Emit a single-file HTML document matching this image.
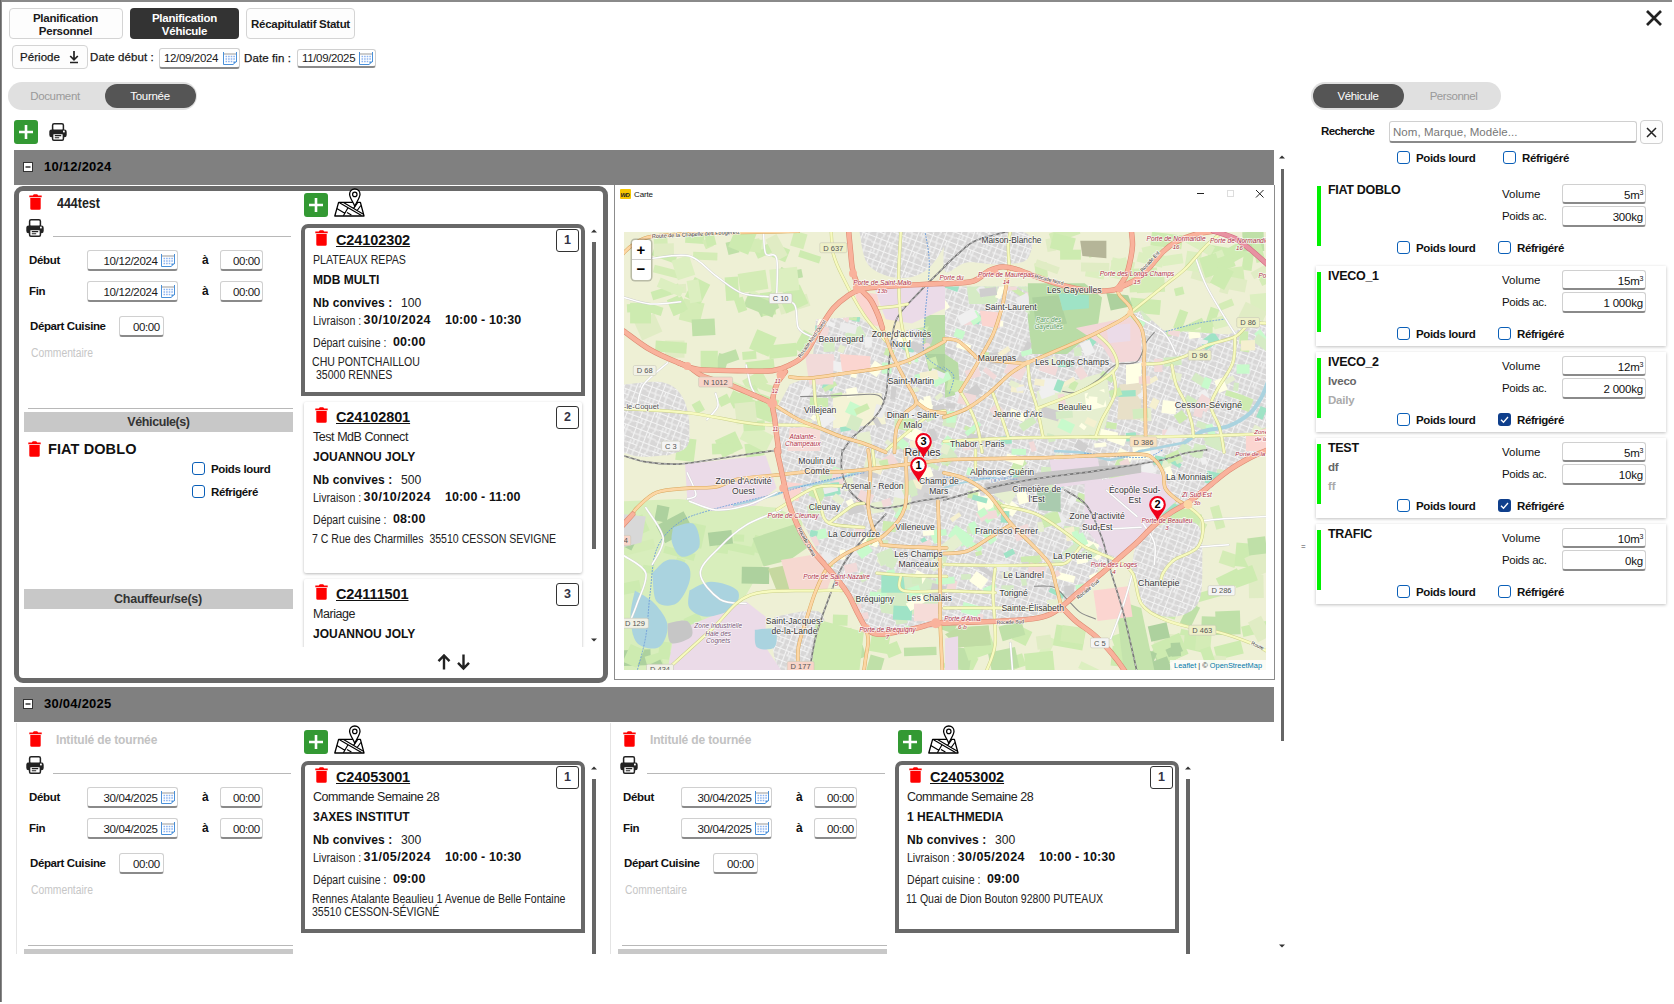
<!DOCTYPE html><html lang="fr"><head><meta charset="utf-8"><title>Planification Véhicule</title><style>html,body{margin:0;padding:0}body{width:1674px;height:1004px;position:relative;overflow:hidden;background:#fff;font-family:"Liberation Sans",sans-serif;}div,span,svg{box-sizing:content-box}svg{display:block}</style></head><body>
<div style="position:absolute;left:0px;top:0px;width:1672px;height:2px;background:#8a8a8a;"></div>
<div style="position:absolute;left:0px;top:0px;width:2px;height:1002px;background:linear-gradient(90deg,#555,#999);"></div>
<div style="position:absolute;left:9px;top:8px;width:112px;height:29px;border:1px solid #d4d4d4;border-radius:4px;background:#fdfdfd;"></div>
<span style="position:absolute;top:13.27px;font-size:11.5px;line-height:1;white-space:pre;color:#1a1a1a;font-weight:700;letter-spacing:-0.25px;left:-134.5px;width:400px;text-align:center;">Planification</span>
<span style="position:absolute;top:26.27px;font-size:11.5px;line-height:1;white-space:pre;color:#1a1a1a;font-weight:700;letter-spacing:-0.25px;left:-134.5px;width:400px;text-align:center;">Personnel</span>
<div style="position:absolute;left:130px;top:8px;width:109px;height:31px;border-radius:4px;background:#333;"></div>
<span style="position:absolute;top:13.27px;font-size:11.5px;line-height:1;white-space:pre;color:#fff;font-weight:700;letter-spacing:-0.25px;left:-15.5px;width:400px;text-align:center;">Planification</span>
<span style="position:absolute;top:26.27px;font-size:11.5px;line-height:1;white-space:pre;color:#fff;font-weight:700;letter-spacing:-0.25px;left:-15.5px;width:400px;text-align:center;">Véhicule</span>
<div style="position:absolute;left:246px;top:8px;width:107px;height:29px;border:1px solid #d4d4d4;border-radius:4px;background:#fdfdfd;"></div>
<span style="position:absolute;top:19.27px;font-size:11.5px;line-height:1;white-space:pre;color:#1a1a1a;font-weight:700;letter-spacing:-0.3px;left:100.5px;width:400px;text-align:center;">Récapitulatif Statut</span>
<div style="position:absolute;left:12px;top:45px;width:74px;height:22px;border:1px solid #d4d4d4;border-radius:4px;background:#fdfdfd;"></div>
<span style="position:absolute;top:52.27px;font-size:11.5px;line-height:1;white-space:pre;color:#1a1a1a;letter-spacing:0.05px;left:20px;-webkit-text-stroke:0.25px #1a1a1a;">Période</span>
<svg style="position:absolute;left:68px;top:50px" width="12" height="14" viewBox="0 0 12 14"><path d="M6 1v8.500M2.200 6L6 9.800 9.800 6M2 12.500h8" stroke="#222" stroke-width="1.7" fill="none"/></svg>
<span style="position:absolute;top:52.27px;font-size:11.5px;line-height:1;white-space:pre;color:#1a1a1a;letter-spacing:0.1px;left:90px;-webkit-text-stroke:0.25px #1a1a1a;">Date début :</span>
<div style="position:absolute;left:159px;top:48px;width:79px;height:18px;background:#fff;border:1px solid #d0d0d0;border-bottom:2px solid #8a8a8a;border-radius:3px;"></div>
<span style="position:absolute;top:52.77px;font-size:11.5px;line-height:1;white-space:pre;color:#1a1a1a;letter-spacing:-0.35px;left:164px;">12/09/2024</span>
<svg style="position:absolute;left:223px;top:51.5px" width="14" height="13" viewBox="0 0 14 13"><rect x="0.5" y="0.5" width="13" height="12" fill="#fff" stroke="none"/><path d="M0.5 0v12.5M13.5 0v10" stroke="#4a90d9" stroke-width="1"/><path d="M1 2h12" stroke="#999" stroke-width="1"/><path d="M2.5 4.5h10M2.5 7h10M2.5 9.500h8" stroke="#8db4f0" stroke-width="1.6" stroke-dasharray="1.6 1"/><path d="M10.5 12.500l3-2.5v-0.500h-3z" fill="#4a90d9"/><path d="M0.5 12.500h10" stroke="#4a90d9" stroke-width="1"/></svg>
<span style="position:absolute;top:53.27px;font-size:11.5px;line-height:1;white-space:pre;color:#1a1a1a;letter-spacing:0.1px;left:244px;-webkit-text-stroke:0.25px #1a1a1a;">Date fin :</span>
<div style="position:absolute;left:297px;top:49px;width:77px;height:16px;background:#fff;border:1px solid #d0d0d0;border-bottom:2px solid #8a8a8a;border-radius:3px;"></div>
<span style="position:absolute;top:52.77px;font-size:11.5px;line-height:1;white-space:pre;color:#1a1a1a;letter-spacing:-0.35px;left:302px;">11/09/2025</span>
<svg style="position:absolute;left:359px;top:51.5px" width="14" height="13" viewBox="0 0 14 13"><rect x="0.5" y="0.5" width="13" height="12" fill="#fff" stroke="none"/><path d="M0.5 0v12.5M13.5 0v10" stroke="#4a90d9" stroke-width="1"/><path d="M1 2h12" stroke="#999" stroke-width="1"/><path d="M2.5 4.5h10M2.5 7h10M2.5 9.500h8" stroke="#8db4f0" stroke-width="1.6" stroke-dasharray="1.6 1"/><path d="M10.5 12.500l3-2.5v-0.500h-3z" fill="#4a90d9"/><path d="M0.5 12.500h10" stroke="#4a90d9" stroke-width="1"/></svg>
<div style="position:absolute;left:8px;top:82px;width:189px;height:28px;background:#e0e0e0;border-radius:14px;"></div>
<div style="position:absolute;left:105px;top:84px;width:91px;height:24px;background:#555;border-radius:12px;"></div>
<span style="position:absolute;top:91.27px;font-size:11.5px;line-height:1;white-space:pre;color:#9a9a9a;letter-spacing:-0.35px;left:-145px;width:400px;text-align:center;">Document</span>
<span style="position:absolute;top:91.27px;font-size:11.5px;line-height:1;white-space:pre;color:#fff;letter-spacing:-0.3px;left:-50px;width:400px;text-align:center;">Tournée</span>
<div style="position:absolute;left:14px;top:120px;width:24px;height:24px;background:#339933;border-radius:3px"><svg width="24" height="24" viewBox="0 0 24 24"><path d="M12 5v14M5 12h14" stroke="#fff" stroke-width="2.6"/></svg></div>
<svg style="position:absolute;left:49px;top:123px" width="18" height="18" viewBox="0 0 18 18"><rect x="3.6" y="0.8" width="10.8" height="7" rx="1.5" fill="#fff" stroke="#222" stroke-width="1.5"/><rect x="0.3" y="6.6" width="17.4" height="7.6" rx="2.2" fill="#222"/><rect x="3.6" y="10.4" width="10.8" height="6.8" rx="1.2" fill="#fff" stroke="#222" stroke-width="1.5"/><path d="M5.8 12.6h6.4M5.8 14.7h4.4" stroke="#222" stroke-width="1.1"/><rect x="14" y="7.6" width="1.8" height="1.8" fill="#fff"/></svg>
<svg style="position:absolute;left:1645px;top:9px" width="18" height="18" viewBox="0 0 18 18"><path d="M2 2l14 14M16 2L2 16" stroke="#222" stroke-width="2.7"/></svg>
<div style="position:absolute;left:14px;top:150px;width:1260px;height:34.5px;background:#808080;"></div>
<svg style="position:absolute;left:23px;top:162px" width="10" height="10" viewBox="0 0 10 10"><rect x="0.5" y="0.5" width="9" height="9" fill="#fff" stroke="#333"/><path d="M2.500 5h5" stroke="#000" stroke-width="1.2"/></svg>
<span style="position:absolute;top:159.50px;font-size:13px;line-height:1;white-space:pre;color:#000;font-weight:700;letter-spacing:0.25px;left:44px;">10/12/2024</span>
<div style="position:absolute;left:14px;top:186px;width:594px;height:496.5px;overflow:hidden">
<div style="position:absolute;left:0px;top:0px;width:584px;height:486.5px;border:5px solid #696969;border-radius:9px;"></div>
<svg style="position:absolute;left:15px;top:8px" width="13" height="16" viewBox="0 0 13 16"><path fill="#ff0000" d="M0.3 1.5h3.5l1-1.3h3.4l1 1.3h3.5v1.7H0.3z M1.3 4h10.4v10.4a1.4 1.4 0 0 1-1.4 1.4H2.7a1.4 1.4 0 0 1-1.4-1.4z"/></svg>
<span style="position:absolute;top:10.15px;font-size:14px;line-height:1;white-space:pre;color:#222;font-weight:700;left:43px;transform:scaleX(0.89);transform-origin:0 0;">444test</span>
<svg style="position:absolute;left:12px;top:33px" width="18" height="18" viewBox="0 0 18 18"><rect x="3.6" y="0.8" width="10.8" height="7" rx="1.5" fill="#fff" stroke="#222" stroke-width="1.5"/><rect x="0.3" y="6.6" width="17.4" height="7.6" rx="2.2" fill="#222"/><rect x="3.6" y="10.4" width="10.8" height="6.8" rx="1.2" fill="#fff" stroke="#222" stroke-width="1.5"/><path d="M5.8 12.6h6.4M5.8 14.7h4.4" stroke="#222" stroke-width="1.1"/><rect x="14" y="7.6" width="1.8" height="1.8" fill="#fff"/></svg>
<div style="position:absolute;left:39px;top:50px;width:238px;height:1px;background:#b8b8b8;"></div>
<span style="position:absolute;top:68.77px;font-size:11.5px;line-height:1;white-space:pre;color:#111;font-weight:700;letter-spacing:-0.3px;left:15px;">Début</span>
<div style="position:absolute;left:73px;top:64px;width:89px;height:18px;background:#fff;border:1px solid #d0d0d0;border-bottom:2px solid #8a8a8a;border-radius:3px;"></div>
<span style="position:absolute;top:69.77px;font-size:11.5px;line-height:1;white-space:pre;color:#1a1a1a;letter-spacing:-0.35px;left:89.5px;">10/12/2024</span>
<svg style="position:absolute;left:147px;top:68px" width="14" height="13" viewBox="0 0 14 13"><rect x="0.5" y="0.5" width="13" height="12" fill="#fff" stroke="none"/><path d="M0.5 0v12.5M13.5 0v10" stroke="#4a90d9" stroke-width="1"/><path d="M1 2h12" stroke="#999" stroke-width="1"/><path d="M2.5 4.5h10M2.5 7h10M2.5 9.500h8" stroke="#8db4f0" stroke-width="1.6" stroke-dasharray="1.6 1"/><path d="M10.5 12.500l3-2.5v-0.500h-3z" fill="#4a90d9"/><path d="M0.5 12.500h10" stroke="#4a90d9" stroke-width="1"/></svg>
<span style="position:absolute;top:68.34px;font-size:12px;line-height:1;white-space:pre;color:#111;font-weight:700;left:188px;">à</span>
<div style="position:absolute;left:206px;top:64px;width:41px;height:18px;background:#fff;border:1px solid #d0d0d0;border-bottom:2px solid #8a8a8a;border-radius:3px;"></div>
<span style="position:absolute;top:69.77px;font-size:11.5px;line-height:1;white-space:pre;color:#1a1a1a;letter-spacing:-0.4px;left:219px;">00:00</span>
<span style="position:absolute;top:99.77px;font-size:11.5px;line-height:1;white-space:pre;color:#111;font-weight:700;letter-spacing:-0.3px;left:15px;">Fin</span>
<div style="position:absolute;left:73px;top:95px;width:89px;height:18px;background:#fff;border:1px solid #d0d0d0;border-bottom:2px solid #8a8a8a;border-radius:3px;"></div>
<span style="position:absolute;top:100.77px;font-size:11.5px;line-height:1;white-space:pre;color:#1a1a1a;letter-spacing:-0.35px;left:89.5px;">10/12/2024</span>
<svg style="position:absolute;left:147px;top:99px" width="14" height="13" viewBox="0 0 14 13"><rect x="0.5" y="0.5" width="13" height="12" fill="#fff" stroke="none"/><path d="M0.5 0v12.5M13.5 0v10" stroke="#4a90d9" stroke-width="1"/><path d="M1 2h12" stroke="#999" stroke-width="1"/><path d="M2.5 4.5h10M2.5 7h10M2.5 9.500h8" stroke="#8db4f0" stroke-width="1.6" stroke-dasharray="1.6 1"/><path d="M10.5 12.500l3-2.5v-0.500h-3z" fill="#4a90d9"/><path d="M0.5 12.500h10" stroke="#4a90d9" stroke-width="1"/></svg>
<span style="position:absolute;top:99.34px;font-size:12px;line-height:1;white-space:pre;color:#111;font-weight:700;left:188px;">à</span>
<div style="position:absolute;left:206px;top:95px;width:41px;height:18px;background:#fff;border:1px solid #d0d0d0;border-bottom:2px solid #8a8a8a;border-radius:3px;"></div>
<span style="position:absolute;top:100.77px;font-size:11.5px;line-height:1;white-space:pre;color:#1a1a1a;letter-spacing:-0.4px;left:219px;">00:00</span>
<span style="position:absolute;top:135.27px;font-size:11.5px;line-height:1;white-space:pre;color:#111;font-weight:700;letter-spacing:-0.4px;left:16px;">Départ Cuisine</span>
<div style="position:absolute;left:105px;top:130px;width:43px;height:18px;background:#fff;border:1px solid #d0d0d0;border-bottom:2px solid #8a8a8a;border-radius:3px;"></div>
<span style="position:absolute;top:135.77px;font-size:11.5px;line-height:1;white-space:pre;color:#1a1a1a;letter-spacing:-0.4px;left:119px;">00:00</span>
<span style="position:absolute;top:160.84px;font-size:12px;line-height:1;white-space:pre;color:#c6c6c6;left:17px;transform:scaleX(0.86);transform-origin:0 0;">Commentaire</span>
<div style="position:absolute;left:14px;top:222px;width:265px;height:1px;background:#b8b8b8;"></div>
<div style="position:absolute;left:10px;top:226px;width:269px;height:20px;background:#c8c8c8;"></div>
<span style="position:absolute;top:229.92px;font-size:12.5px;line-height:1;white-space:pre;color:#333;font-weight:700;letter-spacing:-0.4px;left:-55.5px;width:400px;text-align:center;">Véhicule(s)</span>
<svg style="position:absolute;left:14px;top:255px" width="13" height="16" viewBox="0 0 13 16"><path fill="#ff0000" d="M0.3 1.5h3.5l1-1.3h3.4l1 1.3h3.5v1.7H0.3z M1.3 4h10.4v10.4a1.4 1.4 0 0 1-1.4 1.4H2.7a1.4 1.4 0 0 1-1.4-1.4z"/></svg>
<span style="position:absolute;top:256.23px;font-size:14.5px;line-height:1;white-space:pre;color:#111;font-weight:700;letter-spacing:0.1px;left:34px;-webkit-text-stroke:0;">FIAT DOBLO</span>
<div style="position:absolute;left:178px;top:276px;width:11px;height:11px;border:1px solid #0a5fb8;border-radius:3px;background:#fff;"></div>
<span style="position:absolute;top:277.77px;font-size:11.5px;line-height:1;white-space:pre;color:#111;font-weight:700;letter-spacing:-0.35px;left:197px;">Poids lourd</span>
<div style="position:absolute;left:178px;top:299px;width:11px;height:11px;border:1px solid #0a5fb8;border-radius:3px;background:#fff;"></div>
<span style="position:absolute;top:301.27px;font-size:11.5px;line-height:1;white-space:pre;color:#111;font-weight:700;letter-spacing:-0.4px;left:197px;">Réfrigéré</span>
<div style="position:absolute;left:10px;top:403px;width:269px;height:20px;background:#c8c8c8;"></div>
<span style="position:absolute;top:406.92px;font-size:12.5px;line-height:1;white-space:pre;color:#333;font-weight:700;letter-spacing:-0.25px;left:-56px;width:400px;text-align:center;">Chauffeur/se(s)</span>
<div style="position:absolute;left:290px;top:7px;width:24px;height:24px;background:#339933;border-radius:3px"><svg width="24" height="24" viewBox="0 0 24 24"><path d="M12 5v14M5 12h14" stroke="#fff" stroke-width="2.6"/></svg></div>
<svg style="position:absolute;left:319.5px;top:1.5px" width="31" height="29" viewBox="0 0 31 29"><path d="M4.6 14.4h21.8l3.6 13.6H0.8z" fill="#fff" stroke="#000" stroke-width="1.3" stroke-linejoin="round"/><path d="M5.5 14.8L27.5 27.6M9.5 14.6L29 26M2.8 20.5l8 4.8M14 19.8l-4.6 8M13 24.5l4.4 2.6M23.5 14.8l-4 5.6M26.8 17.5l-3.6 5" stroke="#000" stroke-width="1.2" fill="none"/><path d="M20.8 1c3 0 5.2 2.3 5.2 5.2 0 3.4-3.4 7.6-5.2 12-1.8-4.4-5.2-8.6-5.2-12C15.600 3.3 17.8 1 20.8 1z" fill="#fff" stroke="#000" stroke-width="1.3"/><circle cx="20.8" cy="6.4" r="2.2" fill="#fff" stroke="#000" stroke-width="1.2"/></svg>
<div style="position:absolute;left:284px;top:36px;width:292px;height:424.5px;overflow:hidden">
<div style="position:absolute;left:3px;top:2px;width:276px;height:163.5px;border:4px solid #686868;border-bottom-width:4px;border-radius:7px 7px 0 0;background:#fff;"></div><svg style="position:absolute;left:16.5px;top:8px" width="13" height="16" viewBox="0 0 13 16"><path fill="#ff0000" d="M0.3 1.5h3.5l1-1.3h3.4l1 1.3h3.5v1.7H0.3z M1.3 4h10.4v10.4a1.4 1.4 0 0 1-1.4 1.4H2.7a1.4 1.4 0 0 1-1.4-1.4z"/></svg><span style="position:absolute;top:10.73px;font-size:14.5px;line-height:1;white-space:pre;color:#111;font-weight:700;letter-spacing:-0.1px;left:38px;text-decoration:underline;text-underline-offset:0.5px;text-decoration-thickness:1px;">C24102302</span><div style="position:absolute;left:258px;top:6.5px;width:21px;height:21.5px;border:1px solid #333;border-radius:3px;background:#fff;"></div><span style="position:absolute;top:11.92px;font-size:12.5px;line-height:1;white-space:pre;color:#334;font-weight:700;left:69.5px;width:400px;text-align:center;">1</span><span style="position:absolute;top:31.84px;font-size:12px;line-height:1;white-space:pre;color:#222;left:15px;transform:scaleX(0.885);transform-origin:0 0;">PLATEAUX REPAS</span><span style="position:absolute;top:52.34px;font-size:12px;line-height:1;white-space:pre;color:#111;font-weight:700;letter-spacing:0px;left:15px;">MDB MULTI</span><span style="position:absolute;top:75.34px;font-size:12px;line-height:1;white-space:pre;color:#111;font-weight:700;letter-spacing:0.1px;left:15px;">Nb convives :</span><span style="position:absolute;top:74.07px;font-size:13.5px;line-height:1;white-space:pre;color:#222;left:102.5px;transform:scaleX(0.9);transform-origin:0 0;">100</span><span style="position:absolute;top:92.84px;font-size:12px;line-height:1;white-space:pre;color:#222;left:15px;transform:scaleX(0.88);transform-origin:0 0;">Livraison :</span><span style="position:absolute;top:92.42px;font-size:12.5px;line-height:1;white-space:pre;color:#111;font-weight:700;letter-spacing:0.5px;left:65.5px;">30/10/2024</span><span style="position:absolute;top:92.42px;font-size:12.5px;line-height:1;white-space:pre;color:#111;font-weight:700;letter-spacing:0.1px;left:147px;">10:00 - 10:30</span><span style="position:absolute;top:114.84px;font-size:12px;line-height:1;white-space:pre;color:#222;left:15px;transform:scaleX(0.88);transform-origin:0 0;">Départ cuisine :</span><span style="position:absolute;top:114.42px;font-size:12.5px;line-height:1;white-space:pre;color:#111;font-weight:700;letter-spacing:0.1px;left:95px;">00:00</span><span style="position:absolute;top:133.84px;font-size:12px;line-height:1;white-space:pre;color:#222;left:14px;transform:scaleX(0.88);transform-origin:0 0;">CHU PONTCHAILLOU</span><span style="position:absolute;top:146.84px;font-size:12px;line-height:1;white-space:pre;color:#222;left:18px;transform:scaleX(0.88);transform-origin:0 0;">35000 RENNES</span>
<div style="position:absolute;left:6px;top:180px;width:278px;height:171px;background:#fff;box-shadow:0 1px 3px rgba(0,0,0,.28);border-radius:2px;"></div><svg style="position:absolute;left:16.5px;top:185px" width="13" height="16" viewBox="0 0 13 16"><path fill="#ff0000" d="M0.3 1.5h3.5l1-1.3h3.4l1 1.3h3.5v1.7H0.3z M1.3 4h10.4v10.4a1.4 1.4 0 0 1-1.4 1.4H2.7a1.4 1.4 0 0 1-1.4-1.4z"/></svg><span style="position:absolute;top:187.73px;font-size:14.5px;line-height:1;white-space:pre;color:#111;font-weight:700;letter-spacing:-0.1px;left:38px;text-decoration:underline;text-underline-offset:0.5px;text-decoration-thickness:1px;">C24102801</span><div style="position:absolute;left:258px;top:183.5px;width:21px;height:21.5px;border:1px solid #333;border-radius:3px;background:#fff;"></div><span style="position:absolute;top:188.92px;font-size:12.5px;line-height:1;white-space:pre;color:#334;font-weight:700;left:69.5px;width:400px;text-align:center;">2</span><span style="position:absolute;top:209.42px;font-size:12.5px;line-height:1;white-space:pre;color:#222;letter-spacing:-0.45px;left:15px;">Test MdB Connect</span><span style="position:absolute;top:229.34px;font-size:12px;line-height:1;white-space:pre;color:#111;font-weight:700;letter-spacing:0px;left:15px;">JOUANNOU JOLY</span><span style="position:absolute;top:252.34px;font-size:12px;line-height:1;white-space:pre;color:#111;font-weight:700;letter-spacing:0.1px;left:15px;">Nb convives :</span><span style="position:absolute;top:251.07px;font-size:13.5px;line-height:1;white-space:pre;color:#222;left:102.5px;transform:scaleX(0.9);transform-origin:0 0;">500</span><span style="position:absolute;top:269.84px;font-size:12px;line-height:1;white-space:pre;color:#222;left:15px;transform:scaleX(0.88);transform-origin:0 0;">Livraison :</span><span style="position:absolute;top:269.42px;font-size:12.5px;line-height:1;white-space:pre;color:#111;font-weight:700;letter-spacing:0.5px;left:65.5px;">30/10/2024</span><span style="position:absolute;top:269.42px;font-size:12.5px;line-height:1;white-space:pre;color:#111;font-weight:700;letter-spacing:0.1px;left:147px;">10:00 - 11:00</span><span style="position:absolute;top:291.84px;font-size:12px;line-height:1;white-space:pre;color:#222;left:15px;transform:scaleX(0.88);transform-origin:0 0;">Départ cuisine :</span><span style="position:absolute;top:291.42px;font-size:12.5px;line-height:1;white-space:pre;color:#111;font-weight:700;letter-spacing:0.1px;left:95px;">08:00</span><span style="position:absolute;top:310.84px;font-size:12px;line-height:1;white-space:pre;color:#222;left:14px;transform:scaleX(0.88);transform-origin:0 0;">7 C Rue des Charmilles  35510 CESSON SEVIGNE</span>
<div style="position:absolute;left:6px;top:357px;width:278px;height:171px;background:#fff;box-shadow:0 1px 3px rgba(0,0,0,.28);border-radius:2px;"></div><svg style="position:absolute;left:16.5px;top:362px" width="13" height="16" viewBox="0 0 13 16"><path fill="#ff0000" d="M0.3 1.5h3.5l1-1.3h3.4l1 1.3h3.5v1.7H0.3z M1.3 4h10.4v10.4a1.4 1.4 0 0 1-1.4 1.4H2.7a1.4 1.4 0 0 1-1.4-1.4z"/></svg><span style="position:absolute;top:364.73px;font-size:14.5px;line-height:1;white-space:pre;color:#111;font-weight:700;letter-spacing:-0.1px;left:38px;text-decoration:underline;text-underline-offset:0.5px;text-decoration-thickness:1px;">C24111501</span><div style="position:absolute;left:258px;top:360.5px;width:21px;height:21.5px;border:1px solid #333;border-radius:3px;background:#fff;"></div><span style="position:absolute;top:365.92px;font-size:12.5px;line-height:1;white-space:pre;color:#334;font-weight:700;left:69.5px;width:400px;text-align:center;">3</span><span style="position:absolute;top:386.42px;font-size:12.5px;line-height:1;white-space:pre;color:#222;letter-spacing:-0.45px;left:15px;">Mariage</span><span style="position:absolute;top:406.34px;font-size:12px;line-height:1;white-space:pre;color:#111;font-weight:700;letter-spacing:0px;left:15px;">JOUANNOU JOLY</span><span style="position:absolute;top:429.34px;font-size:12px;line-height:1;white-space:pre;color:#111;font-weight:700;letter-spacing:0.1px;left:15px;">Nb convives :</span><span style="position:absolute;top:428.07px;font-size:13.5px;line-height:1;white-space:pre;color:#222;left:102.5px;transform:scaleX(0.9);transform-origin:0 0;">50</span><span style="position:absolute;top:446.84px;font-size:12px;line-height:1;white-space:pre;color:#222;left:15px;transform:scaleX(0.88);transform-origin:0 0;">Livraison :</span><span style="position:absolute;top:446.42px;font-size:12.5px;line-height:1;white-space:pre;color:#111;font-weight:700;letter-spacing:0.5px;left:65.5px;">15/11/2024</span><span style="position:absolute;top:446.42px;font-size:12.5px;line-height:1;white-space:pre;color:#111;font-weight:700;letter-spacing:0.1px;left:147px;">10:00 - 11:00</span><span style="position:absolute;top:468.84px;font-size:12px;line-height:1;white-space:pre;color:#222;left:15px;transform:scaleX(0.88);transform-origin:0 0;">Départ cuisine :</span><span style="position:absolute;top:468.42px;font-size:12.5px;line-height:1;white-space:pre;color:#111;font-weight:700;letter-spacing:0.1px;left:95px;">08:00</span><span style="position:absolute;top:487.84px;font-size:12px;line-height:1;white-space:pre;color:#222;left:14px;transform:scaleX(0.88);transform-origin:0 0;"></span>
</div>
<svg style="position:absolute;left:576px;top:42px" width="8" height="6" viewBox="0 0 8 6"><path d="M1 4.500h6L4 1.500z" fill="#333"/></svg>
<svg style="position:absolute;left:576px;top:451px" width="8" height="6" viewBox="0 0 8 6"><path d="M1 1.500h6L4 4.500z" fill="#333"/></svg>
<div style="position:absolute;left:578px;top:56px;width:3.5px;height:307px;background:#666;"></div>
<svg style="position:absolute;left:422px;top:467px" width="36" height="18" viewBox="0 0 36 18"><path d="M8 16.500V3M2.500 8.200L8 2.500l5.500 5.700M27.500 1.500V15M22 9.800l5.500 5.700L33 9.800" stroke="#222" stroke-width="2.4" fill="none"/></svg>
</div>
<div style="position:absolute;left:614px;top:184.5px;width:659px;height:494px;border:1px solid #8c8c8c;border-top:none;background:#fff;"></div>
<div style="position:absolute;left:620px;top:189px;width:10.5px;height:10px;background:#f6c600;border-radius:1px;"></div>
<span style="position:absolute;top:191.92px;font-size:6px;line-height:1;white-space:pre;color:#222;font-weight:700;letter-spacing:-0.8px;left:620.6px;font-style:italic;">WD</span>
<span style="position:absolute;top:190.73px;font-size:8px;line-height:1;white-space:pre;color:#111;letter-spacing:-0.15px;left:634px;">Carte</span>
<svg style="position:absolute;left:1190px;top:186px" width="80" height="16" viewBox="0 0 80 16"><path d="M7 7.500h7" stroke="#222" stroke-width="1"/><rect x="37.500" y="4.500" width="6" height="6" fill="none" stroke="#ddd"/><path d="M66 4l7.500 7.500M73.500 4L66 11.500" stroke="#222" stroke-width="1"/></svg>
<div style="position:absolute;left:624px;top:232px;width:642px;height:438px;overflow:hidden;background:#eef0d5"><svg width="642" height="438" viewBox="0 0 642 438" style="position:absolute;left:0;top:0;font-family:'Liberation Sans',sans-serif"><defs><pattern id="urb" width="26" height="22" patternUnits="userSpaceOnUse" patternTransform="rotate(21)"><rect width="26" height="22" fill="#d8d7d7"/><path d="M0 2.500h26M0 8h15M17 7h9M0 13.500h26M0 18.500h11M13 19h13M3.500 0v13M3 15v7M9 0v8M10 8v14M15.500 0v22M21 0v13M22 13v9M6 13.500v5M18.500 2.500v5" stroke="#f4f4f4" stroke-width="1.100" fill="none"/></pattern></defs><rect width="642" height="438" fill="#eef0d5"/><path d="M0.0 269.2 L54.5 267.0 L152.6 275.7 L178.8 288.8 L174.4 321.5 L139.6 332.4 L122.1 362.9 L82.9 397.8 L39.2 437.9 L0.0 437.9Z" fill="#d8eebc"/><rect x="69.1" y="20.2" width="24.3" height="7.8" fill="#d4ecb6" transform="rotate(2 81.2 24.1)"/><rect x="118.4" y="119.4" width="13.9" height="8.0" fill="#cdebb0" transform="rotate(-5 125.3 123.4)"/><rect x="27.3" y="55.6" width="28.6" height="8.7" fill="#cdebb0" transform="rotate(-17 41.6 59.9)"/><rect x="113.9" y="8.8" width="22.8" height="7.4" fill="#e0ecc4" transform="rotate(-17 125.3 12.5)"/><rect x="166.1" y="38.0" width="12.2" height="8.6" fill="#bfe0a8" transform="rotate(-11 172.2 42.3)"/><rect x="131.0" y="12.9" width="22.4" height="9.8" fill="#cdebb0" transform="rotate(-24 142.2 17.8)"/><rect x="30.0" y="3.0" width="13.7" height="18.4" fill="#d4ecb6" transform="rotate(-4 36.8 12.2)"/><rect x="96.7" y="119.7" width="17.4" height="10.9" fill="#bfe0a8" transform="rotate(-19 105.4 125.2)"/><rect x="57.0" y="68.6" width="21.3" height="21.8" fill="#d4ecb6" transform="rotate(14 67.7 79.5)"/><rect x="119.2" y="9.2" width="21.0" height="9.4" fill="#dcefc0" transform="rotate(-9 129.7 13.9)"/><rect x="92.6" y="122.1" width="10.6" height="16.3" fill="#bfe0a8" transform="rotate(17 97.9 130.2)"/><rect x="68.0" y="87.0" width="23.0" height="16.7" fill="#bfe0a8" transform="rotate(-3 79.5 95.3)"/><rect x="29.4" y="35.8" width="25.4" height="7.7" fill="#d4ecb6" transform="rotate(14 42.1 39.7)"/><rect x="122.0" y="128.5" width="28.4" height="11.5" fill="#cdebb0" transform="rotate(-7 136.2 134.3)"/><rect x="76.6" y="118.8" width="17.2" height="17.2" fill="#cdebb0" transform="rotate(-0 85.2 127.4)"/><rect x="149.5" y="14.6" width="14.7" height="13.4" fill="#cdebb0" transform="rotate(22 156.8 21.3)"/><rect x="46.8" y="52.4" width="15.4" height="8.9" fill="#e0ecc4" transform="rotate(-4 54.5 56.9)"/><rect x="64.9" y="47.7" width="17.3" height="22.0" fill="#cdebb0" transform="rotate(27 73.5 58.7)"/><rect x="28.0" y="20.8" width="24.5" height="6.8" fill="#cdebb0" transform="rotate(20 40.3 24.2)"/><rect x="61.5" y="-1.6" width="18.8" height="13.0" fill="#cdebb0" transform="rotate(4 70.9 4.9)"/><rect x="131.8" y="62.6" width="23.5" height="18.3" fill="#bfe0a8" transform="rotate(-27 143.6 71.8)"/><rect x="144.9" y="112.1" width="27.9" height="13.4" fill="#cdebb0" transform="rotate(-6 158.8 118.8)"/><rect x="101.4" y="44.9" width="13.3" height="23.7" fill="#cdebb0" transform="rotate(-4 108.1 56.8)"/><rect x="79.6" y="6.6" width="8.7" height="9.2" fill="#d4ecb6" transform="rotate(-24 84.0 11.2)"/><rect x="123.7" y="7.0" width="13.7" height="13.1" fill="#d4ecb6" transform="rotate(8 130.6 13.6)"/><rect x="122.9" y="58.9" width="11.5" height="15.1" fill="#dcefc0" transform="rotate(29 128.6 66.4)"/><rect x="102.9" y="9.3" width="11.2" height="12.5" fill="#bfe0a8" transform="rotate(-14 108.5 15.6)"/><rect x="137.1" y="60.3" width="13.6" height="23.1" fill="#cdebb0" transform="rotate(-8 143.9 71.9)"/><rect x="107.9" y="-3.9" width="21.4" height="23.6" fill="#cdebb0" transform="rotate(22 118.6 7.9)"/><rect x="154.7" y="65.8" width="30.5" height="12.7" fill="#e0ecc4" transform="rotate(-17 170.0 72.2)"/><rect x="151.6" y="37.1" width="14.1" height="20.7" fill="#bfe0a8" transform="rotate(29 158.7 47.5)"/><rect x="50.2" y="25.4" width="18.3" height="20.6" fill="#dcefc0" transform="rotate(-18 59.4 35.7)"/><rect x="81.9" y="2.4" width="9.4" height="11.4" fill="#cdebb0" transform="rotate(-14 86.6 8.2)"/><rect x="115.0" y="39.8" width="28.1" height="19.2" fill="#d4ecb6" transform="rotate(-9 129.1 49.4)"/><rect x="29.9" y="11.5" width="20.0" height="12.4" fill="#e0ecc4" transform="rotate(-1 39.9 17.7)"/><rect x="156.9" y="56.8" width="24.4" height="20.5" fill="#cdebb0" transform="rotate(-25 169.1 67.1)"/><rect x="33.7" y="50.2" width="25.8" height="10.0" fill="#dcefc0" transform="rotate(23 46.6 55.2)"/><rect x="146.4" y="36.1" width="27.9" height="23.5" fill="#dcefc0" transform="rotate(-6 160.4 47.9)"/><rect x="146.3" y="3.5" width="12.5" height="23.9" fill="#e0ecc4" transform="rotate(-28 152.6 15.5)"/><rect x="174.0" y="99.4" width="12.2" height="21.0" fill="#cdebb0" transform="rotate(29 180.1 109.9)"/><rect x="174.7" y="21.3" width="21.9" height="6.9" fill="#cdebb0" transform="rotate(18 185.6 24.8)"/><rect x="121.1" y="66.2" width="31.1" height="14.1" fill="#bfe0a8" transform="rotate(22 136.7 73.3)"/><rect x="167.9" y="0.4" width="13.8" height="15.3" fill="#d4ecb6" transform="rotate(16 174.8 8.0)"/><rect x="64.3" y="48.0" width="11.9" height="22.4" fill="#dcefc0" transform="rotate(-9 70.3 59.2)"/><rect x="128.3" y="100.5" width="21.1" height="21.0" fill="#cdebb0" transform="rotate(23 138.8 111.0)"/><rect x="112.0" y="65.7" width="9.2" height="14.2" fill="#cdebb0" transform="rotate(-19 116.6 72.9)"/><rect x="45.7" y="65.2" width="12.1" height="17.3" fill="#cdebb0" transform="rotate(-23 51.7 73.9)"/><rect x="13.2" y="84.7" width="22.0" height="20.2" fill="#e0ecc4" transform="rotate(-24 24.3 94.8)"/><rect x="3.0" y="72.1" width="9.7" height="8.2" fill="#cdebb0" transform="rotate(-3 7.8 76.3)"/><rect x="41.1" y="108.5" width="19.4" height="17.2" fill="#e0ecc4" transform="rotate(0 50.8 117.1)"/><rect x="6.1" y="70.8" width="20.9" height="20.6" fill="#cdebb0" transform="rotate(0 16.5 81.1)"/><rect x="31.4" y="109.6" width="31.3" height="11.1" fill="#cdebb0" transform="rotate(4 47.1 115.1)"/><rect x="49.8" y="66.1" width="11.6" height="14.3" fill="#cdebb0" transform="rotate(-26 55.6 73.2)"/><rect x="22.5" y="73.1" width="16.0" height="8.7" fill="#cdebb0" transform="rotate(17 30.5 77.5)"/><rect x="120.2" y="169.4" width="14.8" height="8.9" fill="#cdebb0" transform="rotate(-2 127.6 173.8)"/><rect x="131.5" y="164.2" width="20.4" height="23.8" fill="#cdebb0" transform="rotate(20 141.7 176.1)"/><rect x="121.3" y="210.7" width="18.4" height="13.9" fill="#cdebb0" transform="rotate(-9 130.5 217.6)"/><rect x="120.2" y="142.5" width="22.0" height="14.2" fill="#d4ecb6" transform="rotate(-29 131.2 149.6)"/><rect x="105.9" y="164.6" width="31.8" height="8.5" fill="#cdebb0" transform="rotate(25 121.8 168.9)"/><rect x="135.1" y="152.0" width="15.1" height="7.2" fill="#d4ecb6" transform="rotate(17 142.6 155.6)"/><rect x="118.2" y="196.3" width="29.1" height="18.3" fill="#dcefc0" transform="rotate(27 132.7 205.5)"/><rect x="93.8" y="203.0" width="22.4" height="18.8" fill="#cdebb0" transform="rotate(-25 105.0 212.4)"/><rect x="105.2" y="159.0" width="30.2" height="11.2" fill="#cdebb0" transform="rotate(-29 120.3 164.6)"/><rect x="105.9" y="154.3" width="29.3" height="7.7" fill="#dcefc0" transform="rotate(22 120.5 158.1)"/><rect x="52.5" y="206.4" width="18.7" height="22.5" fill="#cdebb0" transform="rotate(7 61.9 217.7)"/><rect x="94.4" y="163.6" width="11.3" height="9.4" fill="#cdebb0" transform="rotate(-27 100.1 168.2)"/><rect x="119.4" y="188.7" width="21.5" height="10.1" fill="#cdebb0" transform="rotate(-3 130.2 193.8)"/><rect x="69.7" y="169.9" width="9.2" height="10.9" fill="#cdebb0" transform="rotate(-29 74.2 175.3)"/><rect x="88.0" y="211.2" width="21.1" height="10.8" fill="#cdebb0" transform="rotate(-3 98.5 216.6)"/><rect x="111.5" y="170.4" width="20.6" height="21.1" fill="#e0ecc4" transform="rotate(-6 121.8 180.9)"/><rect x="432.0" y="5.3" width="14.2" height="10.0" fill="#cdebb0" transform="rotate(23 439.1 10.3)"/><rect x="463.5" y="15.7" width="17.1" height="7.5" fill="#cdebb0" transform="rotate(-22 472.0 19.4)"/><rect x="461.4" y="38.5" width="19.1" height="7.5" fill="#dcefc0" transform="rotate(10 471.0 42.2)"/><rect x="487.8" y="26.8" width="15.5" height="10.8" fill="#dcefc0" transform="rotate(-12 495.5 32.2)"/><rect x="422.4" y="6.5" width="8.8" height="12.9" fill="#e0ecc4" transform="rotate(-10 426.8 12.9)"/><rect x="425.7" y="-3.5" width="29.9" height="10.3" fill="#d4ecb6" transform="rotate(-19 440.7 1.7)"/><rect x="436.1" y="17.7" width="20.8" height="10.0" fill="#cdebb0" transform="rotate(0 446.5 22.8)"/><rect x="411.2" y="30.8" width="12.2" height="16.8" fill="#d4ecb6" transform="rotate(-6 417.3 39.2)"/><rect x="427.4" y="3.3" width="22.8" height="15.8" fill="#cdebb0" transform="rotate(15 438.7 11.2)"/><rect x="486.3" y="27.7" width="23.0" height="19.9" fill="#dcefc0" transform="rotate(13 497.8 37.6)"/><rect x="411.1" y="31.1" width="24.2" height="7.3" fill="#e0ecc4" transform="rotate(20 423.2 34.7)"/><rect x="457.0" y="30.7" width="28.2" height="9.0" fill="#e0ecc4" transform="rotate(1 471.1 35.2)"/><rect x="583.6" y="75.8" width="9.1" height="18.5" fill="#cdebb0" transform="rotate(18 588.2 85.1)"/><rect x="595.3" y="69.0" width="14.2" height="7.1" fill="#d4ecb6" transform="rotate(-22 602.4 72.6)"/><rect x="627.2" y="35.7" width="19.5" height="7.4" fill="#e0ecc4" transform="rotate(-29 636.9 39.4)"/><rect x="597.7" y="41.0" width="8.8" height="20.5" fill="#e0ecc4" transform="rotate(15 602.1 51.2)"/><rect x="618.6" y="-0.2" width="21.3" height="19.6" fill="#bfe0a8" transform="rotate(-2 629.2 9.6)"/><rect x="513.4" y="22.7" width="26.2" height="10.1" fill="#dcefc0" transform="rotate(14 526.5 27.8)"/><rect x="568.8" y="30.8" width="20.2" height="18.5" fill="#e0ecc4" transform="rotate(16 578.9 40.0)"/><rect x="584.6" y="14.6" width="23.1" height="12.3" fill="#cdebb0" transform="rotate(9 596.2 20.8)"/><rect x="550.7" y="55.6" width="9.0" height="7.6" fill="#cdebb0" transform="rotate(-14 555.2 59.4)"/><rect x="519.4" y="13.3" width="20.5" height="18.9" fill="#dcefc0" transform="rotate(-13 529.7 22.8)"/><rect x="560.3" y="7.4" width="30.2" height="10.0" fill="#dcefc0" transform="rotate(29 575.4 12.4)"/><rect x="505.2" y="36.3" width="28.4" height="23.4" fill="#d4ecb6" transform="rotate(-3 519.4 48.0)"/><rect x="550.0" y="92.0" width="31.0" height="7.8" fill="#cdebb0" transform="rotate(-25 565.5 95.9)"/><rect x="576.7" y="89.3" width="11.9" height="20.8" fill="#cdebb0" transform="rotate(1 582.6 99.7)"/><rect x="589.8" y="16.7" width="30.3" height="15.0" fill="#cdebb0" transform="rotate(-29 605.0 24.2)"/><rect x="626.5" y="61.7" width="18.4" height="19.2" fill="#dcefc0" transform="rotate(-5 635.7 71.3)"/><rect x="552.3" y="78.1" width="8.8" height="19.6" fill="#cdebb0" transform="rotate(20 556.7 87.9)"/><rect x="630.0" y="10.8" width="9.0" height="19.4" fill="#cdebb0" transform="rotate(-15 634.5 20.5)"/><rect x="554.8" y="98.1" width="22.9" height="12.8" fill="#d4ecb6" transform="rotate(-4 566.3 104.5)"/><rect x="618.8" y="20.3" width="10.0" height="18.1" fill="#cdebb0" transform="rotate(8 623.8 29.4)"/><rect x="537.9" y="22.9" width="21.0" height="9.9" fill="#dcefc0" transform="rotate(-8 548.3 27.8)"/><rect x="615.6" y="73.7" width="23.9" height="22.5" fill="#e0ecc4" transform="rotate(26 627.5 85.0)"/><rect x="527.1" y="1.6" width="31.1" height="13.7" fill="#cdebb0" transform="rotate(7 542.6 8.4)"/><rect x="592.7" y="18.6" width="9.9" height="22.7" fill="#dcefc0" transform="rotate(-22 597.6 30.0)"/><rect x="561.6" y="19.8" width="14.9" height="19.4" fill="#dcefc0" transform="rotate(9 569.0 29.5)"/><rect x="588.0" y="24.8" width="22.1" height="13.4" fill="#cdebb0" transform="rotate(-20 599.1 31.5)"/><rect x="512.5" y="44.3" width="28.2" height="16.1" fill="#d4ecb6" transform="rotate(-3 526.6 52.4)"/><rect x="635.5" y="42.1" width="12.1" height="9.9" fill="#d4ecb6" transform="rotate(-25 641.5 47.1)"/><rect x="577.8" y="23.1" width="17.6" height="20.7" fill="#cdebb0" transform="rotate(-18 586.6 33.4)"/><rect x="601.4" y="35.4" width="18.6" height="15.7" fill="#d4ecb6" transform="rotate(-7 610.8 43.2)"/><rect x="599.8" y="45.7" width="22.5" height="12.8" fill="#e0ecc4" transform="rotate(11 611.1 52.1)"/><rect x="588.8" y="84.7" width="13.9" height="11.3" fill="#dcefc0" transform="rotate(-15 595.8 90.3)"/><rect x="589.7" y="34.8" width="16.2" height="20.7" fill="#cdebb0" transform="rotate(28 597.8 45.2)"/><rect x="506.2" y="66.9" width="30.2" height="14.8" fill="#cdebb0" transform="rotate(5 521.3 74.3)"/><rect x="-4.3" y="417.8" width="31.0" height="15.7" fill="#add19e" transform="rotate(-2 11.2 425.7)"/><rect x="31.7" y="273.9" width="12.4" height="15.7" fill="#add19e" transform="rotate(11 37.9 281.7)"/><rect x="8.6" y="394.4" width="8.8" height="8.7" fill="#cdebb0" transform="rotate(4 13.0 398.8)"/><rect x="92.6" y="310.4" width="11.8" height="10.9" fill="#cdebb0" transform="rotate(8 98.5 315.9)"/><rect x="-0.5" y="310.3" width="31.4" height="9.9" fill="#d4ecb6" transform="rotate(-14 15.2 315.3)"/><rect x="-16.1" y="351.1" width="32.6" height="11.4" fill="#cdebb0" transform="rotate(-11 0.2 356.8)"/><rect x="65.2" y="292.1" width="14.6" height="23.3" fill="#cdebb0" transform="rotate(12 72.5 303.8)"/><rect x="-6.5" y="287.7" width="29.9" height="17.8" fill="#cdebb0" transform="rotate(-25 8.4 296.6)"/><rect x="94.8" y="421.2" width="14.2" height="7.1" fill="#add19e" transform="rotate(-10 101.9 424.8)"/><rect x="50.9" y="326.3" width="8.9" height="11.6" fill="#cdebb0" transform="rotate(21 55.3 332.1)"/><rect x="23.2" y="422.2" width="16.2" height="20.8" fill="#cdebb0" transform="rotate(-16 31.3 432.6)"/><rect x="34.8" y="409.8" width="11.3" height="17.4" fill="#cdebb0" transform="rotate(7 40.5 418.5)"/><rect x="69.0" y="413.8" width="10.1" height="16.9" fill="#cdebb0" transform="rotate(25 74.0 422.2)"/><rect x="26.4" y="429.7" width="12.1" height="7.4" fill="#add19e" transform="rotate(-26 32.5 433.4)"/><rect x="60.5" y="383.2" width="16.3" height="8.5" fill="#cdebb0" transform="rotate(-25 68.6 387.4)"/><rect x="34.7" y="285.4" width="31.2" height="19.6" fill="#add19e" transform="rotate(-28 50.3 295.1)"/><rect x="118.4" y="431.1" width="19.3" height="8.4" fill="#cdebb0" transform="rotate(-25 128.1 435.3)"/><rect x="47.8" y="418.4" width="11.7" height="23.4" fill="#cdebb0" transform="rotate(-18 53.6 430.1)"/><rect x="103.3" y="312.7" width="28.0" height="8.1" fill="#cdebb0" transform="rotate(12 117.3 316.7)"/><rect x="50.2" y="417.4" width="13.4" height="12.9" fill="#cdebb0" transform="rotate(24 56.9 423.8)"/><rect x="84.6" y="299.3" width="23.7" height="13.6" fill="#add19e" transform="rotate(-7 96.4 306.1)"/><rect x="2.1" y="414.1" width="14.9" height="19.6" fill="#cdebb0" transform="rotate(24 9.6 423.9)"/><rect x="39.6" y="317.7" width="31.6" height="7.3" fill="#cdebb0" transform="rotate(15 55.4 321.3)"/><rect x="128.1" y="306.3" width="26.0" height="16.9" fill="#cdebb0" transform="rotate(18 141.1 314.8)"/><rect x="-6.4" y="292.0" width="20.1" height="23.2" fill="#add19e" transform="rotate(27 3.7 303.6)"/><rect x="106.4" y="418.3" width="28.3" height="8.9" fill="#cdebb0" transform="rotate(-0 120.6 422.8)"/><rect x="108.3" y="382.1" width="28.5" height="20.0" fill="#cdebb0" transform="rotate(6 122.5 392.1)"/><rect x="117.7" y="334.9" width="27.5" height="16.9" fill="#add19e" transform="rotate(1 131.5 343.4)"/><rect x="109.8" y="302.4" width="10.3" height="7.1" fill="#cdebb0" transform="rotate(3 114.9 306.0)"/><rect x="18.9" y="333.5" width="11.2" height="7.8" fill="#cdebb0" transform="rotate(7 24.5 337.4)"/><rect x="191.5" y="404.1" width="25.7" height="14.3" fill="#dcefc0" transform="rotate(-16 204.3 411.2)"/><rect x="244.2" y="424.2" width="14.4" height="15.9" fill="#bfe0a8" transform="rotate(16 251.4 432.1)"/><rect x="199.6" y="421.2" width="15.8" height="16.4" fill="#cdebb0" transform="rotate(-8 207.5 429.5)"/><rect x="218.9" y="402.8" width="13.2" height="10.6" fill="#e0ecc4" transform="rotate(-13 225.5 408.1)"/><rect x="208.8" y="382.8" width="14.8" height="10.8" fill="#cdebb0" transform="rotate(2 216.2 388.2)"/><rect x="280.0" y="415.3" width="32.5" height="8.3" fill="#bfe0a8" transform="rotate(-2 296.2 419.5)"/><rect x="212.9" y="397.7" width="17.7" height="21.8" fill="#cdebb0" transform="rotate(-16 221.7 408.6)"/><rect x="205.0" y="425.1" width="22.7" height="22.8" fill="#bfe0a8" transform="rotate(-8 216.4 436.5)"/><rect x="201.2" y="407.7" width="27.3" height="18.1" fill="#cdebb0" transform="rotate(-30 214.8 416.8)"/><rect x="261.9" y="411.2" width="13.9" height="13.0" fill="#cdebb0" transform="rotate(-22 268.8 417.7)"/><rect x="307.8" y="375.5" width="26.3" height="22.5" fill="#bfe0a8" transform="rotate(19 321.0 386.8)"/><rect x="227.6" y="414.8" width="13.2" height="12.0" fill="#bfe0a8" transform="rotate(-18 234.1 420.8)"/><rect x="246.6" y="400.2" width="18.5" height="20.4" fill="#cdebb0" transform="rotate(10 255.9 410.4)"/><rect x="268.1" y="380.2" width="12.6" height="18.7" fill="#d4ecb6" transform="rotate(-5 274.4 389.6)"/><rect x="418.0" y="404.8" width="10.0" height="19.5" fill="#dcefc0" transform="rotate(23 422.9 414.6)"/><rect x="368.3" y="426.0" width="32.6" height="12.9" fill="#cdebb0" transform="rotate(-18 384.6 432.5)"/><rect x="373.2" y="431.0" width="19.1" height="9.3" fill="#cdebb0" transform="rotate(-23 382.8 435.6)"/><rect x="373.1" y="428.5" width="19.8" height="9.4" fill="#e0ecc4" transform="rotate(-29 383.0 433.2)"/><rect x="333.6" y="421.9" width="18.2" height="16.5" fill="#cdebb0" transform="rotate(26 342.8 430.2)"/><rect x="390.2" y="395.8" width="15.5" height="15.6" fill="#cdebb0" transform="rotate(26 398.0 403.7)"/><rect x="365.7" y="417.7" width="27.7" height="20.6" fill="#bfe0a8" transform="rotate(-12 379.6 428.0)"/><rect x="454.8" y="433.2" width="20.3" height="7.5" fill="#dcefc0" transform="rotate(26 464.9 436.9)"/><rect x="321.6" y="415.3" width="25.2" height="22.1" fill="#bfe0a8" transform="rotate(8 334.2 426.4)"/><rect x="340.4" y="403.5" width="29.0" height="21.0" fill="#cdebb0" transform="rotate(-19 354.9 414.0)"/><rect x="321.1" y="429.1" width="12.5" height="12.8" fill="#cdebb0" transform="rotate(-21 327.4 435.5)"/><rect x="430.5" y="394.9" width="29.9" height="21.2" fill="#cdebb0" transform="rotate(10 445.5 405.5)"/><rect x="437.4" y="394.5" width="23.1" height="16.1" fill="#d4ecb6" transform="rotate(8 448.9 402.5)"/><rect x="412.7" y="403.5" width="14.7" height="13.3" fill="#e0ecc4" transform="rotate(-8 420.1 410.2)"/><rect x="376.1" y="391.2" width="23.6" height="15.1" fill="#bfe0a8" transform="rotate(-16 387.9 398.7)"/><rect x="401.0" y="420.3" width="28.8" height="20.7" fill="#cdebb0" transform="rotate(-6 415.4 430.7)"/><rect x="546.8" y="343.4" width="10.9" height="14.3" fill="#cdebb0" transform="rotate(1 552.3 350.5)"/><rect x="527.8" y="298.4" width="30.8" height="12.0" fill="#cdebb0" transform="rotate(13 543.2 304.4)"/><rect x="535.7" y="350.2" width="17.8" height="23.1" fill="#bfe0a8" transform="rotate(-22 544.6 361.8)"/><rect x="533.2" y="374.5" width="25.3" height="8.5" fill="#dcefc0" transform="rotate(-22 545.9 378.7)"/><rect x="554.8" y="399.7" width="27.8" height="18.5" fill="#cdebb0" transform="rotate(13 568.7 408.9)"/><rect x="532.4" y="333.6" width="26.9" height="9.3" fill="#d4ecb6" transform="rotate(24 545.8 338.3)"/><rect x="624.8" y="342.8" width="14.8" height="23.4" fill="#e0ecc4" transform="rotate(-1 632.2 354.5)"/><rect x="557.9" y="358.5" width="16.4" height="7.2" fill="#cdebb0" transform="rotate(-19 566.1 362.1)"/><rect x="596.3" y="320.6" width="16.6" height="13.1" fill="#d4ecb6" transform="rotate(18 604.6 327.1)"/><rect x="538.9" y="359.5" width="24.0" height="12.8" fill="#e0ecc4" transform="rotate(22 550.9 365.9)"/><rect x="577.6" y="384.7" width="30.2" height="10.9" fill="#bfe0a8" transform="rotate(2 592.7 390.1)"/><rect x="572.1" y="395.0" width="15.1" height="23.8" fill="#d4ecb6" transform="rotate(5 579.6 406.9)"/><rect x="566.0" y="288.3" width="14.2" height="17.3" fill="#d4ecb6" transform="rotate(27 573.1 296.9)"/><rect x="611.4" y="311.5" width="24.1" height="23.7" fill="#cdebb0" transform="rotate(5 623.4 323.4)"/><rect x="617.9" y="391.7" width="26.6" height="10.4" fill="#cdebb0" transform="rotate(-13 631.2 396.9)"/><rect x="568.4" y="358.7" width="30.2" height="8.8" fill="#cdebb0" transform="rotate(-16 583.5 363.1)"/><rect x="532.6" y="286.8" width="22.3" height="11.8" fill="#e0ecc4" transform="rotate(1 543.7 292.8)"/><rect x="550.7" y="369.0" width="22.9" height="10.1" fill="#dcefc0" transform="rotate(7 562.1 374.0)"/><rect x="541.4" y="277.1" width="27.9" height="18.9" fill="#cdebb0" transform="rotate(-3 555.4 286.6)"/><rect x="591.0" y="411.4" width="27.5" height="13.6" fill="#cdebb0" transform="rotate(-14 604.7 418.2)"/><rect x="529.8" y="402.0" width="30.1" height="16.9" fill="#e0ecc4" transform="rotate(5 544.8 410.4)"/><rect x="628.2" y="385.9" width="14.7" height="22.3" fill="#e0ecc4" transform="rotate(-27 635.5 397.0)"/><rect x="535.4" y="301.7" width="12.5" height="22.4" fill="#e0ecc4" transform="rotate(-24 541.7 312.9)"/><rect x="589.7" y="423.8" width="12.1" height="10.0" fill="#e0ecc4" transform="rotate(6 595.8 428.9)"/><rect x="594.0" y="340.5" width="23.4" height="15.4" fill="#cdebb0" transform="rotate(-26 605.7 348.2)"/><rect x="530.3" y="411.4" width="27.5" height="19.0" fill="#bfe0a8" transform="rotate(-30 544.0 420.9)"/><rect x="578.7" y="415.5" width="10.7" height="18.0" fill="#cdebb0" transform="rotate(-19 584.0 424.5)"/><rect x="560.1" y="372.2" width="11.7" height="22.1" fill="#bfe0a8" transform="rotate(26 566.0 383.3)"/><rect x="554.2" y="283.3" width="24.0" height="18.4" fill="#e0ecc4" transform="rotate(11 566.2 292.5)"/><rect x="623.6" y="318.7" width="31.0" height="22.1" fill="#e0ecc4" transform="rotate(-25 639.1 329.8)"/><rect x="533.4" y="314.6" width="14.4" height="19.5" fill="#cdebb0" transform="rotate(27 540.6 324.4)"/><rect x="624.2" y="305.4" width="18.0" height="17.0" fill="#bfe0a8" transform="rotate(-7 633.2 313.9)"/><rect x="591.6" y="379.0" width="24.7" height="23.6" fill="#bfe0a8" transform="rotate(-2 604.0 390.8)"/><rect x="589.0" y="273.8" width="9.4" height="23.2" fill="#d4ecb6" transform="rotate(-16 593.7 285.4)"/><rect x="608.9" y="336.3" width="22.8" height="16.4" fill="#cdebb0" transform="rotate(-20 620.3 344.5)"/><rect x="526.3" y="294.5" width="31.0" height="12.6" fill="#cdebb0" transform="rotate(-21 541.8 300.8)"/><rect x="530.2" y="302.0" width="24.2" height="7.3" fill="#cdebb0" transform="rotate(-26 542.2 305.7)"/><rect x="537.1" y="364.7" width="17.4" height="20.8" fill="#cdebb0" transform="rotate(19 545.8 375.1)"/><rect x="530.5" y="406.1" width="30.7" height="23.0" fill="#cdebb0" transform="rotate(-24 545.8 417.6)"/><rect x="544.2" y="278.4" width="31.5" height="22.4" fill="#cdebb0" transform="rotate(15 560.0 289.6)"/><rect x="542.4" y="414.2" width="15.6" height="8.3" fill="#add19e" transform="rotate(-24 550.2 418.3)"/><rect x="502.9" y="398.2" width="18.9" height="6.9" fill="#cdebb0" transform="rotate(-15 512.3 401.7)"/><rect x="487.5" y="415.2" width="30.6" height="20.0" fill="#cdebb0" transform="rotate(6 502.8 425.1)"/><rect x="547.1" y="410.7" width="9.5" height="13.7" fill="#add19e" transform="rotate(-4 551.8 417.6)"/><rect x="510.2" y="417.1" width="21.6" height="10.3" fill="#add19e" transform="rotate(22 521.0 422.2)"/><rect x="525.3" y="392.2" width="19.2" height="15.7" fill="#add19e" transform="rotate(-13 534.9 400.0)"/><rect x="489.8" y="400.6" width="20.5" height="20.4" fill="#cdebb0" transform="rotate(-19 500.1 410.8)"/><rect x="525.4" y="427.3" width="21.1" height="16.6" fill="#add19e" transform="rotate(-20 536.0 435.7)"/><path d="M191.9 87.2 L235.5 85.0 L257.3 102.5 L321.0 91.6 L321.0 54.5 L403.9 54.5 L408.2 122.1 L443.1 122.1 L460.6 102.5 L517.2 78.5 L539.1 98.1 L604.5 102.5 L635.0 87.2 L642.0 91.6 L642.0 196.2 L642.0 219.0 L604.5 238.6 L563.0 271.3 L512.9 310.6 L456.2 358.6 L434.4 378.2 L375.5 391.3 L321.0 393.4 L321.0 393.4 L252.9 404.3 L237.7 389.1 L218.1 352.0 L196.2 323.7 L178.8 291.0 L161.4 262.6 L157.0 219.0 L152.6 218.9 L150.5 181.0 L165.7 152.6 L187.5 143.9Z" fill="url(#urb)"/><path d="M0.0 152.6 C6.5 152.3 29.4 148.3 39.2 150.5 C49.1 152.6 54.5 158.1 58.9 165.7 C63.2 173.4 65.8 187.4 65.4 196.2 C65.1 205.1 67.6 215.1 56.7 218.9 C45.8 222.7 9.4 230.0 0.0 218.9 C-9.4 207.9 0.0 163.7 0.0 152.6Z" fill="url(#urb)"/><path d="M0.0 219.0 L56.7 219.0 L43.6 223.4 L0.0 221.2Z" fill="url(#urb)"/><path d="M235.5 0.0 C249.7 0.0 306.7 -2.2 321.0 0.0 C335.2 2.2 324.3 6.5 321.0 13.1 C317.6 19.6 309.0 33.8 300.9 39.2 C292.8 44.7 282.0 46.9 272.6 45.8 C263.1 44.7 250.4 40.3 244.2 32.7 C238.0 25.1 237.0 5.5 235.5 0.0Z" fill="url(#urb)"/><path d="M321.0 0.0 C334.1 0.0 385.7 -4.4 399.5 0.0 C413.3 4.4 407.5 20.7 403.9 26.2 C400.2 31.6 387.9 32.0 377.7 32.7 C367.5 33.4 352.3 29.4 342.8 30.5 C333.4 31.6 324.6 44.3 321.0 39.2 C317.4 34.2 321.0 6.5 321.0 0.0Z" fill="url(#urb)"/><path d="M150.5 384.7 C158.1 384.0 188.3 375.3 196.2 380.4 C204.2 385.4 199.9 405.7 198.4 415.2 C197.0 424.8 194.4 434.1 187.5 437.9 C180.6 441.7 163.5 442.4 157.0 437.9 C150.5 433.4 149.4 419.8 148.3 410.9 C147.2 402.0 150.1 389.1 150.5 384.7Z" fill="url(#urb)"/><path d="M512.9 306.2 C518.0 303.7 533.2 293.1 543.4 291.0 C553.6 288.8 568.1 286.2 573.9 293.1 C579.8 300.0 578.3 319.3 578.3 332.4 C578.3 345.5 578.7 362.9 573.9 371.6 C569.2 380.4 558.7 384.0 550.0 384.7 C541.2 385.4 528.5 383.3 521.6 376.0 C514.7 368.7 510.0 352.7 508.5 341.1 C507.1 329.5 512.2 312.0 512.9 306.2Z" fill="url(#urb)"/><path d="M541.2 227.7 C549.2 227.4 580.8 221.5 589.2 225.5 C597.6 229.5 595.4 245.2 591.4 251.7 C587.4 258.2 573.2 264.8 565.2 264.8 C557.2 264.8 547.4 257.9 543.4 251.7 C539.4 245.5 541.6 231.7 541.2 227.7Z" fill="url(#urb)"/><path d="M412.6 159.2 L482.4 139.6 L486.7 174.4 L478.0 205.0 L416.9 205.0Z" fill="#e6efd0"/><path d="M460.6 161.4 L480.2 157.0 L482.4 174.4 L462.7 178.8Z" fill="#ffffe5"/><path d="M495.4 152.6 L517.2 150.5 L517.2 187.5 L493.3 187.5Z" fill="#e8e0c8"/><path d="M502.0 133.0 L517.2 130.8 L517.2 150.5 L502.0 152.6Z" fill="#ffffe5"/><path d="M209.3 161.4 L257.3 161.4 L261.7 191.9 L209.3 196.2Z" fill="#f4f3d6"/><path d="M250.8 82.9 L274.7 80.7 L283.5 102.5 L261.7 109.0Z" fill="#f6efc8"/><path d="M281.3 240.8 L321.0 238.6 L321.0 269.2 L283.5 273.5Z" fill="#d6d5d5"/><path d="M128.7 306.2 L174.4 291.0 L187.5 312.8 L165.7 328.0 L139.6 334.6Z" fill="#bfe0a8"/><path d="M143.9 336.7 L165.7 332.4 L170.1 358.6 L152.6 358.6Z" fill="#c6d8a0"/><path d="M191.9 386.9 L239.9 400.0 L235.5 437.9 L187.5 437.9Z" fill="#cdebb0"/><path d="M403.9 51.2 L460.6 51.2 L478.0 65.4 L473.6 95.9 L443.1 122.1 L408.2 122.1 L403.9 87.2Z" fill="#b9dca6"/><path d="M408.2 65.4 L434.4 63.2 L443.1 91.6 L412.6 98.1Z" fill="#add19e"/><path d="M434.4 61.1 L464.9 63.2 L464.9 76.3 L438.7 78.5Z" fill="#9fe3c6"/><path d="M456.2 8.7 L482.4 8.7 L482.4 26.2 L458.4 24.0Z" fill="#b5b598"/><path d="M482.4 61.1 L504.2 63.2 L508.5 74.1 L486.7 78.5Z" fill="#add19e"/><path d="M491.1 367.3 L517.2 376.0 L530.3 437.9 L499.8 437.9Z" fill="#c4e3ac"/><path d="M334.1 395.6 L364.6 393.4 L366.8 413.1 L334.1 415.2Z" fill="#c0dca4"/><path d="M300.9 82.9 L321.0 82.9 L321.0 139.6 L305.3 139.6 L298.7 113.4Z" fill="#b9dca6"/><path d="M303.1 122.1 L321.0 122.1 L321.0 141.7 L305.3 141.7Z" fill="#add19e"/><path d="M321.0 122.1 L334.1 130.8 L336.3 161.4 L321.0 165.7Z" fill="#b9dca6"/><path d="M252.9 358.6 L287.8 341.1 L314.0 349.8 L314.0 371.6 L283.5 384.7 L257.3 380.4Z" fill="#d5ebc5"/><path d="M209.3 161.4 L257.3 161.4 L261.7 191.9 L209.3 196.2Z" fill="#f4f3d6"/><path d="M342.8 54.5 L373.3 54.5 L373.3 72.0 L345.0 72.0Z" fill="#d5ebc5"/><path d="M321.0 402.2 L334.1 395.6 L364.6 393.4 L366.8 413.1 L334.1 415.2Z" fill="#c0dca4"/><clipPath id="cc"><path d="M191.9 87.2 L235.5 85.0 L257.3 102.5 L321.0 91.6 L321.0 54.5 L403.9 54.5 L408.2 122.1 L443.1 122.1 L460.6 102.5 L517.2 78.5 L539.1 98.1 L604.5 102.5 L635.0 87.2 L642.0 91.6 L642.0 196.2 L642.0 219.0 L604.5 238.6 L563.0 271.3 L512.9 310.6 L456.2 358.6 L434.4 378.2 L375.5 391.3 L321.0 393.4 L321.0 393.4 L252.9 404.3 L237.7 389.1 L218.1 352.0 L196.2 323.7 L178.8 291.0 L161.4 262.6 L157.0 219.0 L152.6 218.9 L150.5 181.0 L165.7 152.6 L187.5 143.9Z"/></clipPath><g clip-path="url(#cc)"><rect x="380.0" y="244.0" width="17.9" height="8.7" fill="#ffffe5" transform="rotate(1 389.0 248.3)"/><rect x="258.4" y="223.7" width="13.8" height="11.9" fill="#f2dad9" transform="rotate(-32 265.3 229.6)"/><rect x="236.8" y="234.9" width="17.5" height="10.3" fill="#cfcece" transform="rotate(8 245.5 240.1)"/><rect x="618.9" y="282.2" width="13.6" height="5.6" fill="#e6efd0" transform="rotate(-39 625.7 285.0)"/><rect x="200.5" y="38.9" width="17.3" height="10.0" fill="#9fe3c6" transform="rotate(22 209.2 43.9)"/><rect x="377.4" y="353.3" width="12.3" height="10.4" fill="#d5ebc5" transform="rotate(-0 383.5 358.5)"/><rect x="381.8" y="131.5" width="19.0" height="14.0" fill="#f2dad9" transform="rotate(27 391.3 138.5)"/><rect x="321.1" y="117.2" width="9.0" height="4.7" fill="#cfcece" transform="rotate(21 325.7 119.6)"/><rect x="226.8" y="141.4" width="5.9" height="4.2" fill="#ffffe5" transform="rotate(15 229.8 143.5)"/><rect x="271.1" y="378.1" width="11.6" height="13.8" fill="#d5ebc5" transform="rotate(-8 276.9 385.0)"/><rect x="434.4" y="103.7" width="14.4" height="7.4" fill="#cdebb0" transform="rotate(-15 441.6 107.4)"/><rect x="622.1" y="322.4" width="6.7" height="6.5" fill="#cdebb0" transform="rotate(-32 625.4 325.6)"/><rect x="387.5" y="216.9" width="14.5" height="5.9" fill="#c8facc" transform="rotate(1 394.8 219.9)"/><rect x="368.4" y="172.7" width="10.5" height="13.9" fill="#f2dad9" transform="rotate(-40 373.7 179.7)"/><rect x="637.2" y="30.7" width="7.6" height="14.0" fill="#d5ebc5" transform="rotate(8 641.0 37.7)"/><rect x="193.9" y="85.0" width="11.2" height="4.1" fill="#f2dad9" transform="rotate(9 199.5 87.1)"/><rect x="354.4" y="53.8" width="7.9" height="10.4" fill="#ececec" transform="rotate(-39 358.4 59.0)"/><rect x="342.5" y="202.3" width="18.4" height="8.8" fill="#cfcece" transform="rotate(6 351.7 206.8)"/><rect x="255.6" y="84.0" width="17.7" height="12.2" fill="#ffffe5" transform="rotate(-20 264.5 90.1)"/><rect x="246.8" y="269.9" width="12.8" height="10.9" fill="#e6efd0" transform="rotate(-9 253.2 275.3)"/><rect x="455.6" y="192.2" width="6.5" height="4.4" fill="#ffffe5" transform="rotate(37 458.8 194.4)"/><rect x="516.4" y="176.2" width="10.9" height="13.0" fill="#e6efd0" transform="rotate(-1 521.8 182.7)"/><rect x="258.1" y="307.8" width="6.0" height="6.3" fill="#d5ebc5" transform="rotate(5 261.1 310.9)"/><rect x="305.5" y="385.7" width="7.9" height="4.2" fill="#f5f0d0" transform="rotate(-18 309.5 387.8)"/><rect x="290.6" y="43.5" width="8.9" height="9.3" fill="#d5ebc5" transform="rotate(38 295.1 48.2)"/><rect x="337.9" y="372.2" width="18.7" height="10.6" fill="#c8facc" transform="rotate(15 347.3 377.5)"/><rect x="446.7" y="386.4" width="11.6" height="7.6" fill="#cdebb0" transform="rotate(-15 452.5 390.2)"/><rect x="183.9" y="272.5" width="11.8" height="11.3" fill="#d5ebc5" transform="rotate(-14 189.8 278.1)"/><rect x="207.1" y="236.5" width="15.3" height="13.0" fill="#c8facc" transform="rotate(19 214.8 243.0)"/><rect x="541.5" y="381.4" width="9.9" height="10.9" fill="#f0f0f0" transform="rotate(32 546.5 386.9)"/><rect x="610.2" y="39.7" width="12.0" height="4.1" fill="#cfcece" transform="rotate(13 616.2 41.8)"/><rect x="446.1" y="262.3" width="6.1" height="10.4" fill="#f0f0f0" transform="rotate(39 449.2 267.5)"/><rect x="508.8" y="176.6" width="15.3" height="9.8" fill="#d2ecc0" transform="rotate(-5 516.4 181.5)"/><rect x="216.0" y="317.6" width="5.4" height="10.0" fill="#ffffe5" transform="rotate(-2 218.7 322.6)"/><rect x="614.4" y="68.7" width="15.9" height="10.6" fill="#cdebb0" transform="rotate(-1 622.3 74.0)"/><rect x="343.2" y="81.3" width="13.6" height="9.2" fill="#9fe3c6" transform="rotate(20 350.0 85.9)"/><rect x="476.2" y="198.7" width="17.5" height="7.3" fill="#ffffe5" transform="rotate(13 484.9 202.4)"/><rect x="465.2" y="340.4" width="15.6" height="6.0" fill="#ffffe5" transform="rotate(-23 473.0 343.4)"/><rect x="445.9" y="148.9" width="6.9" height="9.0" fill="#cdebb0" transform="rotate(27 449.4 153.4)"/><rect x="504.1" y="397.7" width="8.9" height="5.7" fill="#f2dad9" transform="rotate(-4 508.6 400.5)"/><rect x="602.5" y="349.4" width="10.4" height="9.2" fill="#f5f0d0" transform="rotate(14 607.7 354.0)"/><rect x="323.6" y="348.2" width="8.9" height="10.1" fill="#f2dad9" transform="rotate(14 328.0 353.2)"/><rect x="435.6" y="148.4" width="16.1" height="4.2" fill="#f5f0d0" transform="rotate(-29 443.6 150.5)"/><rect x="263.4" y="324.1" width="8.7" height="11.8" fill="#d5ebc5" transform="rotate(24 267.7 330.0)"/><rect x="379.2" y="269.6" width="14.2" height="12.1" fill="#ffffe5" transform="rotate(37 386.3 275.7)"/><rect x="268.3" y="213.3" width="7.5" height="4.1" fill="#cdebb0" transform="rotate(-2 272.1 215.3)"/><rect x="257.8" y="130.7" width="9.8" height="11.0" fill="#c8facc" transform="rotate(2 262.7 136.2)"/><rect x="353.0" y="336.4" width="17.7" height="4.9" fill="#cfcece" transform="rotate(35 361.8 338.9)"/><rect x="233.1" y="200.3" width="13.8" height="13.1" fill="#e6efd0" transform="rotate(-10 240.0 206.9)"/><rect x="542.4" y="393.0" width="11.5" height="10.5" fill="#d5ebc5" transform="rotate(-24 548.1 398.3)"/><rect x="269.2" y="374.1" width="18.7" height="13.8" fill="#9fe3c6" transform="rotate(3 278.5 381.0)"/><rect x="298.4" y="305.6" width="5.2" height="9.0" fill="#9fe3c6" transform="rotate(-37 301.0 310.1)"/><rect x="428.3" y="327.5" width="11.8" height="4.3" fill="#d5ebc5" transform="rotate(25 434.2 329.6)"/><rect x="371.9" y="38.3" width="12.5" height="10.9" fill="#e6efd0" transform="rotate(33 378.2 43.7)"/><rect x="241.1" y="225.2" width="15.1" height="12.4" fill="#e6efd0" transform="rotate(15 248.7 231.4)"/><rect x="439.7" y="294.5" width="15.6" height="8.4" fill="#d2ecc0" transform="rotate(5 447.5 298.7)"/><rect x="466.8" y="229.1" width="16.8" height="9.6" fill="#cfcece" transform="rotate(-15 475.2 233.9)"/><rect x="614.3" y="365.8" width="13.5" height="7.0" fill="#d2ecc0" transform="rotate(-29 621.1 369.3)"/><rect x="418.3" y="248.8" width="7.8" height="9.4" fill="#cfcece" transform="rotate(0 422.2 253.5)"/><rect x="186.7" y="404.1" width="12.2" height="8.0" fill="#d5ebc5" transform="rotate(24 192.8 408.1)"/><rect x="403.9" y="294.8" width="5.9" height="9.4" fill="#cfcece" transform="rotate(-7 406.9 299.5)"/><rect x="301.0" y="210.4" width="6.8" height="8.3" fill="#e6efd0" transform="rotate(25 304.4 214.5)"/><rect x="417.1" y="70.2" width="10.9" height="4.3" fill="#cdebb0" transform="rotate(-19 422.5 72.4)"/><rect x="193.9" y="87.2" width="5.2" height="6.8" fill="#ffffe5" transform="rotate(18 196.5 90.7)"/><rect x="458.7" y="68.3" width="15.2" height="5.2" fill="#f2dad9" transform="rotate(1 466.3 70.9)"/><rect x="502.9" y="301.4" width="17.3" height="4.2" fill="#e6efd0" transform="rotate(11 511.6 303.5)"/><rect x="456.0" y="235.2" width="17.1" height="9.3" fill="#ffffe5" transform="rotate(-23 464.5 239.9)"/><rect x="564.8" y="265.4" width="17.0" height="6.3" fill="#ececec" transform="rotate(19 573.3 268.6)"/><rect x="592.3" y="146.6" width="9.4" height="13.2" fill="#ffffe5" transform="rotate(-23 597.0 153.2)"/><rect x="585.9" y="76.6" width="8.4" height="11.3" fill="#d5ebc5" transform="rotate(-19 590.0 82.2)"/><rect x="374.6" y="391.5" width="12.6" height="11.0" fill="#cdebb0" transform="rotate(-24 380.9 397.1)"/><rect x="219.4" y="246.2" width="10.0" height="12.2" fill="#e6efd0" transform="rotate(-11 224.4 252.3)"/><rect x="463.7" y="157.8" width="19.0" height="12.3" fill="#e6efd0" transform="rotate(24 473.2 164.0)"/><rect x="222.7" y="40.0" width="12.7" height="9.1" fill="#c8facc" transform="rotate(5 229.1 44.6)"/><rect x="263.9" y="72.0" width="7.4" height="5.6" fill="#d5ebc5" transform="rotate(-17 267.6 74.8)"/><rect x="440.6" y="80.0" width="14.5" height="4.8" fill="#cfcece" transform="rotate(-32 447.9 82.4)"/><rect x="390.2" y="226.0" width="11.0" height="10.0" fill="#cdebb0" transform="rotate(-39 395.7 231.0)"/><rect x="564.4" y="95.0" width="11.4" height="11.4" fill="#ffffe5" transform="rotate(-8 570.0 100.7)"/><rect x="451.4" y="63.4" width="16.1" height="7.2" fill="#cfcece" transform="rotate(-33 459.5 67.0)"/><rect x="436.6" y="100.8" width="13.2" height="7.4" fill="#f2dad9" transform="rotate(21 443.2 104.5)"/><rect x="593.1" y="314.3" width="15.9" height="12.1" fill="#9fe3c6" transform="rotate(-8 601.0 320.3)"/><rect x="578.6" y="295.1" width="15.7" height="11.7" fill="#c8facc" transform="rotate(-8 586.5 301.0)"/><rect x="206.8" y="161.2" width="11.6" height="4.1" fill="#cdebb0" transform="rotate(-12 212.6 163.3)"/><rect x="280.1" y="394.7" width="14.3" height="7.4" fill="#c8facc" transform="rotate(13 287.2 398.4)"/><rect x="416.8" y="176.7" width="19.0" height="10.4" fill="#cfcece" transform="rotate(16 426.3 181.9)"/><rect x="626.0" y="33.2" width="13.6" height="11.4" fill="#cfcece" transform="rotate(-19 632.8 38.9)"/><rect x="406.2" y="324.9" width="14.1" height="4.1" fill="#f2dad9" transform="rotate(-19 413.2 326.9)"/><rect x="592.4" y="237.7" width="12.1" height="13.7" fill="#d5ebc5" transform="rotate(5 598.4 244.5)"/><rect x="471.7" y="340.7" width="6.1" height="10.0" fill="#cdebb0" transform="rotate(21 474.8 345.7)"/><rect x="353.3" y="389.2" width="10.4" height="13.7" fill="#d2ecc0" transform="rotate(28 358.5 396.1)"/><rect x="453.2" y="48.7" width="18.2" height="8.2" fill="#f2dad9" transform="rotate(2 462.4 52.8)"/><rect x="341.8" y="136.6" width="14.2" height="9.6" fill="#f2dad9" transform="rotate(-17 348.9 141.4)"/><rect x="185.8" y="326.1" width="13.2" height="10.3" fill="#cfcece" transform="rotate(-7 192.4 331.3)"/><rect x="199.1" y="148.0" width="10.6" height="9.8" fill="#9fe3c6" transform="rotate(18 204.4 152.9)"/><rect x="208.5" y="378.8" width="11.0" height="8.8" fill="#ffffe5" transform="rotate(38 214.0 383.2)"/><rect x="192.8" y="61.9" width="16.3" height="13.1" fill="#ffffe5" transform="rotate(-28 201.0 68.4)"/><rect x="452.0" y="70.6" width="13.7" height="8.6" fill="#cdebb0" transform="rotate(-24 458.9 74.9)"/><rect x="339.8" y="87.6" width="10.1" height="5.4" fill="#f2dad9" transform="rotate(-7 344.8 90.3)"/><rect x="470.4" y="290.3" width="10.1" height="11.4" fill="#c8facc" transform="rotate(25 475.5 296.0)"/><rect x="615.9" y="313.8" width="8.3" height="5.1" fill="#e6efd0" transform="rotate(31 620.1 316.4)"/><rect x="464.3" y="164.7" width="8.8" height="10.9" fill="#ffffe5" transform="rotate(5 468.7 170.1)"/><rect x="468.7" y="320.6" width="7.7" height="6.5" fill="#ffffe5" transform="rotate(38 472.5 323.8)"/><rect x="583.1" y="42.1" width="5.9" height="6.7" fill="#cdebb0" transform="rotate(-6 586.0 45.4)"/><rect x="224.3" y="238.8" width="6.0" height="4.9" fill="#d2ecc0" transform="rotate(14 227.3 241.2)"/><rect x="282.6" y="409.0" width="11.8" height="7.5" fill="#e6efd0" transform="rotate(-13 288.5 412.8)"/><rect x="521.1" y="354.4" width="6.0" height="5.2" fill="#ffffe5" transform="rotate(25 524.1 357.0)"/><rect x="380.1" y="318.7" width="10.5" height="5.5" fill="#9fe3c6" transform="rotate(-28 385.3 321.5)"/><rect x="306.1" y="323.1" width="16.6" height="5.8" fill="#d5ebc5" transform="rotate(12 314.4 326.0)"/><rect x="387.1" y="152.3" width="12.6" height="8.3" fill="#f5f0d0" transform="rotate(5 393.5 156.4)"/><rect x="315.0" y="329.4" width="6.1" height="6.1" fill="#d5ebc5" transform="rotate(13 318.1 332.4)"/><rect x="493.3" y="219.3" width="15.7" height="7.3" fill="#ffffe5" transform="rotate(31 501.1 223.0)"/><rect x="340.2" y="310.5" width="10.1" height="5.2" fill="#f2dad9" transform="rotate(17 345.3 313.1)"/><rect x="377.7" y="339.6" width="9.3" height="7.2" fill="#e6efd0" transform="rotate(-8 382.4 343.2)"/><rect x="289.7" y="167.2" width="10.1" height="7.6" fill="#cfcece" transform="rotate(-8 294.7 171.1)"/><rect x="542.7" y="314.2" width="10.2" height="7.9" fill="#c8facc" transform="rotate(-28 547.8 318.1)"/><rect x="252.9" y="322.6" width="17.3" height="6.8" fill="#e6efd0" transform="rotate(-38 261.6 326.0)"/><rect x="202.1" y="89.8" width="9.1" height="4.2" fill="#f0f0f0" transform="rotate(27 206.7 91.9)"/><rect x="201.6" y="240.8" width="16.0" height="4.8" fill="#d5ebc5" transform="rotate(-33 209.6 243.3)"/><rect x="588.4" y="60.3" width="13.9" height="5.4" fill="#f0f0f0" transform="rotate(20 595.4 63.0)"/><rect x="285.5" y="111.4" width="15.7" height="9.2" fill="#cfcece" transform="rotate(21 293.4 116.0)"/><rect x="337.1" y="342.2" width="9.7" height="5.4" fill="#d5ebc5" transform="rotate(-1 341.9 344.8)"/><rect x="501.8" y="380.7" width="10.7" height="12.3" fill="#cdebb0" transform="rotate(13 507.2 386.8)"/><rect x="543.6" y="348.4" width="17.4" height="13.6" fill="#e6efd0" transform="rotate(11 552.3 355.2)"/><rect x="344.0" y="27.3" width="6.5" height="13.2" fill="#ffffe5" transform="rotate(33 347.3 34.0)"/><rect x="517.3" y="413.7" width="10.3" height="5.7" fill="#f0f0f0" transform="rotate(-24 522.4 416.5)"/><rect x="415.7" y="132.5" width="17.4" height="8.7" fill="#f2dad9" transform="rotate(18 424.4 136.9)"/><rect x="475.6" y="330.3" width="7.5" height="4.6" fill="#e6efd0" transform="rotate(-3 479.4 332.6)"/><rect x="596.8" y="41.3" width="6.5" height="5.8" fill="#ffffe5" transform="rotate(-23 600.1 44.2)"/><rect x="451.2" y="209.8" width="12.1" height="8.4" fill="#cfcece" transform="rotate(32 457.2 214.0)"/><rect x="255.0" y="320.7" width="9.4" height="9.5" fill="#e6efd0" transform="rotate(25 259.7 325.4)"/><rect x="568.9" y="212.3" width="10.6" height="13.6" fill="#d5ebc5" transform="rotate(13 574.3 219.1)"/><rect x="400.1" y="109.5" width="5.7" height="13.5" fill="#cfcece" transform="rotate(24 403.0 116.2)"/><rect x="623.0" y="334.0" width="15.8" height="11.9" fill="#ffffe5" transform="rotate(-35 630.9 339.9)"/><rect x="583.4" y="366.6" width="17.7" height="8.5" fill="#f0f0f0" transform="rotate(-20 592.2 370.9)"/><rect x="456.4" y="87.7" width="7.2" height="7.2" fill="#e6efd0" transform="rotate(-19 460.0 91.3)"/><rect x="233.7" y="314.7" width="13.7" height="9.2" fill="#c8facc" transform="rotate(-36 240.6 319.3)"/><rect x="172.2" y="344.2" width="16.8" height="12.2" fill="#f2dad9" transform="rotate(-33 180.6 350.4)"/><rect x="455.3" y="230.4" width="17.5" height="10.9" fill="#d2ecc0" transform="rotate(-33 464.1 235.9)"/><rect x="568.1" y="144.3" width="16.1" height="8.2" fill="#d5ebc5" transform="rotate(33 576.1 148.4)"/><rect x="538.3" y="197.6" width="5.5" height="8.1" fill="#f2dad9" transform="rotate(-0 541.0 201.7)"/><rect x="319.6" y="181.1" width="12.8" height="14.0" fill="#d5ebc5" transform="rotate(13 326.0 188.1)"/><rect x="342.9" y="294.0" width="6.5" height="7.9" fill="#d5ebc5" transform="rotate(-3 346.2 298.0)"/><rect x="477.0" y="29.3" width="10.3" height="11.1" fill="#d5ebc5" transform="rotate(-21 482.1 34.8)"/><rect x="382.2" y="28.1" width="18.9" height="12.0" fill="#c8facc" transform="rotate(-23 391.6 34.1)"/><rect x="307.9" y="173.1" width="12.6" height="7.0" fill="#cfcece" transform="rotate(-13 314.2 176.6)"/><rect x="432.9" y="60.0" width="7.6" height="7.8" fill="#f2dad9" transform="rotate(-31 436.7 63.9)"/><rect x="609.0" y="245.8" width="15.1" height="7.3" fill="#d5ebc5" transform="rotate(26 616.6 249.5)"/><rect x="223.6" y="267.3" width="6.8" height="10.3" fill="#ffffe5" transform="rotate(-26 227.1 272.5)"/><rect x="359.2" y="353.9" width="13.3" height="4.9" fill="#c8facc" transform="rotate(-22 365.9 356.4)"/><rect x="628.3" y="195.5" width="15.8" height="7.4" fill="#e6efd0" transform="rotate(26 636.2 199.2)"/><rect x="240.7" y="104.7" width="7.1" height="10.9" fill="#f0f0f0" transform="rotate(-1 244.2 110.1)"/><rect x="461.0" y="309.9" width="13.6" height="7.2" fill="#ffffe5" transform="rotate(23 467.8 313.5)"/><rect x="482.4" y="263.7" width="5.3" height="7.3" fill="#f5f0d0" transform="rotate(-13 485.0 267.4)"/><rect x="223.0" y="171.3" width="12.1" height="11.9" fill="#c8facc" transform="rotate(26 229.1 177.3)"/><rect x="292.7" y="237.0" width="9.2" height="6.3" fill="#e6efd0" transform="rotate(9 297.3 240.1)"/><rect x="236.1" y="303.7" width="18.8" height="9.2" fill="#ffffe5" transform="rotate(17 245.5 308.2)"/><rect x="435.0" y="34.5" width="14.2" height="11.8" fill="#e6efd0" transform="rotate(-29 442.1 40.4)"/><rect x="441.5" y="295.2" width="9.6" height="13.3" fill="#f5f0d0" transform="rotate(-11 446.3 301.9)"/><rect x="580.3" y="203.2" width="15.2" height="6.4" fill="#d2ecc0" transform="rotate(6 587.9 206.4)"/><rect x="434.7" y="242.0" width="8.7" height="13.1" fill="#9fe3c6" transform="rotate(39 439.1 248.5)"/><rect x="449.6" y="74.4" width="16.5" height="6.9" fill="#ffffe5" transform="rotate(32 457.9 77.8)"/><rect x="526.7" y="166.6" width="7.3" height="10.0" fill="#f5f0d0" transform="rotate(25 530.3 171.6)"/><rect x="185.4" y="93.5" width="18.8" height="13.4" fill="#f2dad9" transform="rotate(13 194.8 100.2)"/><rect x="520.5" y="355.4" width="17.7" height="10.2" fill="#cdebb0" transform="rotate(11 529.3 360.5)"/><rect x="250.5" y="186.0" width="5.5" height="9.3" fill="#cfcece" transform="rotate(-31 253.3 190.7)"/><rect x="255.9" y="227.9" width="8.7" height="9.7" fill="#cdebb0" transform="rotate(-13 260.2 232.7)"/><rect x="508.1" y="332.6" width="10.6" height="9.0" fill="#ececec" transform="rotate(-32 513.4 337.1)"/><rect x="362.8" y="267.5" width="14.7" height="11.6" fill="#e6efd0" transform="rotate(20 370.1 273.3)"/><rect x="582.0" y="205.3" width="17.7" height="10.9" fill="#d5ebc5" transform="rotate(26 590.8 210.8)"/><rect x="435.3" y="378.4" width="12.4" height="9.3" fill="#cdebb0" transform="rotate(-5 441.5 383.0)"/><rect x="320.6" y="44.8" width="15.2" height="13.0" fill="#9fe3c6" transform="rotate(19 328.2 51.3)"/><rect x="520.7" y="146.5" width="13.3" height="4.7" fill="#f5f0d0" transform="rotate(-30 527.4 148.9)"/><rect x="282.7" y="366.1" width="18.6" height="8.8" fill="#ffffe5" transform="rotate(-32 292.0 370.5)"/><rect x="422.7" y="279.8" width="18.2" height="12.8" fill="#ececec" transform="rotate(40 431.8 286.2)"/><rect x="572.2" y="191.2" width="16.3" height="6.2" fill="#d5ebc5" transform="rotate(20 580.3 194.3)"/><rect x="589.3" y="65.8" width="16.1" height="5.2" fill="#f5f0d0" transform="rotate(3 597.4 68.4)"/><rect x="175.7" y="121.5" width="9.2" height="7.2" fill="#f5f0d0" transform="rotate(-35 180.3 125.1)"/><rect x="551.7" y="180.0" width="10.0" height="9.9" fill="#cdebb0" transform="rotate(-36 556.7 184.9)"/><rect x="385.4" y="149.7" width="9.5" height="5.4" fill="#e6efd0" transform="rotate(22 390.2 152.4)"/><rect x="577.5" y="103.6" width="17.0" height="10.9" fill="#9fe3c6" transform="rotate(-35 586.0 109.1)"/><rect x="561.3" y="165.3" width="11.6" height="5.7" fill="#d2ecc0" transform="rotate(30 567.1 168.1)"/><rect x="269.5" y="270.2" width="7.7" height="12.8" fill="#d5ebc5" transform="rotate(-36 273.3 276.6)"/><rect x="312.2" y="345.5" width="18.5" height="6.7" fill="#c8facc" transform="rotate(-6 321.4 348.9)"/><rect x="326.8" y="399.1" width="15.9" height="8.2" fill="#f2dad9" transform="rotate(-26 334.7 403.2)"/><rect x="231.4" y="293.9" width="8.8" height="11.2" fill="#f2dad9" transform="rotate(0 235.7 299.5)"/><rect x="538.1" y="168.9" width="14.3" height="12.8" fill="#ffffe5" transform="rotate(7 545.2 175.3)"/><rect x="627.7" y="376.1" width="7.5" height="6.3" fill="#d5ebc5" transform="rotate(-29 631.4 379.2)"/><rect x="384.9" y="57.4" width="17.8" height="4.7" fill="#cdebb0" transform="rotate(33 393.8 59.7)"/><rect x="452.8" y="135.0" width="8.5" height="12.0" fill="#f2dad9" transform="rotate(-33 457.1 141.0)"/><rect x="632.9" y="98.2" width="7.5" height="11.3" fill="#c8facc" transform="rotate(-38 636.6 103.9)"/><rect x="630.6" y="37.4" width="11.5" height="11.5" fill="#e6efd0" transform="rotate(-9 636.3 43.1)"/><rect x="199.9" y="48.4" width="15.9" height="13.1" fill="#e6efd0" transform="rotate(-14 207.8 55.0)"/><rect x="535.7" y="225.3" width="12.1" height="12.5" fill="#e6efd0" transform="rotate(15 541.7 231.5)"/><rect x="517.2" y="231.5" width="13.3" height="11.7" fill="#f0f0f0" transform="rotate(-31 523.9 237.4)"/><rect x="280.8" y="195.8" width="15.8" height="11.9" fill="#ffffe5" transform="rotate(23 288.7 201.8)"/><rect x="291.5" y="237.2" width="16.9" height="10.0" fill="#ffffe5" transform="rotate(-19 300.0 242.2)"/><rect x="449.2" y="302.4" width="13.0" height="12.7" fill="#c8facc" transform="rotate(-26 455.7 308.7)"/><rect x="452.9" y="262.8" width="16.3" height="9.0" fill="#cdebb0" transform="rotate(18 461.0 267.3)"/><rect x="207.0" y="379.1" width="13.0" height="9.4" fill="#ffffe5" transform="rotate(23 213.5 383.8)"/><rect x="462.5" y="45.6" width="11.0" height="11.0" fill="#e6efd0" transform="rotate(26 467.9 51.1)"/><rect x="534.7" y="323.2" width="12.0" height="10.5" fill="#cfcece" transform="rotate(1 540.7 328.5)"/><rect x="290.4" y="86.2" width="14.7" height="12.3" fill="#cdebb0" transform="rotate(23 297.7 92.3)"/><rect x="318.5" y="206.6" width="14.8" height="11.0" fill="#c8facc" transform="rotate(37 325.9 212.1)"/><rect x="396.8" y="324.2" width="18.8" height="5.4" fill="#cdebb0" transform="rotate(-4 406.2 326.9)"/><rect x="175.4" y="187.4" width="12.4" height="4.9" fill="#e6efd0" transform="rotate(4 181.5 189.8)"/><rect x="373.4" y="52.8" width="5.5" height="14.0" fill="#ffffe5" transform="rotate(21 376.1 59.8)"/><rect x="308.1" y="72.3" width="17.0" height="8.2" fill="#ffffe5" transform="rotate(-33 316.6 76.3)"/><rect x="338.8" y="156.4" width="18.7" height="10.1" fill="#cfcece" transform="rotate(-37 348.2 161.4)"/><rect x="442.7" y="413.1" width="15.3" height="9.7" fill="#c8facc" transform="rotate(33 450.4 417.9)"/><rect x="385.3" y="179.3" width="16.8" height="7.8" fill="#ffffe5" transform="rotate(23 393.7 183.2)"/><rect x="365.3" y="120.1" width="16.1" height="12.0" fill="#cfcece" transform="rotate(-2 373.3 126.1)"/><rect x="274.4" y="208.2" width="9.3" height="8.5" fill="#c8facc" transform="rotate(39 279.1 212.4)"/><rect x="573.4" y="107.4" width="10.4" height="4.7" fill="#ececec" transform="rotate(15 578.6 109.8)"/><rect x="612.2" y="266.5" width="12.3" height="11.4" fill="#ffffe5" transform="rotate(1 618.3 272.2)"/><rect x="300.5" y="164.1" width="7.1" height="13.4" fill="#ffffe5" transform="rotate(-11 304.1 170.8)"/><rect x="511.6" y="380.1" width="5.3" height="7.2" fill="#d5ebc5" transform="rotate(-9 514.2 383.8)"/><rect x="570.5" y="172.3" width="8.6" height="12.8" fill="#f2dad9" transform="rotate(14 574.8 178.7)"/><rect x="359.2" y="120.2" width="5.6" height="5.5" fill="#cdebb0" transform="rotate(8 362.0 122.9)"/><rect x="270.5" y="184.7" width="11.7" height="10.9" fill="#d2ecc0" transform="rotate(1 276.3 190.2)"/><rect x="293.1" y="310.2" width="14.3" height="5.5" fill="#f2dad9" transform="rotate(-24 300.3 312.9)"/><rect x="423.7" y="200.7" width="6.9" height="9.2" fill="#d5ebc5" transform="rotate(-12 427.2 205.3)"/><rect x="310.9" y="162.3" width="8.0" height="4.4" fill="#e6efd0" transform="rotate(-38 314.9 164.5)"/><rect x="432.1" y="341.9" width="18.7" height="7.0" fill="#ffffe5" transform="rotate(14 441.5 345.4)"/><rect x="434.5" y="161.9" width="6.7" height="11.7" fill="#f2dad9" transform="rotate(-10 437.9 167.8)"/><rect x="216.3" y="194.5" width="10.5" height="4.6" fill="#9fe3c6" transform="rotate(-9 221.5 196.8)"/><rect x="307.4" y="297.7" width="8.1" height="13.3" fill="#c8facc" transform="rotate(-24 311.5 304.3)"/><rect x="335.9" y="302.1" width="12.3" height="11.4" fill="#c8facc" transform="rotate(33 342.0 307.8)"/><rect x="392.5" y="126.7" width="16.9" height="7.1" fill="#cfcece" transform="rotate(33 401.0 130.2)"/><rect x="226.7" y="381.4" width="17.8" height="6.7" fill="#f2dad9" transform="rotate(-10 235.6 384.8)"/><rect x="392.4" y="154.8" width="8.5" height="4.2" fill="#ececec" transform="rotate(-12 396.6 157.0)"/><rect x="434.2" y="129.2" width="14.4" height="5.9" fill="#9fe3c6" transform="rotate(-2 441.4 132.1)"/><rect x="614.5" y="164.7" width="13.1" height="13.4" fill="#cdebb0" transform="rotate(22 621.1 171.4)"/><rect x="461.4" y="186.9" width="10.8" height="6.8" fill="#f5f0d0" transform="rotate(26 466.8 190.3)"/><rect x="353.7" y="382.1" width="5.5" height="5.4" fill="#f2dad9" transform="rotate(1 356.4 384.7)"/><rect x="406.1" y="209.5" width="5.3" height="10.1" fill="#f2dad9" transform="rotate(-18 408.7 214.5)"/><rect x="491.7" y="116.8" width="5.0" height="9.4" fill="#ffffe5" transform="rotate(-8 494.2 121.5)"/><rect x="424.9" y="358.7" width="15.7" height="4.8" fill="#9fe3c6" transform="rotate(26 432.7 361.1)"/><rect x="299.4" y="64.5" width="5.3" height="12.1" fill="#cfcece" transform="rotate(-23 302.0 70.5)"/><rect x="488.9" y="403.1" width="16.5" height="5.6" fill="#e6efd0" transform="rotate(10 497.2 405.9)"/><rect x="546.5" y="140.7" width="10.8" height="7.7" fill="#e6efd0" transform="rotate(13 551.9 144.5)"/><rect x="284.7" y="124.3" width="9.5" height="5.8" fill="#c8facc" transform="rotate(1 289.5 127.2)"/><rect x="577.2" y="409.3" width="16.4" height="12.9" fill="#f5f0d0" transform="rotate(-15 585.4 415.8)"/><rect x="413.9" y="289.8" width="5.6" height="10.2" fill="#e6efd0" transform="rotate(-7 416.7 294.9)"/><rect x="198.6" y="123.0" width="12.1" height="12.0" fill="#f2dad9" transform="rotate(-9 204.7 129.0)"/><rect x="346.1" y="290.0" width="7.6" height="12.6" fill="#c8facc" transform="rotate(-24 349.9 296.3)"/><rect x="434.7" y="188.9" width="14.9" height="10.2" fill="#c8facc" transform="rotate(26 442.2 194.0)"/><rect x="230.7" y="173.9" width="14.4" height="6.3" fill="#cdebb0" transform="rotate(-25 237.9 177.0)"/><rect x="390.0" y="294.0" width="16.1" height="13.3" fill="#f2dad9" transform="rotate(-19 398.0 300.6)"/><rect x="368.4" y="269.6" width="10.6" height="13.3" fill="#cdebb0" transform="rotate(39 373.7 276.3)"/><rect x="244.1" y="416.0" width="17.2" height="5.9" fill="#d2ecc0" transform="rotate(-11 252.7 419.0)"/><rect x="634.2" y="74.7" width="9.6" height="4.3" fill="#e6efd0" transform="rotate(3 639.1 76.9)"/><rect x="253.5" y="49.9" width="11.1" height="12.7" fill="#ffffe5" transform="rotate(12 259.1 56.3)"/><rect x="353.1" y="264.0" width="15.7" height="13.8" fill="#ffffe5" transform="rotate(-9 361.0 270.9)"/><rect x="428.7" y="339.2" width="7.1" height="5.8" fill="#f2dad9" transform="rotate(-31 432.2 342.1)"/><rect x="583.2" y="192.3" width="7.1" height="12.8" fill="#c8facc" transform="rotate(-18 586.8 198.7)"/><rect x="301.7" y="183.7" width="9.5" height="4.8" fill="#d2ecc0" transform="rotate(-24 306.5 186.1)"/><rect x="297.0" y="43.5" width="5.9" height="12.9" fill="#d5ebc5" transform="rotate(-15 299.9 50.0)"/><rect x="178.4" y="155.2" width="7.0" height="11.9" fill="#f0f0f0" transform="rotate(39 181.9 161.2)"/><rect x="395.6" y="187.7" width="16.3" height="8.0" fill="#d2ecc0" transform="rotate(-35 403.7 191.7)"/><rect x="460.7" y="349.6" width="8.5" height="5.9" fill="#ffffe5" transform="rotate(-17 464.9 352.6)"/><rect x="631.0" y="197.2" width="16.7" height="11.2" fill="#cdebb0" transform="rotate(-26 639.4 202.8)"/><rect x="609.2" y="236.9" width="14.4" height="6.7" fill="#d2ecc0" transform="rotate(-38 616.5 240.2)"/><rect x="320.7" y="227.5" width="5.1" height="6.1" fill="#cdebb0" transform="rotate(37 323.2 230.6)"/><rect x="530.1" y="126.7" width="8.4" height="13.2" fill="#f2dad9" transform="rotate(-0 534.3 133.3)"/><rect x="543.1" y="345.9" width="15.7" height="13.9" fill="#e6efd0" transform="rotate(-32 551.0 352.8)"/><rect x="361.6" y="298.5" width="8.5" height="13.1" fill="#c8facc" transform="rotate(-38 365.8 305.1)"/><rect x="279.9" y="176.2" width="10.2" height="10.6" fill="#ececec" transform="rotate(25 285.0 181.5)"/><rect x="464.9" y="203.1" width="9.4" height="4.7" fill="#d5ebc5" transform="rotate(12 469.6 205.4)"/><rect x="298.5" y="111.1" width="7.5" height="4.5" fill="#f2dad9" transform="rotate(-30 302.3 113.3)"/><rect x="491.0" y="96.4" width="6.5" height="5.4" fill="#f0f0f0" transform="rotate(-12 494.3 99.1)"/><rect x="187.3" y="183.4" width="5.7" height="4.9" fill="#ffffe5" transform="rotate(36 190.2 185.9)"/><rect x="186.6" y="93.1" width="5.9" height="9.9" fill="#9fe3c6" transform="rotate(6 189.6 98.1)"/><rect x="374.7" y="401.4" width="8.1" height="8.1" fill="#c8facc" transform="rotate(16 378.7 405.4)"/><rect x="550.2" y="50.7" width="10.5" height="13.2" fill="#ececec" transform="rotate(31 555.4 57.3)"/><rect x="415.0" y="28.6" width="15.2" height="10.6" fill="#cdebb0" transform="rotate(33 422.6 33.9)"/><rect x="269.4" y="264.1" width="17.4" height="12.6" fill="#e6efd0" transform="rotate(10 278.1 270.3)"/><rect x="624.5" y="385.0" width="6.7" height="11.4" fill="#f0f0f0" transform="rotate(20 627.8 390.7)"/><rect x="482.2" y="190.4" width="10.4" height="6.3" fill="#cdebb0" transform="rotate(8 487.4 193.6)"/><rect x="411.1" y="38.3" width="13.8" height="8.5" fill="#cdebb0" transform="rotate(7 418.0 42.6)"/><rect x="604.6" y="82.3" width="11.6" height="13.9" fill="#9fe3c6" transform="rotate(19 610.4 89.3)"/><rect x="260.6" y="210.6" width="12.7" height="4.5" fill="#e6efd0" transform="rotate(37 267.0 212.9)"/><rect x="222.3" y="97.0" width="17.9" height="11.9" fill="#d5ebc5" transform="rotate(-29 231.3 102.9)"/><rect x="539.1" y="227.2" width="18.9" height="4.6" fill="#9fe3c6" transform="rotate(30 548.5 229.5)"/><rect x="290.1" y="340.1" width="11.4" height="9.4" fill="#ffffe5" transform="rotate(29 295.8 344.8)"/><rect x="401.8" y="402.5" width="8.3" height="5.1" fill="#e6efd0" transform="rotate(-5 405.9 405.1)"/><rect x="579.1" y="55.9" width="12.0" height="4.6" fill="#d5ebc5" transform="rotate(30 585.1 58.1)"/><rect x="543.0" y="86.7" width="10.1" height="5.0" fill="#ececec" transform="rotate(-37 548.1 89.2)"/><rect x="616.8" y="111.6" width="9.0" height="8.2" fill="#cdebb0" transform="rotate(9 621.3 115.6)"/><rect x="563.5" y="268.3" width="17.6" height="4.7" fill="#ffffe5" transform="rotate(39 572.3 270.7)"/><rect x="416.7" y="146.5" width="18.4" height="13.7" fill="#f0f0f0" transform="rotate(5 425.9 153.4)"/><rect x="347.3" y="342.2" width="14.8" height="12.4" fill="#ffffe5" transform="rotate(36 354.7 348.5)"/><rect x="497.6" y="95.0" width="6.8" height="10.9" fill="#c8facc" transform="rotate(-3 501.0 100.5)"/><rect x="303.6" y="125.7" width="9.8" height="10.2" fill="#cdebb0" transform="rotate(-15 308.5 130.9)"/><rect x="632.0" y="295.9" width="15.3" height="7.6" fill="#f0f0f0" transform="rotate(-15 639.6 299.7)"/><rect x="268.1" y="54.0" width="8.7" height="7.7" fill="#f2dad9" transform="rotate(9 272.5 57.9)"/><rect x="381.9" y="223.8" width="18.2" height="7.5" fill="#ffffe5" transform="rotate(16 391.0 227.5)"/><rect x="404.2" y="69.5" width="6.7" height="12.8" fill="#d5ebc5" transform="rotate(36 407.6 75.8)"/><rect x="483.6" y="203.5" width="18.1" height="7.9" fill="#ffffe5" transform="rotate(19 492.6 207.4)"/><rect x="381.7" y="51.6" width="10.9" height="6.8" fill="#f2dad9" transform="rotate(-5 387.2 55.0)"/><rect x="308.1" y="297.8" width="14.4" height="6.4" fill="#c8facc" transform="rotate(-7 315.3 301.0)"/><rect x="448.9" y="364.4" width="10.4" height="6.8" fill="#d5ebc5" transform="rotate(-32 454.1 367.8)"/><rect x="423.4" y="66.3" width="17.6" height="4.9" fill="#ececec" transform="rotate(-11 432.2 68.8)"/><rect x="186.6" y="253.2" width="14.8" height="13.9" fill="#cdebb0" transform="rotate(25 194.0 260.2)"/><rect x="485.6" y="87.9" width="6.0" height="5.7" fill="#e6efd0" transform="rotate(0 488.6 90.7)"/><rect x="480.6" y="259.3" width="18.6" height="13.8" fill="#cfcece" transform="rotate(39 489.9 266.2)"/><rect x="373.9" y="117.1" width="12.6" height="5.1" fill="#f5f0d0" transform="rotate(-35 380.2 119.7)"/><rect x="474.1" y="333.6" width="18.0" height="9.2" fill="#e6efd0" transform="rotate(7 483.2 338.2)"/><rect x="345.6" y="80.0" width="10.5" height="11.4" fill="#c8facc" transform="rotate(-33 350.9 85.8)"/><rect x="614.7" y="294.9" width="16.0" height="13.1" fill="#e6efd0" transform="rotate(13 622.8 301.4)"/><rect x="532.7" y="74.6" width="11.6" height="4.2" fill="#cdebb0" transform="rotate(29 538.5 76.7)"/><rect x="223.9" y="184.2" width="12.9" height="13.7" fill="#d5ebc5" transform="rotate(22 230.3 191.0)"/><rect x="315.9" y="223.0" width="6.7" height="9.7" fill="#d5ebc5" transform="rotate(-30 319.3 227.9)"/><rect x="410.5" y="147.1" width="9.9" height="6.5" fill="#f5f0d0" transform="rotate(7 415.5 150.3)"/><rect x="199.4" y="110.1" width="11.3" height="9.6" fill="#d5ebc5" transform="rotate(-3 205.1 114.9)"/><rect x="550.6" y="221.6" width="7.0" height="9.6" fill="#d5ebc5" transform="rotate(-26 554.1 226.5)"/><rect x="367.4" y="28.1" width="7.2" height="12.2" fill="#cfcece" transform="rotate(19 371.0 34.2)"/><rect x="249.6" y="234.6" width="5.4" height="5.1" fill="#d2ecc0" transform="rotate(-16 252.3 237.1)"/><rect x="474.3" y="356.5" width="5.6" height="8.2" fill="#f2dad9" transform="rotate(-34 477.1 360.6)"/><rect x="422.5" y="279.8" width="10.9" height="13.0" fill="#d2ecc0" transform="rotate(-24 428.0 286.3)"/><rect x="611.3" y="245.0" width="12.0" height="13.0" fill="#f2dad9" transform="rotate(-8 617.3 251.5)"/><rect x="299.5" y="261.5" width="8.1" height="4.8" fill="#cfcece" transform="rotate(23 303.5 263.9)"/><rect x="340.0" y="195.6" width="11.3" height="4.5" fill="#cdebb0" transform="rotate(27 345.6 197.9)"/><rect x="250.7" y="173.0" width="9.5" height="12.2" fill="#ececec" transform="rotate(14 255.4 179.0)"/><rect x="185.8" y="165.6" width="18.3" height="9.2" fill="#cdebb0" transform="rotate(2 195.0 170.2)"/><rect x="349.3" y="255.9" width="6.5" height="10.9" fill="#ffffe5" transform="rotate(-11 352.5 261.4)"/><rect x="343.8" y="259.7" width="10.2" height="7.0" fill="#cdebb0" transform="rotate(9 348.9 263.2)"/><rect x="319.5" y="218.3" width="12.2" height="11.5" fill="#d5ebc5" transform="rotate(-36 325.6 224.1)"/><rect x="270.4" y="253.2" width="16.3" height="13.4" fill="#ececec" transform="rotate(12 278.5 259.9)"/><rect x="358.6" y="139.0" width="14.5" height="4.9" fill="#f2dad9" transform="rotate(39 365.9 141.5)"/><rect x="323.4" y="147.8" width="16.5" height="11.9" fill="#cdebb0" transform="rotate(11 331.6 153.8)"/><rect x="636.6" y="218.8" width="10.5" height="4.8" fill="#9fe3c6" transform="rotate(-29 641.9 221.2)"/><rect x="466.0" y="33.0" width="18.1" height="11.5" fill="#cdebb0" transform="rotate(6 475.1 38.7)"/><rect x="555.7" y="211.7" width="9.7" height="10.3" fill="#d5ebc5" transform="rotate(33 560.6 216.9)"/><rect x="252.4" y="59.8" width="14.6" height="5.4" fill="#f0f0f0" transform="rotate(21 259.7 62.6)"/><rect x="541.4" y="197.9" width="17.6" height="11.3" fill="#ececec" transform="rotate(27 550.1 203.6)"/><rect x="484.5" y="241.2" width="6.6" height="5.2" fill="#d2ecc0" transform="rotate(-15 487.8 243.8)"/><rect x="229.4" y="364.9" width="6.4" height="7.2" fill="#d5ebc5" transform="rotate(-29 232.6 368.5)"/><rect x="246.3" y="130.4" width="10.7" height="13.0" fill="#ffffe5" transform="rotate(34 251.6 136.9)"/><rect x="485.6" y="386.5" width="11.9" height="10.9" fill="#e6efd0" transform="rotate(-9 491.6 392.0)"/><rect x="224.9" y="314.6" width="7.3" height="9.9" fill="#ececec" transform="rotate(-24 228.6 319.5)"/><rect x="555.2" y="278.0" width="10.3" height="12.0" fill="#f5f0d0" transform="rotate(15 560.3 284.0)"/><rect x="440.3" y="353.6" width="10.0" height="9.8" fill="#cfcece" transform="rotate(-2 445.3 358.5)"/><rect x="327.4" y="298.7" width="8.3" height="6.6" fill="#cdebb0" transform="rotate(18 331.5 302.0)"/><rect x="290.5" y="51.1" width="16.5" height="7.8" fill="#f0f0f0" transform="rotate(17 298.8 55.0)"/><rect x="595.8" y="51.4" width="7.5" height="8.1" fill="#cfcece" transform="rotate(2 599.5 55.4)"/><rect x="397.1" y="117.7" width="15.5" height="5.0" fill="#c8facc" transform="rotate(-15 404.9 120.2)"/><rect x="189.7" y="297.6" width="13.0" height="9.5" fill="#c8facc" transform="rotate(-13 196.2 302.4)"/><rect x="381.4" y="405.1" width="10.0" height="7.0" fill="#c8facc" transform="rotate(-20 386.4 408.6)"/><rect x="274.7" y="102.7" width="12.5" height="10.1" fill="#ffffe5" transform="rotate(-30 280.9 107.7)"/><rect x="440.1" y="375.3" width="17.9" height="10.9" fill="#f2dad9" transform="rotate(-11 449.1 380.8)"/><rect x="451.6" y="351.4" width="18.7" height="5.1" fill="#c8facc" transform="rotate(-11 461.0 354.0)"/><rect x="423.6" y="125.6" width="9.1" height="6.5" fill="#e6efd0" transform="rotate(-29 428.2 128.9)"/><rect x="206.9" y="34.6" width="16.1" height="13.4" fill="#cfcece" transform="rotate(-28 215.0 41.3)"/><rect x="245.5" y="360.2" width="17.0" height="10.1" fill="#c8facc" transform="rotate(4 254.0 365.2)"/><rect x="418.0" y="281.5" width="17.9" height="11.8" fill="#cdebb0" transform="rotate(-19 427.0 287.4)"/><rect x="370.3" y="329.5" width="14.1" height="9.4" fill="#ececec" transform="rotate(-2 377.3 334.2)"/><rect x="332.7" y="111.0" width="14.0" height="6.7" fill="#ffffe5" transform="rotate(18 339.7 114.3)"/><rect x="208.3" y="237.8" width="13.0" height="13.3" fill="#f2dad9" transform="rotate(19 214.8 244.5)"/><rect x="590.1" y="67.2" width="12.9" height="5.2" fill="#f2dad9" transform="rotate(39 596.6 69.8)"/><rect x="334.2" y="79.6" width="18.3" height="10.6" fill="#f0f0f0" transform="rotate(-29 343.4 84.9)"/><rect x="436.5" y="407.0" width="14.6" height="12.6" fill="#e6efd0" transform="rotate(23 443.8 413.3)"/><rect x="423.3" y="197.9" width="14.5" height="4.9" fill="#e6efd0" transform="rotate(16 430.6 200.3)"/><rect x="604.3" y="370.4" width="6.4" height="5.4" fill="#e6efd0" transform="rotate(-25 607.5 373.1)"/><rect x="184.9" y="394.1" width="17.6" height="4.9" fill="#f2dad9" transform="rotate(32 193.6 396.6)"/><rect x="326.0" y="296.9" width="18.1" height="13.8" fill="#c8facc" transform="rotate(36 335.1 303.8)"/><rect x="574.0" y="390.2" width="5.3" height="8.9" fill="#9fe3c6" transform="rotate(7 576.7 394.6)"/><rect x="605.0" y="56.9" width="12.3" height="13.6" fill="#d5ebc5" transform="rotate(-37 611.2 63.7)"/><rect x="308.2" y="143.2" width="18.8" height="8.1" fill="#c8facc" transform="rotate(-28 317.6 147.3)"/><rect x="491.5" y="226.9" width="13.1" height="11.6" fill="#cdebb0" transform="rotate(25 498.1 232.7)"/><rect x="347.5" y="399.7" width="8.0" height="8.0" fill="#ececec" transform="rotate(-21 351.5 403.7)"/><rect x="332.4" y="159.4" width="5.2" height="11.7" fill="#ececec" transform="rotate(-19 335.0 165.2)"/><rect x="415.8" y="156.5" width="14.4" height="8.5" fill="#f0f0f0" transform="rotate(-21 423.1 160.8)"/><rect x="256.9" y="84.1" width="8.5" height="8.8" fill="#9fe3c6" transform="rotate(23 261.2 88.5)"/><rect x="258.6" y="289.5" width="13.5" height="10.0" fill="#cdebb0" transform="rotate(6 265.4 294.5)"/><rect x="260.6" y="116.9" width="9.2" height="7.3" fill="#cdebb0" transform="rotate(18 265.2 120.6)"/><rect x="542.1" y="234.8" width="6.1" height="11.6" fill="#ffffe5" transform="rotate(-20 545.1 240.6)"/><rect x="197.3" y="241.9" width="6.9" height="10.7" fill="#d5ebc5" transform="rotate(-34 200.8 247.3)"/><rect x="634.1" y="175.0" width="6.9" height="11.9" fill="#9fe3c6" transform="rotate(23 637.6 181.0)"/><rect x="629.7" y="105.9" width="17.7" height="9.6" fill="#d5ebc5" transform="rotate(36 638.6 110.7)"/><rect x="397.2" y="344.7" width="5.2" height="9.0" fill="#d5ebc5" transform="rotate(-10 399.8 349.2)"/><rect x="373.3" y="89.0" width="5.9" height="5.6" fill="#ffffe5" transform="rotate(-1 376.3 91.8)"/><rect x="601.3" y="160.6" width="18.0" height="5.4" fill="#cdebb0" transform="rotate(17 610.3 163.3)"/><rect x="261.8" y="76.5" width="14.5" height="12.8" fill="#f5f0d0" transform="rotate(18 269.0 82.9)"/><rect x="340.8" y="310.7" width="17.9" height="5.5" fill="#c8facc" transform="rotate(30 349.7 313.5)"/><rect x="511.8" y="290.2" width="6.7" height="7.2" fill="#f2dad9" transform="rotate(7 515.2 293.8)"/><rect x="417.0" y="234.9" width="12.9" height="11.6" fill="#d5ebc5" transform="rotate(2 423.4 240.7)"/><rect x="214.6" y="113.4" width="6.1" height="7.1" fill="#e6efd0" transform="rotate(21 217.6 116.9)"/><rect x="258.9" y="403.9" width="13.9" height="5.0" fill="#f5f0d0" transform="rotate(-1 265.9 406.4)"/><rect x="335.9" y="416.8" width="11.8" height="4.4" fill="#e6efd0" transform="rotate(-28 341.8 419.0)"/><rect x="624.0" y="35.5" width="15.7" height="8.0" fill="#c8facc" transform="rotate(-36 631.8 39.5)"/><rect x="192.8" y="179.7" width="16.5" height="13.6" fill="#f0f0f0" transform="rotate(-38 201.0 186.5)"/><rect x="542.1" y="220.4" width="14.1" height="8.7" fill="#cdebb0" transform="rotate(-25 549.2 224.7)"/><rect x="252.0" y="402.8" width="9.7" height="12.5" fill="#e6efd0" transform="rotate(5 256.8 409.0)"/><rect x="292.2" y="317.0" width="7.3" height="5.4" fill="#f0f0f0" transform="rotate(6 295.8 319.7)"/><rect x="374.2" y="252.1" width="8.6" height="13.5" fill="#c8facc" transform="rotate(-1 378.5 258.9)"/><rect x="387.4" y="243.1" width="17.9" height="11.7" fill="#9fe3c6" transform="rotate(35 396.4 249.0)"/><rect x="285.0" y="250.9" width="7.2" height="13.5" fill="#d5ebc5" transform="rotate(-17 288.6 257.6)"/><rect x="467.0" y="28.7" width="11.7" height="5.1" fill="#e6efd0" transform="rotate(20 472.8 31.2)"/><rect x="473.4" y="293.4" width="14.3" height="8.0" fill="#f5f0d0" transform="rotate(-0 480.6 297.4)"/><rect x="199.1" y="152.3" width="13.9" height="4.6" fill="#cdebb0" transform="rotate(-29 206.0 154.6)"/><rect x="306.3" y="196.7" width="6.2" height="12.0" fill="#cfcece" transform="rotate(-21 309.4 202.7)"/><rect x="539.8" y="124.8" width="17.6" height="9.0" fill="#d2ecc0" transform="rotate(-6 548.7 129.3)"/><rect x="198.4" y="55.5" width="17.0" height="5.5" fill="#e6efd0" transform="rotate(-15 206.9 58.3)"/><rect x="405.3" y="385.8" width="14.1" height="10.9" fill="#f2dad9" transform="rotate(-4 412.4 391.3)"/><rect x="624.9" y="381.7" width="14.6" height="12.0" fill="#f2dad9" transform="rotate(17 632.1 387.7)"/><rect x="542.0" y="95.2" width="16.4" height="7.0" fill="#cdebb0" transform="rotate(-20 550.2 98.7)"/><rect x="616.0" y="281.4" width="11.6" height="10.4" fill="#cfcece" transform="rotate(14 621.7 286.6)"/><rect x="607.9" y="275.9" width="5.9" height="10.7" fill="#f2dad9" transform="rotate(-31 610.8 281.3)"/><rect x="578.8" y="145.7" width="7.6" height="10.9" fill="#c8facc" transform="rotate(21 582.6 151.1)"/><rect x="520.5" y="286.9" width="11.1" height="8.1" fill="#cdebb0" transform="rotate(-8 526.1 291.0)"/><rect x="436.0" y="393.5" width="13.9" height="8.9" fill="#ececec" transform="rotate(-9 442.9 397.9)"/><rect x="192.1" y="367.7" width="12.0" height="13.8" fill="#d5ebc5" transform="rotate(-22 198.0 374.6)"/><rect x="496.1" y="227.8" width="9.4" height="6.7" fill="#f2dad9" transform="rotate(-25 500.8 231.2)"/><rect x="492.2" y="390.8" width="9.6" height="13.3" fill="#f2dad9" transform="rotate(33 497.1 397.5)"/><rect x="421.6" y="252.1" width="9.2" height="8.6" fill="#d5ebc5" transform="rotate(-35 426.2 256.5)"/><rect x="303.1" y="231.6" width="11.8" height="4.4" fill="#d2ecc0" transform="rotate(29 309.0 233.8)"/><rect x="197.0" y="321.6" width="12.4" height="6.9" fill="#ececec" transform="rotate(35 203.2 325.1)"/><rect x="288.5" y="155.5" width="6.0" height="4.5" fill="#e6efd0" transform="rotate(-12 291.5 157.7)"/><rect x="571.0" y="361.0" width="12.4" height="6.2" fill="#e6efd0" transform="rotate(34 577.3 364.1)"/><rect x="597.9" y="56.5" width="11.0" height="8.8" fill="#d2ecc0" transform="rotate(-7 603.4 60.8)"/><rect x="547.6" y="383.9" width="12.0" height="13.5" fill="#f0f0f0" transform="rotate(7 553.6 390.6)"/><rect x="636.9" y="230.0" width="7.7" height="11.7" fill="#c8facc" transform="rotate(-35 640.8 235.8)"/><rect x="256.8" y="403.0" width="16.0" height="9.8" fill="#f2dad9" transform="rotate(35 264.8 407.9)"/><rect x="526.9" y="278.3" width="14.9" height="8.6" fill="#d5ebc5" transform="rotate(-5 534.3 282.6)"/><rect x="615.5" y="99.1" width="8.5" height="13.0" fill="#cdebb0" transform="rotate(4 619.8 105.6)"/><rect x="298.9" y="298.2" width="11.1" height="5.3" fill="#ffffe5" transform="rotate(-6 304.5 300.8)"/><rect x="358.9" y="278.3" width="14.5" height="10.2" fill="#c8facc" transform="rotate(-36 366.2 283.4)"/><rect x="288.0" y="248.5" width="10.6" height="7.8" fill="#f5f0d0" transform="rotate(19 293.3 252.4)"/><rect x="461.8" y="105.4" width="8.4" height="11.4" fill="#9fe3c6" transform="rotate(39 466.0 111.1)"/><rect x="603.0" y="276.7" width="9.7" height="4.2" fill="#e6efd0" transform="rotate(27 607.9 278.8)"/><rect x="438.0" y="315.3" width="17.2" height="5.9" fill="#d5ebc5" transform="rotate(-37 446.6 318.3)"/><rect x="502.1" y="200.7" width="10.1" height="8.4" fill="#9fe3c6" transform="rotate(-4 507.1 204.9)"/><rect x="269.0" y="34.0" width="17.2" height="10.2" fill="#e6efd0" transform="rotate(-33 277.6 39.1)"/><rect x="461.9" y="239.3" width="14.2" height="10.8" fill="#cfcece" transform="rotate(0 469.0 244.7)"/><rect x="585.3" y="56.1" width="8.2" height="6.3" fill="#f5f0d0" transform="rotate(8 589.4 59.2)"/><rect x="376.9" y="279.0" width="8.2" height="11.7" fill="#9fe3c6" transform="rotate(3 381.0 284.8)"/><rect x="431.9" y="178.9" width="16.8" height="7.4" fill="#d5ebc5" transform="rotate(-6 440.2 182.6)"/><rect x="458.2" y="109.2" width="10.6" height="13.9" fill="#f0f0f0" transform="rotate(-24 463.4 116.2)"/><rect x="199.4" y="251.2" width="16.5" height="12.4" fill="#9fe3c6" transform="rotate(-9 207.6 257.4)"/><rect x="520.7" y="250.3" width="8.5" height="11.1" fill="#d2ecc0" transform="rotate(5 524.9 255.8)"/><rect x="244.8" y="34.9" width="15.5" height="9.8" fill="#e6efd0" transform="rotate(25 252.6 39.8)"/><rect x="612.6" y="132.4" width="12.9" height="9.3" fill="#c8facc" transform="rotate(-0 619.1 137.0)"/><rect x="600.2" y="335.0" width="11.9" height="8.9" fill="#f0f0f0" transform="rotate(32 606.2 339.4)"/><rect x="489.5" y="63.9" width="5.7" height="8.6" fill="#f5f0d0" transform="rotate(5 492.3 68.3)"/><rect x="438.1" y="396.1" width="9.9" height="11.6" fill="#f2dad9" transform="rotate(-34 443.1 401.9)"/><rect x="427.2" y="92.5" width="10.1" height="6.2" fill="#c8facc" transform="rotate(16 432.2 95.6)"/><rect x="342.9" y="235.7" width="5.3" height="7.7" fill="#c8facc" transform="rotate(13 345.6 239.6)"/><rect x="535.8" y="269.2" width="16.7" height="10.1" fill="#cdebb0" transform="rotate(-23 544.2 274.3)"/><rect x="226.3" y="57.7" width="16.1" height="11.4" fill="#e6efd0" transform="rotate(-19 234.4 63.4)"/><rect x="199.4" y="253.7" width="14.3" height="6.9" fill="#ececec" transform="rotate(-14 206.6 257.1)"/><rect x="494.4" y="158.4" width="17.3" height="6.2" fill="#9fe3c6" transform="rotate(-2 503.1 161.5)"/><rect x="184.8" y="384.4" width="16.0" height="6.8" fill="#ececec" transform="rotate(0 192.8 387.8)"/><rect x="276.4" y="114.1" width="13.7" height="5.5" fill="#9fe3c6" transform="rotate(37 283.2 116.9)"/><rect x="540.3" y="372.9" width="7.5" height="5.8" fill="#c8facc" transform="rotate(7 544.0 375.8)"/><rect x="393.6" y="259.9" width="9.9" height="11.7" fill="#ffffe5" transform="rotate(-15 398.6 265.8)"/><rect x="395.4" y="47.7" width="11.9" height="10.7" fill="#d5ebc5" transform="rotate(28 401.3 53.1)"/><rect x="525.1" y="293.2" width="18.2" height="4.2" fill="#ececec" transform="rotate(-14 534.2 295.3)"/><rect x="525.7" y="217.9" width="12.5" height="7.9" fill="#f0f0f0" transform="rotate(23 531.9 221.8)"/><rect x="185.9" y="298.5" width="7.5" height="6.7" fill="#9fe3c6" transform="rotate(13 189.7 301.8)"/><rect x="200.8" y="331.9" width="8.1" height="4.2" fill="#cdebb0" transform="rotate(-20 204.8 334.0)"/><rect x="290.7" y="141.9" width="8.7" height="4.2" fill="#c8facc" transform="rotate(-15 295.0 143.9)"/><rect x="295.7" y="69.7" width="16.8" height="8.7" fill="#f2dad9" transform="rotate(1 304.1 74.1)"/><rect x="423.2" y="367.3" width="17.2" height="12.0" fill="#e6efd0" transform="rotate(-4 431.8 373.3)"/><rect x="287.8" y="345.2" width="10.1" height="6.7" fill="#d2ecc0" transform="rotate(-4 292.8 348.5)"/><rect x="632.5" y="339.8" width="16.8" height="6.9" fill="#cfcece" transform="rotate(-16 640.9 343.3)"/><rect x="187.9" y="337.2" width="13.7" height="6.9" fill="#d2ecc0" transform="rotate(-25 194.7 340.6)"/><rect x="488.1" y="295.5" width="15.4" height="8.5" fill="#d2ecc0" transform="rotate(-8 495.9 299.8)"/><rect x="277.6" y="249.9" width="14.2" height="12.7" fill="#d5ebc5" transform="rotate(-24 284.7 256.3)"/><rect x="287.8" y="404.1" width="12.6" height="9.1" fill="#f2dad9" transform="rotate(-15 294.1 408.7)"/><rect x="415.7" y="409.3" width="6.1" height="13.9" fill="#c8facc" transform="rotate(-39 418.8 416.2)"/><rect x="541.2" y="304.6" width="15.5" height="8.5" fill="#f0f0f0" transform="rotate(39 548.9 308.8)"/><rect x="450.4" y="237.6" width="5.8" height="11.1" fill="#ffffe5" transform="rotate(-35 453.3 243.2)"/><rect x="485.8" y="109.8" width="11.3" height="9.4" fill="#cdebb0" transform="rotate(-13 491.5 114.5)"/><rect x="176.7" y="306.4" width="17.9" height="10.0" fill="#f2dad9" transform="rotate(-21 185.7 311.4)"/><rect x="327.8" y="401.0" width="12.8" height="5.0" fill="#f2dad9" transform="rotate(11 334.2 403.5)"/><rect x="262.9" y="337.8" width="8.1" height="5.7" fill="#c8facc" transform="rotate(-12 267.0 340.7)"/><rect x="537.8" y="271.0" width="15.4" height="12.9" fill="#9fe3c6" transform="rotate(12 545.4 277.4)"/><rect x="544.2" y="377.9" width="15.4" height="7.2" fill="#cdebb0" transform="rotate(-31 551.9 381.5)"/><rect x="605.7" y="43.1" width="12.9" height="7.8" fill="#f2dad9" transform="rotate(26 612.1 47.1)"/><rect x="353.7" y="277.4" width="10.8" height="10.5" fill="#f2dad9" transform="rotate(-37 359.1 282.7)"/><rect x="301.9" y="104.7" width="6.2" height="6.5" fill="#cfcece" transform="rotate(16 304.9 108.0)"/><rect x="306.5" y="352.5" width="14.8" height="13.8" fill="#cfcece" transform="rotate(14 313.9 359.4)"/><rect x="609.5" y="150.7" width="5.1" height="8.1" fill="#d5ebc5" transform="rotate(7 612.0 154.8)"/><rect x="422.6" y="42.1" width="5.4" height="13.8" fill="#9fe3c6" transform="rotate(-10 425.3 49.0)"/><rect x="352.9" y="392.7" width="14.0" height="10.1" fill="#cdebb0" transform="rotate(-24 359.9 397.7)"/><rect x="404.4" y="325.5" width="12.9" height="6.4" fill="#cdebb0" transform="rotate(-25 410.9 328.7)"/><rect x="213.4" y="364.3" width="5.5" height="5.9" fill="#f0f0f0" transform="rotate(-3 216.1 367.2)"/><rect x="458.4" y="315.3" width="15.7" height="11.2" fill="#d5ebc5" transform="rotate(-36 466.3 320.9)"/><rect x="245.5" y="91.2" width="5.5" height="4.3" fill="#cfcece" transform="rotate(30 248.2 93.3)"/><rect x="243.5" y="304.5" width="6.9" height="7.4" fill="#cdebb0" transform="rotate(39 247.0 308.2)"/><rect x="450.0" y="115.4" width="7.5" height="8.5" fill="#d5ebc5" transform="rotate(-5 453.8 119.7)"/><rect x="472.2" y="90.9" width="7.4" height="9.4" fill="#c8facc" transform="rotate(-10 475.8 95.6)"/><rect x="351.5" y="319.3" width="6.3" height="4.1" fill="#cdebb0" transform="rotate(-15 354.7 321.4)"/><rect x="266.8" y="154.5" width="5.1" height="12.9" fill="#cfcece" transform="rotate(7 269.3 160.9)"/><rect x="306.7" y="138.7" width="14.3" height="5.6" fill="#ececec" transform="rotate(24 313.8 141.5)"/><rect x="600.1" y="68.7" width="14.1" height="6.6" fill="#ffffe5" transform="rotate(-16 607.1 72.0)"/><rect x="519.2" y="329.3" width="14.8" height="13.2" fill="#cfcece" transform="rotate(-25 526.6 335.9)"/><rect x="575.4" y="158.5" width="8.5" height="9.6" fill="#f0f0f0" transform="rotate(-30 579.7 163.3)"/><rect x="573.3" y="164.4" width="13.5" height="13.6" fill="#f2dad9" transform="rotate(32 580.1 171.2)"/><rect x="634.4" y="350.5" width="14.2" height="13.6" fill="#cfcece" transform="rotate(-29 641.5 357.3)"/><rect x="401.5" y="59.8" width="15.9" height="10.6" fill="#f2dad9" transform="rotate(-5 409.5 65.1)"/><rect x="271.1" y="399.2" width="10.5" height="6.7" fill="#cdebb0" transform="rotate(13 276.3 402.5)"/><rect x="293.9" y="169.6" width="14.7" height="5.9" fill="#ffffe5" transform="rotate(28 301.3 172.6)"/><rect x="348.1" y="264.4" width="15.3" height="5.2" fill="#9fe3c6" transform="rotate(15 355.7 267.0)"/><rect x="470.3" y="210.8" width="12.1" height="4.3" fill="#ffffe5" transform="rotate(-6 476.3 213.0)"/><rect x="544.5" y="95.0" width="11.5" height="8.7" fill="#f2dad9" transform="rotate(14 550.2 99.4)"/><rect x="322.1" y="179.3" width="9.4" height="11.4" fill="#c8facc" transform="rotate(-3 326.8 185.0)"/><rect x="593.5" y="283.0" width="18.4" height="5.3" fill="#cdebb0" transform="rotate(8 602.7 285.6)"/><rect x="368.5" y="356.4" width="12.6" height="5.9" fill="#ececec" transform="rotate(14 374.9 359.4)"/><rect x="624.0" y="50.5" width="6.4" height="4.4" fill="#f2dad9" transform="rotate(-3 627.2 52.7)"/><rect x="487.4" y="239.8" width="17.0" height="7.7" fill="#cdebb0" transform="rotate(-31 495.9 243.6)"/><rect x="393.3" y="63.1" width="13.2" height="12.5" fill="#ececec" transform="rotate(-27 399.9 69.3)"/><rect x="230.9" y="261.6" width="16.5" height="7.4" fill="#ececec" transform="rotate(-30 239.2 265.3)"/><rect x="581.8" y="239.8" width="13.1" height="12.6" fill="#9fe3c6" transform="rotate(14 588.4 246.1)"/><rect x="305.7" y="327.7" width="13.9" height="8.7" fill="#e6efd0" transform="rotate(-39 312.6 332.0)"/><rect x="564.8" y="215.2" width="17.7" height="5.6" fill="#d2ecc0" transform="rotate(-19 573.7 218.0)"/><rect x="233.5" y="259.8" width="14.5" height="13.9" fill="#f2dad9" transform="rotate(23 240.8 266.7)"/><rect x="208.7" y="263.9" width="10.9" height="6.8" fill="#e6efd0" transform="rotate(37 214.1 267.3)"/><rect x="600.9" y="293.7" width="17.0" height="4.8" fill="#cfcece" transform="rotate(-31 609.4 296.1)"/><rect x="417.3" y="401.0" width="18.3" height="8.4" fill="#d5ebc5" transform="rotate(6 426.4 405.3)"/><rect x="452.5" y="324.3" width="11.2" height="7.0" fill="#ffffe5" transform="rotate(-11 458.2 327.8)"/><rect x="512.9" y="28.6" width="7.4" height="5.4" fill="#d5ebc5" transform="rotate(-27 516.6 31.3)"/><rect x="588.4" y="316.8" width="5.9" height="10.8" fill="#f5f0d0" transform="rotate(-23 591.4 322.2)"/><rect x="260.1" y="410.4" width="8.9" height="4.5" fill="#f0f0f0" transform="rotate(16 264.6 412.6)"/><rect x="537.7" y="67.3" width="5.5" height="10.5" fill="#ffffe5" transform="rotate(-2 540.5 72.6)"/><rect x="559.0" y="380.9" width="7.5" height="8.9" fill="#f0f0f0" transform="rotate(-15 562.8 385.4)"/><rect x="273.3" y="274.3" width="6.0" height="13.2" fill="#c8facc" transform="rotate(36 276.3 280.9)"/><rect x="319.2" y="306.4" width="17.6" height="11.9" fill="#e6efd0" transform="rotate(-37 328.0 312.3)"/><rect x="284.1" y="354.5" width="12.2" height="9.5" fill="#c8facc" transform="rotate(-17 290.2 359.2)"/><rect x="431.3" y="148.1" width="7.4" height="11.4" fill="#9fe3c6" transform="rotate(21 435.0 153.8)"/><rect x="482.5" y="365.7" width="18.1" height="6.2" fill="#e6efd0" transform="rotate(-35 491.6 368.8)"/><rect x="215.9" y="91.6" width="16.6" height="9.0" fill="#ececec" transform="rotate(12 224.2 96.1)"/><rect x="267.6" y="55.0" width="8.2" height="10.1" fill="#d5ebc5" transform="rotate(-20 271.7 60.1)"/><rect x="497.8" y="257.3" width="13.6" height="11.7" fill="#f0f0f0" transform="rotate(9 504.6 263.2)"/><rect x="362.8" y="278.8" width="10.2" height="8.1" fill="#f2dad9" transform="rotate(-11 367.9 282.9)"/><rect x="334.4" y="161.3" width="16.9" height="12.0" fill="#f2dad9" transform="rotate(14 342.9 167.3)"/><rect x="354.1" y="277.1" width="8.5" height="7.2" fill="#c8facc" transform="rotate(-32 358.4 280.6)"/><rect x="600.5" y="145.5" width="10.3" height="5.2" fill="#e6efd0" transform="rotate(-29 605.6 148.1)"/><rect x="587.8" y="56.9" width="8.6" height="11.6" fill="#d5ebc5" transform="rotate(-22 592.1 62.7)"/><rect x="339.1" y="211.2" width="7.8" height="6.9" fill="#f2dad9" transform="rotate(-6 343.0 214.6)"/><rect x="317.2" y="212.2" width="7.9" height="9.7" fill="#e6efd0" transform="rotate(22 321.1 217.1)"/><rect x="265.4" y="70.8" width="6.1" height="11.9" fill="#cdebb0" transform="rotate(8 268.5 76.8)"/><rect x="286.0" y="208.7" width="11.8" height="7.2" fill="#f5f0d0" transform="rotate(1 291.9 212.3)"/><rect x="338.3" y="402.6" width="10.0" height="13.2" fill="#d5ebc5" transform="rotate(29 343.4 409.2)"/><rect x="235.1" y="340.3" width="6.3" height="9.6" fill="#d5ebc5" transform="rotate(-32 238.2 345.0)"/><rect x="258.0" y="267.0" width="9.2" height="7.2" fill="#f2dad9" transform="rotate(-16 262.6 270.6)"/><rect x="614.9" y="321.2" width="14.0" height="8.7" fill="#d5ebc5" transform="rotate(22 621.9 325.6)"/><rect x="247.6" y="232.1" width="10.8" height="9.2" fill="#f5f0d0" transform="rotate(17 253.0 236.7)"/><rect x="219.8" y="83.8" width="5.7" height="5.6" fill="#f2dad9" transform="rotate(37 222.7 86.6)"/><rect x="228.9" y="79.8" width="7.4" height="9.7" fill="#9fe3c6" transform="rotate(10 232.6 84.7)"/><rect x="222.4" y="155.9" width="10.9" height="8.9" fill="#ffffe5" transform="rotate(-10 227.8 160.4)"/><rect x="204.2" y="129.3" width="15.8" height="9.9" fill="#f0f0f0" transform="rotate(13 212.0 134.2)"/><rect x="326.2" y="283.0" width="11.0" height="4.4" fill="#f5f0d0" transform="rotate(-35 331.7 285.2)"/><rect x="225.4" y="79.0" width="7.8" height="9.3" fill="#cdebb0" transform="rotate(7 229.3 83.6)"/><rect x="617.0" y="108.2" width="14.1" height="10.3" fill="#f5f0d0" transform="rotate(-2 624.1 113.3)"/><rect x="254.1" y="318.2" width="16.5" height="13.4" fill="#d5ebc5" transform="rotate(-23 262.3 324.9)"/><rect x="340.0" y="194.3" width="17.8" height="4.9" fill="#c8facc" transform="rotate(-40 348.9 196.7)"/><rect x="595.0" y="59.2" width="9.0" height="12.5" fill="#ececec" transform="rotate(3 599.5 65.4)"/><rect x="376.1" y="204.3" width="11.6" height="7.7" fill="#9fe3c6" transform="rotate(-4 381.9 208.2)"/><rect x="625.3" y="297.5" width="7.2" height="9.3" fill="#cdebb0" transform="rotate(5 628.9 302.1)"/><rect x="426.9" y="375.9" width="14.4" height="6.2" fill="#d5ebc5" transform="rotate(-12 434.1 379.0)"/><rect x="321.7" y="171.1" width="9.4" height="5.4" fill="#cfcece" transform="rotate(7 326.3 173.8)"/><rect x="330.5" y="97.7" width="9.8" height="8.4" fill="#c8facc" transform="rotate(21 335.4 101.9)"/><rect x="511.4" y="335.5" width="6.2" height="5.9" fill="#d5ebc5" transform="rotate(-15 514.5 338.4)"/><rect x="514.8" y="144.3" width="11.3" height="7.6" fill="#f2dad9" transform="rotate(-2 520.4 148.1)"/><rect x="606.9" y="51.3" width="9.2" height="7.4" fill="#d5ebc5" transform="rotate(2 611.5 55.0)"/><rect x="255.2" y="410.6" width="7.8" height="12.0" fill="#f2dad9" transform="rotate(-30 259.1 416.7)"/><rect x="590.9" y="55.8" width="13.2" height="7.2" fill="#f0f0f0" transform="rotate(-33 597.6 59.4)"/><rect x="577.0" y="225.4" width="5.7" height="6.9" fill="#f0f0f0" transform="rotate(-17 579.8 228.9)"/><rect x="355.7" y="56.0" width="17.0" height="8.2" fill="#cfcece" transform="rotate(-7 364.1 60.0)"/><rect x="513.8" y="160.5" width="8.2" height="4.6" fill="#f0f0f0" transform="rotate(-36 517.8 162.8)"/><rect x="296.0" y="139.2" width="18.0" height="9.4" fill="#f5f0d0" transform="rotate(-10 304.9 143.9)"/><rect x="485.6" y="157.0" width="11.9" height="7.8" fill="#cdebb0" transform="rotate(-18 491.6 160.9)"/><rect x="179.9" y="322.6" width="7.2" height="6.4" fill="#cdebb0" transform="rotate(24 183.5 325.7)"/><rect x="516.5" y="36.4" width="5.1" height="9.4" fill="#f0f0f0" transform="rotate(-27 519.1 41.1)"/><rect x="220.5" y="331.8" width="12.8" height="8.9" fill="#f2dad9" transform="rotate(-12 226.9 336.3)"/><rect x="404.1" y="332.5" width="16.7" height="12.9" fill="#f2dad9" transform="rotate(18 412.5 339.0)"/><rect x="386.7" y="233.4" width="13.1" height="9.3" fill="#cdebb0" transform="rotate(26 393.2 238.0)"/><rect x="558.6" y="347.5" width="12.5" height="9.6" fill="#e6efd0" transform="rotate(31 564.9 352.3)"/><rect x="234.7" y="26.4" width="13.1" height="13.0" fill="#e6efd0" transform="rotate(-18 241.3 32.8)"/><rect x="223.7" y="273.0" width="16.5" height="8.3" fill="#cfcece" transform="rotate(-14 232.0 277.2)"/><rect x="581.6" y="330.7" width="8.9" height="4.8" fill="#cdebb0" transform="rotate(17 586.0 333.1)"/><rect x="448.9" y="299.0" width="6.1" height="8.4" fill="#c8facc" transform="rotate(-20 451.9 303.3)"/><rect x="219.2" y="372.7" width="18.1" height="5.2" fill="#f2dad9" transform="rotate(-4 228.2 375.3)"/><rect x="431.6" y="221.6" width="7.5" height="7.8" fill="#e6efd0" transform="rotate(1 435.4 225.5)"/><rect x="372.0" y="255.8" width="18.2" height="13.3" fill="#e6efd0" transform="rotate(33 381.1 262.5)"/><rect x="279.8" y="120.1" width="11.4" height="10.4" fill="#ececec" transform="rotate(9 285.5 125.3)"/><rect x="476.2" y="142.2" width="14.1" height="5.3" fill="#cdebb0" transform="rotate(35 483.3 144.9)"/><rect x="480.8" y="66.5" width="6.7" height="4.8" fill="#d2ecc0" transform="rotate(30 484.2 68.9)"/><rect x="218.0" y="401.5" width="18.6" height="11.2" fill="#ececec" transform="rotate(-2 227.3 407.1)"/><rect x="530.1" y="224.0" width="8.8" height="9.3" fill="#9fe3c6" transform="rotate(13 534.5 228.6)"/><rect x="518.4" y="76.4" width="8.6" height="13.5" fill="#d5ebc5" transform="rotate(-26 522.7 83.2)"/><rect x="610.5" y="384.6" width="16.8" height="12.5" fill="#d5ebc5" transform="rotate(26 618.9 390.8)"/><rect x="580.0" y="392.3" width="15.4" height="4.6" fill="#e6efd0" transform="rotate(-9 587.7 394.6)"/><rect x="508.8" y="213.3" width="17.5" height="13.9" fill="#ffffe5" transform="rotate(-4 517.5 220.3)"/><rect x="482.2" y="295.3" width="10.1" height="10.4" fill="#cfcece" transform="rotate(-35 487.3 300.5)"/><rect x="508.5" y="340.0" width="11.5" height="6.1" fill="#d2ecc0" transform="rotate(-4 514.3 343.0)"/><rect x="501.3" y="84.4" width="18.8" height="13.2" fill="#c8facc" transform="rotate(27 510.7 91.0)"/><rect x="275.0" y="185.6" width="14.7" height="13.1" fill="#cdebb0" transform="rotate(14 282.3 192.1)"/><rect x="485.9" y="301.9" width="7.4" height="7.1" fill="#d5ebc5" transform="rotate(-26 489.6 305.4)"/></g><path d="M250.8 57.8 L321.0 52.3 L321.0 76.3 L287.8 91.6 L261.7 87.2Z" fill="#ebdbe8"/><path d="M231.1 58.9 L252.9 62.1 L259.5 95.9 L244.2 91.6 L233.3 72.0Z" fill="#fbd5d0"/><path d="M181.0 122.1 L209.3 122.1 L209.3 152.6 L185.3 152.6Z" fill="#f2dad9"/><path d="M215.9 122.1 L246.4 124.3 L246.4 139.6 L218.1 139.6Z" fill="#fbd5d0"/><path d="M165.7 196.2 L196.2 194.1 L196.2 218.9 L163.5 218.9Z" fill="#f6dcd8"/><path d="M61.1 232.1 L141.7 223.4 L152.6 256.1 L130.8 273.5 L87.2 279.0 L63.2 267.0Z" fill="#ebdbe8"/><path d="M157.0 249.5 L178.8 251.7 L174.4 269.2 L159.2 267.0Z" fill="#fbd5d0"/><path d="M50.2 400.0 L122.1 369.5 L141.7 384.7 L141.7 415.2 L157.0 437.9 L43.6 437.9Z" fill="#ebdbe8"/><path d="M157.0 328.0 L196.2 321.5 L209.3 341.1 L202.8 358.6 L165.7 358.6Z" fill="#f6d8d0"/><path d="M0.0 282.2 L21.8 284.4 L17.4 310.6 L0.0 314.9Z" fill="#d8d8d8"/><path d="M460.6 251.7 L517.2 239.7 L539.1 243.0 L552.1 269.2 L528.2 291.0 L495.4 325.8 L482.4 321.5 L460.6 295.3Z" fill="#ebdbe8"/><path d="M425.7 227.7 L473.6 225.5 L478.0 249.5 L430.0 256.1Z" fill="#ebdbe8"/><path d="M469.3 358.6 L504.2 354.2 L508.5 384.7 L473.6 389.1Z" fill="#fbd5d0"/><path d="M321.0 406.5 L334.1 404.3 L334.1 437.9 L321.0 437.9Z" fill="#ebdbe8"/><path d="M451.8 95.9 L506.3 85.0 L517.2 95.9 L517.2 128.7 L488.9 130.8 L478.0 113.4Z" fill="#f3d7d8"/><path d="M482.4 93.8 L506.3 91.6 L506.3 109.0 L484.5 111.2Z" fill="#ebdbe8"/><path d="M355.9 78.5 L377.7 80.7 L375.5 95.9 L358.1 93.8Z" fill="#fbd5d0"/><path d="M642.0 196.2 L621.9 202.8 L621.9 218.9 L642.0 218.9Z" fill="#fbd5d0"/><path d="M412.6 258.2 L436.6 258.2 L436.6 280.1 L414.8 277.9Z" fill="#aacbaf"/><path d="M257.3 343.3 L279.1 341.1 L281.3 360.7 L257.3 360.7Z" fill="#9fe3c6"/><path d="M290.0 371.6 L314.0 371.6 L314.0 389.1 L290.0 389.1Z" fill="#f6dcd8"/><path d="M28.3 341.1 C30.9 338.9 37.8 329.5 43.6 328.0 C49.4 326.6 59.6 328.8 63.2 332.4 C66.9 336.0 67.2 343.3 65.4 349.8 C63.6 356.4 57.8 368.4 52.3 371.6 C46.9 374.9 36.7 374.5 32.7 369.5 C28.7 364.4 29.1 345.8 28.3 341.1Z" fill="#aad3df"/><path d="M49.1 295.3 C52.5 294.8 65.4 288.8 69.8 292.0 C74.1 295.3 77.2 309.5 75.2 314.9 C73.2 320.4 62.3 325.5 57.8 324.8 C53.2 324.0 49.4 315.5 48.0 310.6 C46.5 305.7 48.9 297.9 49.1 295.3Z" fill="#aad3df"/><path d="M10.9 358.6 C14.2 360.7 25.1 365.8 30.5 371.6 C36.0 377.5 42.9 386.2 43.6 393.4 C44.3 400.7 40.0 412.3 34.9 415.2 C29.8 418.2 17.8 416.0 13.1 410.9 C8.4 405.8 6.9 393.4 6.5 384.7 C6.2 376.0 10.2 362.9 10.9 358.6Z" fill="#aad3df"/><path d="M65.4 358.6 C69.1 357.1 79.2 349.8 87.2 349.8 C95.2 349.8 109.8 354.2 113.4 358.6 C117.0 362.9 114.1 371.6 109.0 376.0 C103.9 380.4 90.1 384.7 82.9 384.7 C75.6 384.7 68.3 380.4 65.4 376.0 C62.5 371.6 65.4 361.5 65.4 358.6Z" fill="#aad3df"/><path d="M43.6 391.3 C46.9 390.9 59.2 386.9 63.2 389.1 C67.2 391.3 70.3 400.7 67.6 404.3 C64.9 408.0 50.9 413.1 46.9 410.9 C42.9 408.7 44.2 394.5 43.6 391.3Z" fill="#c6c6c6"/><path d="M130.8 397.8 C134.1 397.8 147.2 394.9 150.5 397.8 C153.7 400.7 153.4 412.3 150.5 415.2 C147.6 418.2 136.3 418.2 133.0 415.2 C129.7 412.3 131.2 400.7 130.8 397.8Z" fill="#aad3df"/><path d="M560.9 210.4 C563.8 208.6 571.0 202.2 578.3 199.5 C585.6 196.8 596.5 197.2 604.5 194.1 C612.5 191.0 620.8 185.7 626.3 181.0 C631.7 176.3 634.3 170.8 637.2 165.7 C640.1 160.6 642.6 153.0 643.7 150.5" fill="none" stroke="#aad3df" stroke-width="4" stroke-linecap="round"/><path d="M560.9 210.4 C553.6 211.8 524.5 217.5 517.2 218.9 C510.0 220.4 522.3 217.5 517.2 219.0 C512.2 220.5 496.2 227.4 486.7 227.7 C477.3 228.1 470.0 222.6 460.6 221.2 C451.1 219.7 435.1 219.4 430.0 219.0" fill="none" stroke="#aad3df" stroke-width="2.5"/><path d="M393.0 247.3 C388.2 247.2 374.4 245.5 364.6 246.3 C354.8 247.0 341.5 250.1 334.1 251.7 C326.6 253.3 322.3 255.3 319.9 256.1" fill="none" stroke="#aad3df" stroke-width="2"/><path d="M250.8 234.3 C245.3 236.1 227.9 242.3 218.1 245.2 C208.2 248.1 200.6 249.9 191.9 251.7 C183.2 253.5 172.3 254.3 165.7 256.1 C159.2 257.9 162.1 259.7 152.6 262.6 C143.2 265.5 116.3 271.7 109.0 273.5" fill="none" stroke="#aad3df" stroke-width="2"/><path d="M360.2 251.7 L412.6 240.8 L473.6 234.3 L517.2 232.1 L517.2 240.8 L473.6 247.3 L416.9 253.9 L364.6 262.6Z" fill="#c6c5c5"/><g fill="none" stroke="#6f9fdc" stroke-width="1" stroke-linecap="round" stroke-linejoin="round" stroke-dasharray="1 2"><path d="M300.9 -1.1 C301.6 4.5 305.3 18.0 305.3 32.7 C305.3 47.4 301.6 72.3 300.9 87.2 C300.2 102.1 297.3 113.4 300.9 122.1 C304.6 130.8 319.1 136.6 322.7 139.6"/><path d="M239.9 240.8 C232.6 242.3 210.1 246.3 196.2 249.5 C182.4 252.8 175.2 255.7 157.0 260.4 C138.8 265.2 104.3 272.8 87.2 277.9 C70.1 283.0 63.6 284.4 54.5 291.0 C45.4 297.5 37.4 305.5 32.7 317.1 C28.0 328.8 28.0 346.2 26.2 360.7 C24.3 375.3 24.0 391.3 21.8 404.3 C19.6 417.4 14.5 433.4 13.1 439.2"/><path d="M319.9 135.2 C321.5 136.6 328.8 139.6 329.7 143.9 C330.6 148.3 326.1 158.5 325.4 161.4"/><path d="M319.9 245.2 C327.4 245.3 352.4 245.9 364.6 246.3 C376.8 246.6 388.2 247.2 393.0 247.3"/><path d="M460.6 221.2 C470.0 221.9 504.2 226.1 517.2 225.5 C530.3 225.0 535.4 219.2 539.1 217.9"/><path d="M539.1 100.3 C544.5 98.9 561.6 93.8 571.8 91.6 C581.9 89.4 595.4 87.9 600.1 87.2"/></g><g fill="none" stroke="#cfcfcf" stroke-width="2.2" stroke-linecap="round" stroke-linejoin="round"><path d="M28.3 26.2 C34.5 25.8 54.9 21.1 65.4 24.0 C76.0 26.9 82.9 37.4 91.6 43.6 C100.3 49.8 108.3 57.4 117.7 61.1 C127.2 64.7 139.6 63.6 148.3 65.4 C157.0 67.2 165.7 66.9 170.1 72.0 C174.4 77.0 171.5 90.5 174.4 95.9 C177.4 101.4 185.3 103.2 187.5 104.7"/><path d="M139.6 0.0 C139.9 3.6 139.6 17.4 141.7 21.8 C143.9 26.2 150.8 18.9 152.6 26.2 C154.5 33.4 152.6 58.9 152.6 65.4"/><path d="M0.0 65.4 C4.4 66.5 16.7 71.2 26.2 72.0 C35.6 72.7 51.6 70.1 56.7 69.8"/><path d="M13.1 174.4 C14.2 170.8 14.5 159.9 19.6 152.6 C24.7 145.4 39.6 134.5 43.6 130.8"/><path d="M91.6 161.4 C91.9 163.5 95.2 170.1 93.8 174.4 C92.3 178.8 84.7 185.3 82.9 187.5"/><path d="M122.1 133.0 C122.8 136.3 125.0 147.9 126.5 152.6 C127.9 157.4 130.1 159.9 130.8 161.4"/><path d="M571.8 26.2 C573.6 30.9 577.2 43.6 582.7 54.5 C588.1 65.4 599.4 83.2 604.5 91.6 C609.6 99.9 611.7 102.5 613.2 104.7"/><path d="M508.5 82.9 C513.6 85.8 531.8 93.8 539.1 100.3 C546.3 106.8 550.0 118.5 552.1 122.1"/><path d="M0.0 323.7 C3.6 326.6 19.6 333.1 21.8 341.1 C24.0 349.1 16.0 362.9 13.1 371.6 C10.2 380.4 5.8 389.8 4.4 393.4"/><path d="M21.8 275.7 C24.7 280.8 38.2 296.8 39.2 306.2 C40.3 315.7 30.2 328.0 28.3 332.4"/><path d="M157.0 277.9 C151.2 280.4 132.3 287.0 122.1 293.1 C111.9 299.3 103.6 306.9 95.9 314.9 C88.3 322.9 76.3 332.4 76.3 341.1 C76.3 349.8 88.3 362.2 95.9 367.3 C103.6 372.4 117.7 370.9 122.1 371.6"/><path d="M65.4 269.2 C69.8 270.6 82.1 277.1 91.6 277.9 C101.0 278.6 111.9 276.4 122.1 273.5 C132.3 270.6 147.6 262.6 152.6 260.4"/><path d="M63.2 240.8 C64.7 244.4 72.0 258.2 72.0 262.6 C72.0 267.0 64.7 266.2 63.2 267.0"/><path d="M486.7 406.5 C488.9 400.7 496.2 382.5 499.8 371.6 C503.4 360.7 507.1 346.2 508.5 341.1"/><path d="M578.3 288.8 C582.7 288.4 593.6 287.3 604.5 286.6 C615.4 285.9 637.2 284.8 643.7 284.4"/><path d="M573.9 314.9 L604.5 312.8"/><path d="M386.4 410.9 L388.6 439.2"/><path d="M517.2 288.8 C519.4 292.4 528.2 303.3 530.3 310.6 C532.5 317.9 530.3 328.8 530.3 332.4"/><path d="M473.6 297.5 L517.2 295.3"/><path d="M482.4 258.2 L512.9 284.4"/></g><g fill="none" stroke="#ffffff" stroke-width="1.5" stroke-linecap="round" stroke-linejoin="round"><path d="M28.3 26.2 C34.5 25.8 54.9 21.1 65.4 24.0 C76.0 26.9 82.9 37.4 91.6 43.6 C100.3 49.8 108.3 57.4 117.7 61.1 C127.2 64.7 139.6 63.6 148.3 65.4 C157.0 67.2 165.7 66.9 170.1 72.0 C174.4 77.0 171.5 90.5 174.4 95.9 C177.4 101.4 185.3 103.2 187.5 104.7"/><path d="M139.6 0.0 C139.9 3.6 139.6 17.4 141.7 21.8 C143.9 26.2 150.8 18.9 152.6 26.2 C154.5 33.4 152.6 58.9 152.6 65.4"/><path d="M0.0 65.4 C4.4 66.5 16.7 71.2 26.2 72.0 C35.6 72.7 51.6 70.1 56.7 69.8"/><path d="M13.1 174.4 C14.2 170.8 14.5 159.9 19.6 152.6 C24.7 145.4 39.6 134.5 43.6 130.8"/><path d="M91.6 161.4 C91.9 163.5 95.2 170.1 93.8 174.4 C92.3 178.8 84.7 185.3 82.9 187.5"/><path d="M122.1 133.0 C122.8 136.3 125.0 147.9 126.5 152.6 C127.9 157.4 130.1 159.9 130.8 161.4"/><path d="M571.8 26.2 C573.6 30.9 577.2 43.6 582.7 54.5 C588.1 65.4 599.4 83.2 604.5 91.6 C609.6 99.9 611.7 102.5 613.2 104.7"/><path d="M508.5 82.9 C513.6 85.8 531.8 93.8 539.1 100.3 C546.3 106.8 550.0 118.5 552.1 122.1"/><path d="M0.0 323.7 C3.6 326.6 19.6 333.1 21.8 341.1 C24.0 349.1 16.0 362.9 13.1 371.6 C10.2 380.4 5.8 389.8 4.4 393.4"/><path d="M21.8 275.7 C24.7 280.8 38.2 296.8 39.2 306.2 C40.3 315.7 30.2 328.0 28.3 332.4"/><path d="M157.0 277.9 C151.2 280.4 132.3 287.0 122.1 293.1 C111.9 299.3 103.6 306.9 95.9 314.9 C88.3 322.9 76.3 332.4 76.3 341.1 C76.3 349.8 88.3 362.2 95.9 367.3 C103.6 372.4 117.7 370.9 122.1 371.6"/><path d="M65.4 269.2 C69.8 270.6 82.1 277.1 91.6 277.9 C101.0 278.6 111.9 276.4 122.1 273.5 C132.3 270.6 147.6 262.6 152.6 260.4"/><path d="M63.2 240.8 C64.7 244.4 72.0 258.2 72.0 262.6 C72.0 267.0 64.7 266.2 63.2 267.0"/><path d="M486.7 406.5 C488.9 400.7 496.2 382.5 499.8 371.6 C503.4 360.7 507.1 346.2 508.5 341.1"/><path d="M578.3 288.8 C582.7 288.4 593.6 287.3 604.5 286.6 C615.4 285.9 637.2 284.8 643.7 284.4"/><path d="M573.9 314.9 L604.5 312.8"/><path d="M386.4 410.9 L388.6 439.2"/><path d="M517.2 288.8 C519.4 292.4 528.2 303.3 530.3 310.6 C532.5 317.9 530.3 328.8 530.3 332.4"/><path d="M473.6 297.5 L517.2 295.3"/><path d="M482.4 258.2 L512.9 284.4"/></g><g fill="none" stroke="#777" stroke-width="1.6" stroke-linecap="round" stroke-linejoin="round"><path d="M322.7 32.7 C318.0 37.4 302.7 52.0 294.4 61.1 C286.0 70.1 277.3 77.0 272.6 87.2 C267.8 97.4 267.8 109.4 266.0 122.1 C264.2 134.8 264.2 153.0 261.7 163.5 C259.1 174.1 256.2 178.4 250.8 185.3 C245.3 192.3 234.4 199.2 229.0 205.0 C223.5 210.8 219.9 217.7 218.1 220.2"/><path d="M319.9 34.9 C322.3 32.7 328.8 26.2 334.1 21.8 C339.4 17.4 342.8 12.5 351.5 8.7 C360.2 4.9 380.6 0.5 386.4 -1.1"/><path d="M-1.1 223.4 C2.7 224.5 12.5 228.4 21.8 229.9 C31.1 231.4 43.6 232.4 54.5 232.1 C65.4 231.7 74.5 229.5 87.2 227.7 C99.9 225.9 119.9 222.7 130.8 221.2 C141.7 219.6 149.0 218.8 152.6 218.3"/><path d="M218.1 217.9 C218.1 221.7 216.2 233.4 218.1 240.8 C219.9 248.3 223.5 256.8 229.0 262.6 C234.4 268.4 243.5 273.7 250.8 275.7 C258.0 277.7 265.3 275.7 272.6 274.6 C279.8 273.5 286.0 270.8 294.4 269.2 C302.7 267.5 318.0 265.5 322.7 264.8"/><path d="M261.7 282.2 C258.0 286.2 247.1 297.5 239.9 306.2 C232.6 314.9 224.2 323.7 218.1 334.6 C211.9 345.5 207.2 360.0 202.8 371.6 C198.4 383.3 194.8 393.1 191.9 404.3 C189.0 415.6 186.4 433.4 185.3 439.2"/><path d="M319.9 268.1 C327.4 266.1 349.9 259.5 364.6 256.1 C379.3 252.6 390.1 250.3 408.2 247.3 C426.4 244.4 451.8 241.9 473.6 238.6 C495.4 235.4 524.5 230.6 539.1 227.7 C553.6 224.8 553.6 222.8 560.9 221.2 C568.1 219.5 579.0 218.5 582.7 217.9"/><path d="M440.9 258.2 C444.6 260.8 456.6 265.5 462.7 273.5 C468.9 281.5 474.0 295.3 478.0 306.2 C482.0 317.1 483.1 326.2 486.7 338.9 C490.4 351.7 495.4 365.8 499.8 382.5 C504.2 399.3 510.7 429.8 512.9 439.2"/></g><g fill="none" stroke="#ddd" stroke-width="0.8" stroke-dasharray="3 3"><path d="M322.7 32.7 C318.0 37.4 302.7 52.0 294.4 61.1 C286.0 70.1 277.3 77.0 272.6 87.2 C267.8 97.4 267.8 109.4 266.0 122.1 C264.2 134.8 264.2 153.0 261.7 163.5 C259.1 174.1 256.2 178.4 250.8 185.3 C245.3 192.3 234.4 199.2 229.0 205.0 C223.5 210.8 219.9 217.7 218.1 220.2"/><path d="M319.9 34.9 C322.3 32.7 328.8 26.2 334.1 21.8 C339.4 17.4 342.8 12.5 351.5 8.7 C360.2 4.9 380.6 0.5 386.4 -1.1"/><path d="M-1.1 223.4 C2.7 224.5 12.5 228.4 21.8 229.9 C31.1 231.4 43.6 232.4 54.5 232.1 C65.4 231.7 74.5 229.5 87.2 227.7 C99.9 225.9 119.9 222.7 130.8 221.2 C141.7 219.6 149.0 218.8 152.6 218.3"/><path d="M218.1 217.9 C218.1 221.7 216.2 233.4 218.1 240.8 C219.9 248.3 223.5 256.8 229.0 262.6 C234.4 268.4 243.5 273.7 250.8 275.7 C258.0 277.7 265.3 275.7 272.6 274.6 C279.8 273.5 286.0 270.8 294.4 269.2 C302.7 267.5 318.0 265.5 322.7 264.8"/><path d="M261.7 282.2 C258.0 286.2 247.1 297.5 239.9 306.2 C232.6 314.9 224.2 323.7 218.1 334.6 C211.9 345.5 207.2 360.0 202.8 371.6 C198.4 383.3 194.8 393.1 191.9 404.3 C189.0 415.6 186.4 433.4 185.3 439.2"/><path d="M319.9 268.1 C327.4 266.1 349.9 259.5 364.6 256.1 C379.3 252.6 390.1 250.3 408.2 247.3 C426.4 244.4 451.8 241.9 473.6 238.6 C495.4 235.4 524.5 230.6 539.1 227.7 C553.6 224.8 553.6 222.8 560.9 221.2 C568.1 219.5 579.0 218.5 582.7 217.9"/><path d="M440.9 258.2 C444.6 260.8 456.6 265.5 462.7 273.5 C468.9 281.5 474.0 295.3 478.0 306.2 C482.0 317.1 483.1 326.2 486.7 338.9 C490.4 351.7 495.4 365.8 499.8 382.5 C504.2 399.3 510.7 429.8 512.9 439.2"/></g><g fill="none" stroke="#8a8a8a" stroke-width="1.1" stroke-linecap="round" stroke-linejoin="round"><path d="M438.7 159.2 C440.9 159.4 446.0 162.1 451.8 160.3 C457.6 158.5 467.1 152.8 473.6 148.3 C480.2 143.7 484.5 136.1 491.1 133.0 C497.6 129.9 507.8 133.4 512.9 129.7 C518.0 126.1 518.7 116.1 521.6 111.2 C524.5 106.3 528.9 102.1 530.3 100.3"/><path d="M176.6 164.6 C183.5 164.4 205.7 163.9 218.1 163.5 C230.4 163.2 243.9 161.7 250.8 162.5 C257.7 163.2 258.0 167.0 259.5 167.9"/><path d="M410.4 354.2 C413.7 354.4 424.6 353.1 430.0 355.3 C435.5 357.5 438.7 363.1 443.1 367.3 C447.5 371.5 451.5 377.1 456.2 380.4 C460.9 383.6 468.9 385.8 471.5 386.9"/></g><g fill="none" stroke="#c9cf8a" stroke-width="3.2" stroke-linecap="round" stroke-linejoin="round"><path d="M207.2 -1.1 C207.5 2.7 207.5 14.4 209.3 21.8 C211.1 29.3 213.0 33.4 218.1 43.6 C223.1 53.8 232.6 72.0 239.9 82.9 C247.1 93.8 258.0 104.7 261.7 109.0"/><path d="M276.9 -1.1 C276.6 6.4 274.7 28.9 274.7 43.6 C274.7 58.3 275.1 72.7 276.9 87.2 C278.7 101.8 284.2 123.6 285.7 130.8"/><path d="M-1.1 176.6 C10.0 177.4 43.4 178.4 65.4 181.0 C87.4 183.5 110.8 189.7 130.8 191.9 C150.8 194.1 170.8 191.9 185.3 194.1 C199.9 196.2 212.6 203.2 218.1 205.0"/><path d="M189.7 148.3 C190.1 152.6 190.8 166.4 191.9 174.4 C193.0 182.4 195.5 192.6 196.2 196.2"/><path d="M250.8 76.3 C254.4 76.0 267.1 74.9 272.6 74.1 C278.0 73.4 281.7 72.3 283.5 72.0"/><path d="M261.7 218.9 C263.5 217.3 265.3 215.3 272.6 209.3 C279.8 203.4 297.2 188.3 305.3 183.2 C313.3 178.1 318.4 179.5 321.0 178.8"/><path d="M643.7 91.6 C640.8 91.6 631.7 89.4 626.3 91.6 C620.8 93.8 618.3 101.0 611.0 104.7 C603.7 108.3 591.0 110.1 582.7 113.4 C574.3 116.7 568.1 121.4 560.9 124.3 C553.6 127.2 545.9 129.6 539.1 130.8 C532.2 132.1 523.1 131.7 519.9 131.9"/><path d="M506.3 80.7 C511.8 76.3 530.0 61.8 539.1 54.5 C548.1 47.2 553.6 44.0 560.9 37.1 C568.1 30.2 576.1 19.4 582.7 13.1 C589.2 6.7 597.2 1.3 600.1 -1.1"/><path d="M319.9 209.3 C331.0 208.8 364.4 206.8 386.4 206.1 C408.4 205.3 430.0 205.2 451.8 205.0 C473.6 204.8 495.4 205.2 517.2 205.0 C539.1 204.8 561.6 204.4 582.7 203.9 C603.7 203.3 633.5 202.1 643.7 201.7"/><path d="M403.9 130.8 C404.2 134.5 404.6 145.4 406.0 152.6 C407.5 159.9 410.4 165.7 412.6 174.4 C414.8 183.2 418.0 199.9 419.1 205.0"/><path d="M412.6 176.6 C419.1 174.1 441.7 165.7 451.8 161.4 C462.0 157.0 467.5 154.1 473.6 150.5 C479.8 146.8 485.6 142.8 488.9 139.6 C492.2 136.3 493.6 134.8 493.3 130.8 C492.9 126.8 490.0 120.3 486.7 115.6 C483.5 110.8 475.8 104.7 473.6 102.5"/><path d="M611.0 104.7 C610.6 109.0 611.7 122.1 608.8 130.8 C605.9 139.6 597.2 149.7 593.6 157.0 C589.9 164.3 586.7 167.9 587.0 174.4 C587.4 181.0 593.6 188.6 595.7 196.2 C597.9 203.9 599.4 216.2 600.1 220.2"/><path d="M547.8 133.0 C548.5 136.3 550.0 146.5 552.1 152.6 C554.3 158.8 558.3 163.9 560.9 170.1 C563.4 176.3 565.9 183.9 567.4 189.7 C568.9 195.5 569.2 202.4 569.6 205.0"/><path d="M336.3 159.2 C337.7 161.7 342.1 168.3 345.0 174.4 C347.9 180.6 351.5 188.6 353.7 196.2 C355.9 203.9 357.3 216.2 358.1 220.2"/><path d="M369.0 161.4 C370.4 165.4 375.2 178.1 377.7 185.3 C380.2 192.6 383.1 201.7 384.2 205.0"/><path d="M385.3 34.9 C385.1 31.3 384.1 19.1 384.2 13.1 C384.4 7.1 386.1 1.3 386.4 -1.1"/><path d="M488.9 139.6 C489.3 143.2 492.9 153.4 491.1 161.4 C489.3 169.4 481.3 180.3 478.0 187.5 C474.7 194.8 472.5 202.1 471.5 205.0"/><path d="M41.4 439.2 C49.1 432.3 73.0 410.5 87.2 397.8 C101.4 385.1 108.7 369.5 126.5 362.9 C144.3 356.4 178.8 359.3 194.1 358.6 C209.3 357.8 214.1 358.6 218.1 358.6"/><path d="M152.6 277.9 C158.8 274.2 178.8 260.1 189.7 256.1 C200.6 252.1 213.3 254.3 218.1 253.9"/><path d="M189.7 256.1 C190.8 259.0 193.7 267.7 196.2 273.5 C198.8 279.3 197.7 287.3 205.0 291.0 C212.2 294.6 234.0 294.6 239.9 295.3"/><path d="M205.0 291.0 C209.0 288.1 223.1 276.8 229.0 273.5 C234.8 270.2 238.0 271.7 239.9 271.3"/><path d="M252.9 341.1 C258.0 341.5 271.8 342.7 283.5 343.3 C295.1 343.8 316.2 344.2 322.7 344.4"/><path d="M276.9 343.3 C277.3 345.8 271.5 356.0 279.1 358.6 C286.7 361.1 315.5 358.6 322.7 358.6"/><path d="M248.6 217.9 L250.8 236.4"/><path d="M319.9 332.4 C329.2 332.6 357.2 333.5 375.5 333.5 C393.9 333.5 418.8 332.9 430.0 332.4 C441.3 331.8 438.7 333.1 443.1 330.2 C447.5 327.3 454.0 317.5 456.2 314.9"/><path d="M377.7 273.5 C383.5 275.0 401.7 277.5 412.6 282.2 C423.5 287.0 435.1 296.4 443.1 301.9 C451.1 307.3 452.6 310.6 460.6 314.9 C468.6 319.3 483.1 323.7 491.1 328.0 C499.1 332.4 504.2 333.8 508.5 341.1 C512.9 348.4 512.2 364.0 517.2 371.6 C522.3 379.3 530.7 382.9 539.1 386.9 C547.4 390.9 558.3 393.4 567.4 395.6 C576.5 397.8 583.8 397.4 593.6 400.0 C603.4 402.5 617.9 407.6 626.3 410.9 C634.6 414.2 640.8 418.2 643.7 419.6"/><path d="M563.0 273.5 C565.6 276.1 576.5 281.9 578.3 288.8 C580.1 295.7 578.7 308.4 573.9 314.9 C569.2 321.5 555.8 323.7 550.0 328.0 C544.1 332.4 541.2 337.5 539.1 341.1 C536.9 344.7 537.2 348.4 536.9 349.8"/><path d="M371.2 336.7 C370.8 340.7 369.0 348.4 369.0 360.7 C369.0 373.1 372.2 397.8 371.2 410.9 C370.1 424.0 363.9 434.5 362.4 439.2"/><path d="M319.9 358.6 L371.2 360.7"/><path d="M351.5 217.9 L351.5 240.8"/><path d="M319.9 376.0 C329.2 376.0 356.4 375.6 375.5 376.0 C394.6 376.4 424.6 377.8 434.4 378.2"/></g><g fill="none" stroke="#f7fabf" stroke-width="2.3" stroke-linecap="round" stroke-linejoin="round"><path d="M207.2 -1.1 C207.5 2.7 207.5 14.4 209.3 21.8 C211.1 29.3 213.0 33.4 218.1 43.6 C223.1 53.8 232.6 72.0 239.9 82.9 C247.1 93.8 258.0 104.7 261.7 109.0"/><path d="M276.9 -1.1 C276.6 6.4 274.7 28.9 274.7 43.6 C274.7 58.3 275.1 72.7 276.9 87.2 C278.7 101.8 284.2 123.6 285.7 130.8"/><path d="M-1.1 176.6 C10.0 177.4 43.4 178.4 65.4 181.0 C87.4 183.5 110.8 189.7 130.8 191.9 C150.8 194.1 170.8 191.9 185.3 194.1 C199.9 196.2 212.6 203.2 218.1 205.0"/><path d="M189.7 148.3 C190.1 152.6 190.8 166.4 191.9 174.4 C193.0 182.4 195.5 192.6 196.2 196.2"/><path d="M250.8 76.3 C254.4 76.0 267.1 74.9 272.6 74.1 C278.0 73.4 281.7 72.3 283.5 72.0"/><path d="M261.7 218.9 C263.5 217.3 265.3 215.3 272.6 209.3 C279.8 203.4 297.2 188.3 305.3 183.2 C313.3 178.1 318.4 179.5 321.0 178.8"/><path d="M643.7 91.6 C640.8 91.6 631.7 89.4 626.3 91.6 C620.8 93.8 618.3 101.0 611.0 104.7 C603.7 108.3 591.0 110.1 582.7 113.4 C574.3 116.7 568.1 121.4 560.9 124.3 C553.6 127.2 545.9 129.6 539.1 130.8 C532.2 132.1 523.1 131.7 519.9 131.9"/><path d="M506.3 80.7 C511.8 76.3 530.0 61.8 539.1 54.5 C548.1 47.2 553.6 44.0 560.9 37.1 C568.1 30.2 576.1 19.4 582.7 13.1 C589.2 6.7 597.2 1.3 600.1 -1.1"/><path d="M319.9 209.3 C331.0 208.8 364.4 206.8 386.4 206.1 C408.4 205.3 430.0 205.2 451.8 205.0 C473.6 204.8 495.4 205.2 517.2 205.0 C539.1 204.8 561.6 204.4 582.7 203.9 C603.7 203.3 633.5 202.1 643.7 201.7"/><path d="M403.9 130.8 C404.2 134.5 404.6 145.4 406.0 152.6 C407.5 159.9 410.4 165.7 412.6 174.4 C414.8 183.2 418.0 199.9 419.1 205.0"/><path d="M412.6 176.6 C419.1 174.1 441.7 165.7 451.8 161.4 C462.0 157.0 467.5 154.1 473.6 150.5 C479.8 146.8 485.6 142.8 488.9 139.6 C492.2 136.3 493.6 134.8 493.3 130.8 C492.9 126.8 490.0 120.3 486.7 115.6 C483.5 110.8 475.8 104.7 473.6 102.5"/><path d="M611.0 104.7 C610.6 109.0 611.7 122.1 608.8 130.8 C605.9 139.6 597.2 149.7 593.6 157.0 C589.9 164.3 586.7 167.9 587.0 174.4 C587.4 181.0 593.6 188.6 595.7 196.2 C597.9 203.9 599.4 216.2 600.1 220.2"/><path d="M547.8 133.0 C548.5 136.3 550.0 146.5 552.1 152.6 C554.3 158.8 558.3 163.9 560.9 170.1 C563.4 176.3 565.9 183.9 567.4 189.7 C568.9 195.5 569.2 202.4 569.6 205.0"/><path d="M336.3 159.2 C337.7 161.7 342.1 168.3 345.0 174.4 C347.9 180.6 351.5 188.6 353.7 196.2 C355.9 203.9 357.3 216.2 358.1 220.2"/><path d="M369.0 161.4 C370.4 165.4 375.2 178.1 377.7 185.3 C380.2 192.6 383.1 201.7 384.2 205.0"/><path d="M385.3 34.9 C385.1 31.3 384.1 19.1 384.2 13.1 C384.4 7.1 386.1 1.3 386.4 -1.1"/><path d="M488.9 139.6 C489.3 143.2 492.9 153.4 491.1 161.4 C489.3 169.4 481.3 180.3 478.0 187.5 C474.7 194.8 472.5 202.1 471.5 205.0"/><path d="M41.4 439.2 C49.1 432.3 73.0 410.5 87.2 397.8 C101.4 385.1 108.7 369.5 126.5 362.9 C144.3 356.4 178.8 359.3 194.1 358.6 C209.3 357.8 214.1 358.6 218.1 358.6"/><path d="M152.6 277.9 C158.8 274.2 178.8 260.1 189.7 256.1 C200.6 252.1 213.3 254.3 218.1 253.9"/><path d="M189.7 256.1 C190.8 259.0 193.7 267.7 196.2 273.5 C198.8 279.3 197.7 287.3 205.0 291.0 C212.2 294.6 234.0 294.6 239.9 295.3"/><path d="M205.0 291.0 C209.0 288.1 223.1 276.8 229.0 273.5 C234.8 270.2 238.0 271.7 239.9 271.3"/><path d="M252.9 341.1 C258.0 341.5 271.8 342.7 283.5 343.3 C295.1 343.8 316.2 344.2 322.7 344.4"/><path d="M276.9 343.3 C277.3 345.8 271.5 356.0 279.1 358.6 C286.7 361.1 315.5 358.6 322.7 358.6"/><path d="M248.6 217.9 L250.8 236.4"/><path d="M319.9 332.4 C329.2 332.6 357.2 333.5 375.5 333.5 C393.9 333.5 418.8 332.9 430.0 332.4 C441.3 331.8 438.7 333.1 443.1 330.2 C447.5 327.3 454.0 317.5 456.2 314.9"/><path d="M377.7 273.5 C383.5 275.0 401.7 277.5 412.6 282.2 C423.5 287.0 435.1 296.4 443.1 301.9 C451.1 307.3 452.6 310.6 460.6 314.9 C468.6 319.3 483.1 323.7 491.1 328.0 C499.1 332.4 504.2 333.8 508.5 341.1 C512.9 348.4 512.2 364.0 517.2 371.6 C522.3 379.3 530.7 382.9 539.1 386.9 C547.4 390.9 558.3 393.4 567.4 395.6 C576.5 397.8 583.8 397.4 593.6 400.0 C603.4 402.5 617.9 407.6 626.3 410.9 C634.6 414.2 640.8 418.2 643.7 419.6"/><path d="M563.0 273.5 C565.6 276.1 576.5 281.9 578.3 288.8 C580.1 295.7 578.7 308.4 573.9 314.9 C569.2 321.5 555.8 323.7 550.0 328.0 C544.1 332.4 541.2 337.5 539.1 341.1 C536.9 344.7 537.2 348.4 536.9 349.8"/><path d="M371.2 336.7 C370.8 340.7 369.0 348.4 369.0 360.7 C369.0 373.1 372.2 397.8 371.2 410.9 C370.1 424.0 363.9 434.5 362.4 439.2"/><path d="M319.9 358.6 L371.2 360.7"/><path d="M351.5 217.9 L351.5 240.8"/><path d="M319.9 376.0 C329.2 376.0 356.4 375.6 375.5 376.0 C394.6 376.4 424.6 377.8 434.4 378.2"/></g><g fill="none" stroke="#d8a860" stroke-width="3.6" stroke-linecap="round" stroke-linejoin="round"><path d="M-1.1 21.8 C0.5 20.4 3.8 16.0 8.7 13.1 C13.6 10.2 15.3 6.4 28.3 4.4 C41.4 2.4 62.9 1.9 87.2 1.1 C111.6 0.3 159.9 -0.4 174.4 -0.7"/><path d="M321.0 109.0 C318.4 110.5 311.5 114.5 305.3 117.7 C299.0 121.0 290.7 125.7 283.5 128.7 C276.2 131.6 272.6 133.0 261.7 135.2 C250.8 137.4 230.8 139.9 218.1 141.7 C205.3 143.6 194.1 145.6 185.3 146.1 C176.6 146.6 169.0 145.2 165.7 145.0"/><path d="M258.4 95.9 C260.0 100.3 264.4 113.4 268.2 122.1 C272.0 130.8 277.3 140.3 281.3 148.3 C285.3 156.3 292.2 164.6 292.2 170.1 C292.2 175.5 284.6 176.6 281.3 181.0 C278.0 185.3 274.4 189.7 272.6 196.2 C270.8 202.8 270.8 216.2 270.4 220.2"/><path d="M152.6 174.4 C156.3 176.6 167.2 183.9 174.4 187.5 C181.7 191.2 189.0 193.3 196.2 196.2 C203.5 199.2 210.8 202.4 218.1 205.0 C225.3 207.5 232.6 209.0 239.9 211.5 C247.1 214.1 258.0 218.8 261.7 220.2"/><path d="M292.2 170.1 C294.4 171.5 300.5 177.0 305.3 178.8 C310.1 180.6 318.4 180.6 321.0 181.0"/><path d="M319.9 106.8 C322.3 107.2 329.2 106.5 334.1 109.0 C339.0 111.6 345.7 119.2 349.3 122.1 C353.0 125.0 348.6 125.0 355.9 126.5 C363.2 127.9 385.0 130.2 393.0 130.8 C401.0 131.5 397.0 132.6 403.9 130.4 C410.8 128.2 422.8 122.8 434.4 117.7 C446.0 112.7 461.6 106.5 473.6 100.3 C485.6 94.1 502.7 86.9 506.3 80.7 C510.0 74.5 497.6 67.2 495.4 63.2 C493.3 59.2 493.6 57.8 493.3 56.7"/><path d="M506.3 80.7 C508.2 83.2 514.9 90.5 517.2 95.9 C519.6 101.4 520.1 107.6 520.5 113.4 C521.0 119.2 519.9 124.3 519.9 130.8 C519.9 137.4 520.3 145.4 520.5 152.6 C520.7 159.9 521.0 165.7 521.2 174.4 C521.4 183.2 521.5 199.9 521.6 205.0"/><path d="M403.9 130.4 C401.0 132.3 393.0 136.6 386.4 141.7 C379.9 146.9 371.9 155.5 364.6 161.4 C357.3 167.2 350.3 172.6 342.8 176.6 C335.4 180.6 323.7 183.9 319.9 185.3"/><path d="M385.3 34.9 C384.8 38.2 383.3 47.6 382.1 54.5 C380.8 61.4 379.9 68.3 377.7 76.3 C375.5 84.3 372.6 94.1 369.0 102.5 C365.3 110.8 359.5 119.9 355.9 126.5 C352.3 133.0 350.4 136.3 347.2 141.7 C343.9 147.2 338.1 156.3 336.3 159.2"/><path d="M8.7 282.2 C9.4 281.1 9.1 279.3 13.1 275.7 C17.1 272.1 24.0 263.7 32.7 260.4 C41.4 257.2 55.6 257.0 65.4 256.1 C75.2 255.2 83.6 256.4 91.6 255.0 C99.6 253.5 103.2 249.3 113.4 247.3 C123.6 245.3 140.6 244.3 152.6 243.0 C164.6 241.7 174.4 240.3 185.3 239.7 C196.2 239.2 207.2 240.3 218.1 239.7 C229.0 239.2 239.9 237.7 250.8 236.4 C261.7 235.2 271.5 233.5 283.5 232.1 C295.5 230.6 316.2 228.4 322.7 227.7"/><path d="M281.3 217.9 C281.3 227.2 284.6 259.5 281.3 273.5 C278.0 287.5 268.6 295.3 261.7 301.9 C254.8 308.4 247.1 309.1 239.9 312.8 C232.6 316.4 224.2 319.7 218.1 323.7 C211.9 327.7 207.2 330.9 202.8 336.7 C198.4 342.6 195.2 350.6 191.9 358.6 C188.6 366.6 186.1 375.3 183.2 384.7 C180.3 394.2 175.9 406.2 174.4 415.2 C173.0 424.3 174.4 435.2 174.4 439.2"/><path d="M314.0 269.2 C314.2 275.3 314.7 292.8 315.1 306.2 C315.5 319.7 316.0 336.0 316.2 349.8 C316.4 363.6 316.0 378.2 316.2 389.1 C316.4 400.0 316.9 406.9 317.3 415.2 C317.6 423.6 318.2 435.2 318.4 439.2"/><path d="M244.2 217.9 C244.6 221.7 246.4 231.5 246.4 240.8 C246.4 250.1 243.9 264.4 244.2 273.5 C244.6 282.6 246.4 289.1 248.6 295.3 C250.8 301.5 255.9 308.0 257.3 310.6"/><path d="M257.3 312.8 C261.7 313.1 272.6 314.4 283.5 314.9 C294.4 315.5 316.2 315.9 322.7 316.0"/><path d="M242.0 395.6 C242.4 397.8 244.2 404.0 244.2 408.7 C244.2 413.4 242.8 418.9 242.0 424.0 C241.3 429.1 240.2 436.7 239.9 439.2"/><path d="M319.9 227.7 C327.4 227.5 347.0 227.0 364.6 226.6 C382.2 226.3 407.5 226.1 425.7 225.5 C443.8 225.0 458.4 223.9 473.6 223.4 C488.9 222.8 507.8 221.5 517.2 222.3 C526.7 223.0 526.7 224.6 530.3 227.7 C534.0 230.8 537.2 236.1 539.1 240.8 C540.9 245.5 539.1 251.7 541.2 256.1 C543.4 260.4 548.5 264.1 552.1 267.0 C555.8 269.9 561.2 272.4 563.0 273.5"/><path d="M319.9 240.8 C323.7 241.9 335.4 243.7 342.8 247.3 C350.3 251.0 357.3 255.3 364.6 262.6 C371.9 269.9 379.1 282.6 386.4 291.0 C393.7 299.3 401.7 305.9 408.2 312.8 C414.8 319.7 421.7 325.5 425.7 332.4 C429.7 339.3 430.4 347.7 432.2 354.2 C434.0 360.7 435.8 368.7 436.6 371.6"/><path d="M319.9 321.5 C323.7 321.1 335.4 321.8 342.8 319.3 C350.3 316.8 357.3 310.6 364.6 306.2 C371.9 301.9 382.8 295.3 386.4 293.1"/></g><g fill="none" stroke="#fcd6a4" stroke-width="2.7" stroke-linecap="round" stroke-linejoin="round"><path d="M-1.1 21.8 C0.5 20.4 3.8 16.0 8.7 13.1 C13.6 10.2 15.3 6.4 28.3 4.4 C41.4 2.4 62.9 1.9 87.2 1.1 C111.6 0.3 159.9 -0.4 174.4 -0.7"/><path d="M321.0 109.0 C318.4 110.5 311.5 114.5 305.3 117.7 C299.0 121.0 290.7 125.7 283.5 128.7 C276.2 131.6 272.6 133.0 261.7 135.2 C250.8 137.4 230.8 139.9 218.1 141.7 C205.3 143.6 194.1 145.6 185.3 146.1 C176.6 146.6 169.0 145.2 165.7 145.0"/><path d="M258.4 95.9 C260.0 100.3 264.4 113.4 268.2 122.1 C272.0 130.8 277.3 140.3 281.3 148.3 C285.3 156.3 292.2 164.6 292.2 170.1 C292.2 175.5 284.6 176.6 281.3 181.0 C278.0 185.3 274.4 189.7 272.6 196.2 C270.8 202.8 270.8 216.2 270.4 220.2"/><path d="M152.6 174.4 C156.3 176.6 167.2 183.9 174.4 187.5 C181.7 191.2 189.0 193.3 196.2 196.2 C203.5 199.2 210.8 202.4 218.1 205.0 C225.3 207.5 232.6 209.0 239.9 211.5 C247.1 214.1 258.0 218.8 261.7 220.2"/><path d="M292.2 170.1 C294.4 171.5 300.5 177.0 305.3 178.8 C310.1 180.6 318.4 180.6 321.0 181.0"/><path d="M319.9 106.8 C322.3 107.2 329.2 106.5 334.1 109.0 C339.0 111.6 345.7 119.2 349.3 122.1 C353.0 125.0 348.6 125.0 355.9 126.5 C363.2 127.9 385.0 130.2 393.0 130.8 C401.0 131.5 397.0 132.6 403.9 130.4 C410.8 128.2 422.8 122.8 434.4 117.7 C446.0 112.7 461.6 106.5 473.6 100.3 C485.6 94.1 502.7 86.9 506.3 80.7 C510.0 74.5 497.6 67.2 495.4 63.2 C493.3 59.2 493.6 57.8 493.3 56.7"/><path d="M506.3 80.7 C508.2 83.2 514.9 90.5 517.2 95.9 C519.6 101.4 520.1 107.6 520.5 113.4 C521.0 119.2 519.9 124.3 519.9 130.8 C519.9 137.4 520.3 145.4 520.5 152.6 C520.7 159.9 521.0 165.7 521.2 174.4 C521.4 183.2 521.5 199.9 521.6 205.0"/><path d="M403.9 130.4 C401.0 132.3 393.0 136.6 386.4 141.7 C379.9 146.9 371.9 155.5 364.6 161.4 C357.3 167.2 350.3 172.6 342.8 176.6 C335.4 180.6 323.7 183.9 319.9 185.3"/><path d="M385.3 34.9 C384.8 38.2 383.3 47.6 382.1 54.5 C380.8 61.4 379.9 68.3 377.7 76.3 C375.5 84.3 372.6 94.1 369.0 102.5 C365.3 110.8 359.5 119.9 355.9 126.5 C352.3 133.0 350.4 136.3 347.2 141.7 C343.9 147.2 338.1 156.3 336.3 159.2"/><path d="M8.7 282.2 C9.4 281.1 9.1 279.3 13.1 275.7 C17.1 272.1 24.0 263.7 32.7 260.4 C41.4 257.2 55.6 257.0 65.4 256.1 C75.2 255.2 83.6 256.4 91.6 255.0 C99.6 253.5 103.2 249.3 113.4 247.3 C123.6 245.3 140.6 244.3 152.6 243.0 C164.6 241.7 174.4 240.3 185.3 239.7 C196.2 239.2 207.2 240.3 218.1 239.7 C229.0 239.2 239.9 237.7 250.8 236.4 C261.7 235.2 271.5 233.5 283.5 232.1 C295.5 230.6 316.2 228.4 322.7 227.7"/><path d="M281.3 217.9 C281.3 227.2 284.6 259.5 281.3 273.5 C278.0 287.5 268.6 295.3 261.7 301.9 C254.8 308.4 247.1 309.1 239.9 312.8 C232.6 316.4 224.2 319.7 218.1 323.7 C211.9 327.7 207.2 330.9 202.8 336.7 C198.4 342.6 195.2 350.6 191.9 358.6 C188.6 366.6 186.1 375.3 183.2 384.7 C180.3 394.2 175.9 406.2 174.4 415.2 C173.0 424.3 174.4 435.2 174.4 439.2"/><path d="M314.0 269.2 C314.2 275.3 314.7 292.8 315.1 306.2 C315.5 319.7 316.0 336.0 316.2 349.8 C316.4 363.6 316.0 378.2 316.2 389.1 C316.4 400.0 316.9 406.9 317.3 415.2 C317.6 423.6 318.2 435.2 318.4 439.2"/><path d="M244.2 217.9 C244.6 221.7 246.4 231.5 246.4 240.8 C246.4 250.1 243.9 264.4 244.2 273.5 C244.6 282.6 246.4 289.1 248.6 295.3 C250.8 301.5 255.9 308.0 257.3 310.6"/><path d="M257.3 312.8 C261.7 313.1 272.6 314.4 283.5 314.9 C294.4 315.5 316.2 315.9 322.7 316.0"/><path d="M242.0 395.6 C242.4 397.8 244.2 404.0 244.2 408.7 C244.2 413.4 242.8 418.9 242.0 424.0 C241.3 429.1 240.2 436.7 239.9 439.2"/><path d="M319.9 227.7 C327.4 227.5 347.0 227.0 364.6 226.6 C382.2 226.3 407.5 226.1 425.7 225.5 C443.8 225.0 458.4 223.9 473.6 223.4 C488.9 222.8 507.8 221.5 517.2 222.3 C526.7 223.0 526.7 224.6 530.3 227.7 C534.0 230.8 537.2 236.1 539.1 240.8 C540.9 245.5 539.1 251.7 541.2 256.1 C543.4 260.4 548.5 264.1 552.1 267.0 C555.8 269.9 561.2 272.4 563.0 273.5"/><path d="M319.9 240.8 C323.7 241.9 335.4 243.7 342.8 247.3 C350.3 251.0 357.3 255.3 364.6 262.6 C371.9 269.9 379.1 282.6 386.4 291.0 C393.7 299.3 401.7 305.9 408.2 312.8 C414.8 319.7 421.7 325.5 425.7 332.4 C429.7 339.3 430.4 347.7 432.2 354.2 C434.0 360.7 435.8 368.7 436.6 371.6"/><path d="M319.9 321.5 C323.7 321.1 335.4 321.8 342.8 319.3 C350.3 316.8 357.3 310.6 364.6 306.2 C371.9 301.9 382.8 295.3 386.4 293.1"/></g><g fill="none" stroke="#dc8870" stroke-width="5.4" stroke-linecap="round" stroke-linejoin="round"><path d="M0.0 99.2 C4.4 102.3 17.1 112.5 26.2 117.7 C35.3 123.0 46.5 127.6 54.5 130.8 C62.5 134.1 64.3 136.1 74.1 137.4 C84.0 138.7 101.0 138.5 113.4 138.7 C125.7 138.9 139.6 139.6 148.3 138.7 C157.0 137.7 160.3 135.8 165.7 133.0 C171.2 130.3 175.9 128.3 181.0 122.1 C186.1 115.9 191.5 103.6 196.2 95.9 C201.0 88.3 204.6 81.8 209.3 76.3 C214.1 70.9 219.9 66.4 224.6 63.2 C229.3 60.0 231.5 58.6 237.7 57.1 C243.9 55.7 247.8 55.5 261.7 54.5 C275.5 53.5 311.1 51.8 321.0 51.2"/><path d="M321.0 51.9 C325.7 51.4 342.1 51.2 349.3 49.1 C356.6 46.9 359.7 41.2 364.6 38.8 C369.5 36.5 374.1 35.1 378.8 34.9 C383.5 34.7 387.3 35.9 393.0 37.5 C398.6 39.1 405.0 42.0 412.6 44.7 C420.2 47.4 430.0 51.1 438.7 53.4 C447.5 55.7 456.9 57.6 464.9 58.4 C472.9 59.3 481.6 58.9 486.7 58.4 C491.8 58.0 491.1 57.5 495.4 55.6 C499.8 53.7 507.8 50.3 512.9 46.9 C518.0 43.4 521.6 39.4 526.0 34.9 C530.3 30.3 534.7 23.8 539.1 19.6 C543.4 15.4 546.7 12.7 552.1 9.8 C557.6 6.9 565.2 4.0 571.8 2.2 C578.3 0.4 588.1 -0.5 591.4 -1.1"/><path d="M493.3 57.1 C494.7 54.9 499.8 48.4 502.0 43.6 C504.2 38.8 505.3 33.4 506.3 28.3 C507.4 23.3 508.3 18.0 508.5 13.1 C508.7 8.2 507.6 1.3 507.4 -1.1"/><path d="M224.6 -1.1 C225.0 2.7 226.1 15.1 226.8 21.8 C227.5 28.5 227.5 33.6 229.0 39.2 C230.4 44.9 232.6 50.9 235.5 55.6 C238.4 60.3 243.3 63.1 246.4 67.6 C249.5 72.1 252.0 78.1 254.0 82.9 C256.0 87.6 257.7 93.8 258.4 95.9"/><path d="M54.5 130.8 C56.3 131.6 61.4 133.0 65.4 135.2 C69.4 137.4 72.0 141.0 78.5 143.9 C85.0 146.8 95.9 149.4 104.7 152.6 C113.4 155.9 123.6 160.5 130.8 163.5 C138.1 166.6 145.4 169.9 148.3 171.2"/><path d="M161.4 139.6 C159.9 141.7 154.8 147.4 152.6 152.6 C150.5 157.9 148.6 165.7 148.3 171.2 C147.9 176.6 149.7 180.1 150.5 185.3 C151.2 190.6 151.9 197.0 152.6 202.8 C153.4 208.6 154.5 217.3 154.8 220.2"/><path d="M152.6 217.9 C153.2 220.3 154.8 227.2 155.9 232.1 C157.0 237.0 158.1 242.3 159.2 247.3 C160.3 252.4 161.0 257.2 162.5 262.6 C163.9 268.1 165.5 273.9 167.9 280.1 C170.3 286.2 173.4 293.5 176.6 299.7 C179.9 305.9 183.5 311.7 187.5 317.1 C191.5 322.6 196.2 327.3 200.6 332.4 C205.0 337.5 209.7 342.6 213.7 347.7 C217.7 352.7 221.3 357.5 224.6 362.9 C227.9 368.4 230.4 374.9 233.3 380.4 C236.2 385.8 238.8 392.0 242.0 395.6 C245.3 399.3 247.9 401.4 252.9 402.2 C258.0 402.9 265.7 401.1 272.6 400.0 C279.5 398.9 288.2 397.1 294.4 395.6 C300.6 394.2 304.9 392.2 309.6 391.3 C314.4 390.4 320.5 390.4 322.7 390.2"/><path d="M319.9 391.3 C323.7 391.1 333.5 390.5 342.8 390.2 C352.1 389.8 364.6 389.6 375.5 389.1 C386.4 388.5 399.9 388.0 408.2 386.9 C416.6 385.8 420.6 384.7 425.7 382.5 C430.8 380.4 433.7 377.8 438.7 373.8 C443.8 369.8 449.7 364.0 456.2 358.6 C462.7 353.1 471.5 346.6 478.0 341.1 C484.5 335.7 489.6 330.9 495.4 325.8 C501.3 320.8 507.1 316.0 512.9 310.6 C518.7 305.1 524.5 298.2 530.3 293.1 C536.1 288.1 542.3 283.7 547.8 280.1 C553.2 276.4 557.2 275.3 563.0 271.3 C568.9 267.3 575.8 261.5 582.7 256.1 C589.6 250.6 597.2 243.7 604.5 238.6 C611.7 233.5 619.7 229.0 626.3 225.5 C632.8 222.1 640.8 219.2 643.7 217.9"/><path d="M438.7 376.0 C440.9 378.2 446.7 384.7 451.8 389.1 C456.9 393.4 464.2 397.8 469.3 402.2 C474.4 406.5 478.4 410.9 482.4 415.2 C486.4 419.6 490.2 424.3 493.3 428.3 C496.4 432.3 499.6 437.4 500.9 439.2"/><path d="M-1.1 293.1 L8.7 282.2"/></g><g fill="none" stroke="#f9b29c" stroke-width="4.3" stroke-linecap="round" stroke-linejoin="round"><path d="M0.0 99.2 C4.4 102.3 17.1 112.5 26.2 117.7 C35.3 123.0 46.5 127.6 54.5 130.8 C62.5 134.1 64.3 136.1 74.1 137.4 C84.0 138.7 101.0 138.5 113.4 138.7 C125.7 138.9 139.6 139.6 148.3 138.7 C157.0 137.7 160.3 135.8 165.7 133.0 C171.2 130.3 175.9 128.3 181.0 122.1 C186.1 115.9 191.5 103.6 196.2 95.9 C201.0 88.3 204.6 81.8 209.3 76.3 C214.1 70.9 219.9 66.4 224.6 63.2 C229.3 60.0 231.5 58.6 237.7 57.1 C243.9 55.7 247.8 55.5 261.7 54.5 C275.5 53.5 311.1 51.8 321.0 51.2"/><path d="M321.0 51.9 C325.7 51.4 342.1 51.2 349.3 49.1 C356.6 46.9 359.7 41.2 364.6 38.8 C369.5 36.5 374.1 35.1 378.8 34.9 C383.5 34.7 387.3 35.9 393.0 37.5 C398.6 39.1 405.0 42.0 412.6 44.7 C420.2 47.4 430.0 51.1 438.7 53.4 C447.5 55.7 456.9 57.6 464.9 58.4 C472.9 59.3 481.6 58.9 486.7 58.4 C491.8 58.0 491.1 57.5 495.4 55.6 C499.8 53.7 507.8 50.3 512.9 46.9 C518.0 43.4 521.6 39.4 526.0 34.9 C530.3 30.3 534.7 23.8 539.1 19.6 C543.4 15.4 546.7 12.7 552.1 9.8 C557.6 6.9 565.2 4.0 571.8 2.2 C578.3 0.4 588.1 -0.5 591.4 -1.1"/><path d="M493.3 57.1 C494.7 54.9 499.8 48.4 502.0 43.6 C504.2 38.8 505.3 33.4 506.3 28.3 C507.4 23.3 508.3 18.0 508.5 13.1 C508.7 8.2 507.6 1.3 507.4 -1.1"/><path d="M224.6 -1.1 C225.0 2.7 226.1 15.1 226.8 21.8 C227.5 28.5 227.5 33.6 229.0 39.2 C230.4 44.9 232.6 50.9 235.5 55.6 C238.4 60.3 243.3 63.1 246.4 67.6 C249.5 72.1 252.0 78.1 254.0 82.9 C256.0 87.6 257.7 93.8 258.4 95.9"/><path d="M54.5 130.8 C56.3 131.6 61.4 133.0 65.4 135.2 C69.4 137.4 72.0 141.0 78.5 143.9 C85.0 146.8 95.9 149.4 104.7 152.6 C113.4 155.9 123.6 160.5 130.8 163.5 C138.1 166.6 145.4 169.9 148.3 171.2"/><path d="M161.4 139.6 C159.9 141.7 154.8 147.4 152.6 152.6 C150.5 157.9 148.6 165.7 148.3 171.2 C147.9 176.6 149.7 180.1 150.5 185.3 C151.2 190.6 151.9 197.0 152.6 202.8 C153.4 208.6 154.5 217.3 154.8 220.2"/><path d="M152.6 217.9 C153.2 220.3 154.8 227.2 155.9 232.1 C157.0 237.0 158.1 242.3 159.2 247.3 C160.3 252.4 161.0 257.2 162.5 262.6 C163.9 268.1 165.5 273.9 167.9 280.1 C170.3 286.2 173.4 293.5 176.6 299.7 C179.9 305.9 183.5 311.7 187.5 317.1 C191.5 322.6 196.2 327.3 200.6 332.4 C205.0 337.5 209.7 342.6 213.7 347.7 C217.7 352.7 221.3 357.5 224.6 362.9 C227.9 368.4 230.4 374.9 233.3 380.4 C236.2 385.8 238.8 392.0 242.0 395.6 C245.3 399.3 247.9 401.4 252.9 402.2 C258.0 402.9 265.7 401.1 272.6 400.0 C279.5 398.9 288.2 397.1 294.4 395.6 C300.6 394.2 304.9 392.2 309.6 391.3 C314.4 390.4 320.5 390.4 322.7 390.2"/><path d="M319.9 391.3 C323.7 391.1 333.5 390.5 342.8 390.2 C352.1 389.8 364.6 389.6 375.5 389.1 C386.4 388.5 399.9 388.0 408.2 386.9 C416.6 385.8 420.6 384.7 425.7 382.5 C430.8 380.4 433.7 377.8 438.7 373.8 C443.8 369.8 449.7 364.0 456.2 358.6 C462.7 353.1 471.5 346.6 478.0 341.1 C484.5 335.7 489.6 330.9 495.4 325.8 C501.3 320.8 507.1 316.0 512.9 310.6 C518.7 305.1 524.5 298.2 530.3 293.1 C536.1 288.1 542.3 283.7 547.8 280.1 C553.2 276.4 557.2 275.3 563.0 271.3 C568.9 267.3 575.8 261.5 582.7 256.1 C589.6 250.6 597.2 243.7 604.5 238.6 C611.7 233.5 619.7 229.0 626.3 225.5 C632.8 222.1 640.8 219.2 643.7 217.9"/><path d="M438.7 376.0 C440.9 378.2 446.7 384.7 451.8 389.1 C456.9 393.4 464.2 397.8 469.3 402.2 C474.4 406.5 478.4 410.9 482.4 415.2 C486.4 419.6 490.2 424.3 493.3 428.3 C496.4 432.3 499.6 437.4 500.9 439.2"/><path d="M-1.1 293.1 L8.7 282.2"/></g><g fill="none" stroke="#d06a80" stroke-width="5.4" stroke-linecap="round" stroke-linejoin="round"><path d="M589.2 -1.1 C592.8 0.2 604.8 3.5 611.0 6.5 C617.2 9.6 620.8 13.1 626.3 17.4 C631.7 21.8 640.8 30.2 643.7 32.7"/></g><g fill="none" stroke="#e892a2" stroke-width="4.3" stroke-linecap="round" stroke-linejoin="round"><path d="M589.2 -1.1 C592.8 0.2 604.8 3.5 611.0 6.5 C617.2 9.6 620.8 13.1 626.3 17.4 C631.7 21.8 640.8 30.2 643.7 32.7"/></g><circle cx="157.0" cy="142.8" r="4.5" fill="#f9b29c"/><circle cx="148.3" cy="171.2" r="5" fill="#f9b29c"/><circle cx="234.4" cy="55.6" r="5.5" fill="#f9b29c"/><circle cx="63.2" cy="134.1" r="4" fill="#f9b29c"/><circle cx="229.0" cy="41.4" r="4" fill="#f9b29c"/><circle cx="495.4" cy="56.3" r="4" fill="#f9b29c"/><circle cx="371.2" cy="40.3" r="3.5" fill="#f9b29c"/><circle cx="242.0" cy="396.7" r="4.5" fill="#f9b29c"/><circle cx="311.8" cy="391.3" r="5" fill="#f9b29c"/><circle cx="436.6" cy="376.0" r="4.5" fill="#f9b29c"/><circle cx="564.1" cy="272.4" r="4.5" fill="#fcd6a4"/><circle cx="506.3" cy="80.7" r="3" fill="#fcd6a4"/><circle cx="519.9" cy="131.9" r="2.5" fill="#fcd6a4"/><circle cx="403.9" cy="130.4" r="2.5" fill="#fcd6a4"/><circle cx="159.2" cy="256.1" r="4" fill="#f9b29c"/><text x="72.0" y="3.9" text-anchor="middle" fill="#333" style="font-size:5.5px;" transform="rotate(-3 72.0 3.9)" stroke="#fff" stroke-width="1.600" stroke-opacity=".7" paint-order="stroke">Route de la Chapelle des Fougeretz</text><rect x="195.8" y="10.7" width="27.0" height="10" rx="1.500" fill="#eef0c8" stroke="#c9c9b8" stroke-width="0.600"/><text x="209.3" y="18.5" text-anchor="middle" fill="#555" style="font-size:7.500px">D 637</text><rect x="145.2" y="61.5" width="22.8" height="10" rx="1.500" fill="#f4f4f4" stroke="#c9c9b8" stroke-width="0.600"/><text x="156.6" y="69.3" text-anchor="middle" fill="#555" style="font-size:7.500px">C 10</text><rect x="9.3" y="133.5" width="22.8" height="10" rx="1.500" fill="#f1f1e6" stroke="#c9c9b8" stroke-width="0.600"/><text x="20.7" y="141.3" text-anchor="middle" fill="#555" style="font-size:7.500px">D 68</text><rect x="74.6" y="145.0" width="34.0" height="10" rx="1.500" fill="#f8d4c8" stroke="#c9c9b8" stroke-width="0.600"/><text x="91.6" y="152.8" text-anchor="middle" fill="#555" style="font-size:7.500px">N 1012</text><rect x="37.6" y="209.1" width="18.6" height="10" rx="1.500" fill="#f4f4f4" stroke="#c9c9b8" stroke-width="0.600"/><text x="46.9" y="216.9" text-anchor="middle" fill="#555" style="font-size:7.500px">C 3</text><text x="258.4" y="53.4" text-anchor="middle" fill="#b0324a" style="font-size:6.6px;font-style:italic;" stroke="#fff" stroke-width="1.600" stroke-opacity=".7" paint-order="stroke">Porte de Saint-Malo</text><text x="258.4" y="60.6" text-anchor="middle" fill="#b0324a" style="font-size:6.2px;font-style:italic;" stroke="#fff" stroke-width="1.600" stroke-opacity=".7" paint-order="stroke">13b</text><text x="217.0" y="110.1" text-anchor="middle" fill="#3a3a3a" style="font-size:8.6px;" stroke="#fff" stroke-width="1.600" stroke-opacity=".7" paint-order="stroke">Beauregard</text><text x="277.4" y="104.7" text-anchor="middle" fill="#3a3a3a" style="font-size:8.6px;" stroke="#fff" stroke-width="1.600" stroke-opacity=".7" paint-order="stroke">Zone d'activités</text><text x="277.4" y="114.5" text-anchor="middle" fill="#3a3a3a" style="font-size:8.6px;" stroke="#fff" stroke-width="1.600" stroke-opacity=".7" paint-order="stroke">Nord</text><text x="287.0" y="151.5" text-anchor="middle" fill="#3a3a3a" style="font-size:8.6px;" stroke="#fff" stroke-width="1.600" stroke-opacity=".7" paint-order="stroke">Saint-Martin</text><text x="196.2" y="181.0" text-anchor="middle" fill="#3a3a3a" style="font-size:8.6px;" stroke="#fff" stroke-width="1.600" stroke-opacity=".7" paint-order="stroke">Villejean</text><text x="17.4" y="177.1" text-anchor="middle" fill="#555" style="font-size:7.5px;" stroke="#fff" stroke-width="1.600" stroke-opacity=".7" paint-order="stroke">-le-Coquet</text><text x="288.9" y="186.4" text-anchor="middle" fill="#3a3a3a" style="font-size:8.6px;" stroke="#fff" stroke-width="1.600" stroke-opacity=".7" paint-order="stroke">Dinan - Saint-</text><text x="288.9" y="196.2" text-anchor="middle" fill="#3a3a3a" style="font-size:8.6px;" stroke="#fff" stroke-width="1.600" stroke-opacity=".7" paint-order="stroke">Malo</text><text x="178.8" y="206.7" text-anchor="middle" fill="#b0324a" style="font-size:6.6px;font-style:italic;" stroke="#fff" stroke-width="1.600" stroke-opacity=".7" paint-order="stroke">Atalante-</text><text x="178.8" y="214.1" text-anchor="middle" fill="#b0324a" style="font-size:6.6px;font-style:italic;" stroke="#fff" stroke-width="1.600" stroke-opacity=".7" paint-order="stroke">Champeaux</text><text x="189.3" y="107.9" text-anchor="middle" fill="#333" style="font-size:5px;" transform="rotate(-55 189.3 107.9)" stroke="#fff" stroke-width="1.600" stroke-opacity=".7" paint-order="stroke">Rocade Nord-Ouest</text><text x="153.7" y="150.5" text-anchor="middle" fill="#b0324a" style="font-size:5.5px;font-style:italic;" stroke="#fff" stroke-width="1.600" stroke-opacity=".7" paint-order="stroke">11</text><text x="150.9" y="160.9" text-anchor="middle" fill="#b0324a" style="font-size:5.5px;font-style:italic;" stroke="#fff" stroke-width="1.600" stroke-opacity=".7" paint-order="stroke">12</text><text x="151.3" y="199.3" text-anchor="middle" fill="#b0324a" style="font-size:5.5px;font-style:italic;" stroke="#fff" stroke-width="1.600" stroke-opacity=".7" paint-order="stroke">11</text><text x="387.5" y="11.3" text-anchor="middle" fill="#3a3a3a" style="font-size:8.4px;" stroke="#fff" stroke-width="1.600" stroke-opacity=".7" paint-order="stroke">Maison-Blanche</text><text x="382.1" y="44.7" text-anchor="middle" fill="#b0324a" style="font-size:6.6px;font-style:italic;" stroke="#fff" stroke-width="1.600" stroke-opacity=".7" paint-order="stroke">Porte de Maurepas</text><text x="382.1" y="52.3" text-anchor="middle" fill="#b0324a" style="font-size:6.2px;font-style:italic;" stroke="#fff" stroke-width="1.600" stroke-opacity=".7" paint-order="stroke">14</text><text x="327.5" y="48.4" text-anchor="middle" fill="#b0324a" style="font-size:6.4px;font-style:italic;" stroke="#fff" stroke-width="1.600" stroke-opacity=".7" paint-order="stroke">Porte du</text><text x="424.6" y="49.3" text-anchor="middle" fill="#333" style="font-size:5px;" transform="rotate(14 424.6 49.3)" stroke="#fff" stroke-width="1.600" stroke-opacity=".7" paint-order="stroke">Rocade Nord</text><text x="450.3" y="60.6" text-anchor="middle" fill="#3a3a3a" style="font-size:8.6px;" stroke="#fff" stroke-width="1.600" stroke-opacity=".7" paint-order="stroke">Les Gayeulles</text><text x="512.9" y="44.3" text-anchor="middle" fill="#b0324a" style="font-size:6.6px;font-style:italic;" stroke="#fff" stroke-width="1.600" stroke-opacity=".7" paint-order="stroke">Porte des Longs Champs</text><text x="512.9" y="52.3" text-anchor="middle" fill="#b0324a" style="font-size:6.2px;font-style:italic;" stroke="#fff" stroke-width="1.600" stroke-opacity=".7" paint-order="stroke">15</text><text x="552.1" y="9.2" text-anchor="middle" fill="#b0324a" style="font-size:6.6px;font-style:italic;" stroke="#fff" stroke-width="1.600" stroke-opacity=".7" paint-order="stroke">Porte de Normandie</text><text x="552.1" y="17.0" text-anchor="middle" fill="#b0324a" style="font-size:6.2px;font-style:italic;" stroke="#fff" stroke-width="1.600" stroke-opacity=".7" paint-order="stroke">16</text><text x="615.4" y="10.5" text-anchor="middle" fill="#b0324a" style="font-size:6.6px;font-style:italic;" stroke="#fff" stroke-width="1.600" stroke-opacity=".7" paint-order="stroke">Porte de Normandie</text><text x="615.4" y="17.9" text-anchor="middle" fill="#b0324a" style="font-size:6.2px;font-style:italic;" stroke="#fff" stroke-width="1.600" stroke-opacity=".7" paint-order="stroke">16</text><text x="527.1" y="30.5" text-anchor="middle" fill="#333" style="font-size:5px;" transform="rotate(-48 527.1 30.5)" stroke="#fff" stroke-width="1.600" stroke-opacity=".7" paint-order="stroke">Rocade Est</text><text x="386.9" y="77.6" text-anchor="middle" fill="#3a3a3a" style="font-size:8.6px;" stroke="#fff" stroke-width="1.600" stroke-opacity=".7" paint-order="stroke">Saint-Laurent</text><text x="424.6" y="89.8" text-anchor="middle" fill="#5a9a62" style="font-size:6.4px;font-style:italic;" stroke="#fff" stroke-width="1.600" stroke-opacity=".7" paint-order="stroke">Parc des</text><text x="424.6" y="97.3" text-anchor="middle" fill="#5a9a62" style="font-size:6.4px;font-style:italic;" stroke="#fff" stroke-width="1.600" stroke-opacity=".7" paint-order="stroke">Gayeulles</text><text x="372.9" y="129.1" text-anchor="middle" fill="#3a3a3a" style="font-size:8.6px;" stroke="#fff" stroke-width="1.600" stroke-opacity=".7" paint-order="stroke">Maurepas</text><text x="448.1" y="133.0" text-anchor="middle" fill="#3a3a3a" style="font-size:8.6px;" stroke="#fff" stroke-width="1.600" stroke-opacity=".7" paint-order="stroke">Les Longs Champs</text><text x="450.7" y="178.4" text-anchor="middle" fill="#3a3a3a" style="font-size:8.6px;" stroke="#fff" stroke-width="1.600" stroke-opacity=".7" paint-order="stroke">Beaulieu</text><text x="393.6" y="184.5" text-anchor="middle" fill="#3a3a3a" style="font-size:8.6px;" stroke="#fff" stroke-width="1.600" stroke-opacity=".7" paint-order="stroke">Jeanne d'Arc</text><text x="353.3" y="214.6" text-anchor="middle" fill="#3a3a3a" style="font-size:8.6px;" stroke="#fff" stroke-width="1.600" stroke-opacity=".7" paint-order="stroke">Thabor - Paris</text><text x="584.4" y="176.2" text-anchor="middle" fill="#3a3a3a" style="font-size:9.2px;" stroke="#fff" stroke-width="1.600" stroke-opacity=".7" paint-order="stroke">Cesson-Sévigné</text><rect x="612.7" y="85.5" width="22.8" height="10" rx="1.500" fill="#eef0c8" stroke="#c9c9b8" stroke-width="0.600"/><text x="624.1" y="93.3" text-anchor="middle" fill="#555" style="font-size:7.500px">D 86</text><rect x="564.3" y="118.2" width="22.8" height="10" rx="1.500" fill="#eef0c8" stroke="#c9c9b8" stroke-width="0.600"/><text x="575.7" y="126.0" text-anchor="middle" fill="#555" style="font-size:7.500px">D 96</text><rect x="505.9" y="204.8" width="27.0" height="10" rx="1.500" fill="#f8e0c0" stroke="#c9c9b8" stroke-width="0.600"/><text x="519.4" y="212.6" text-anchor="middle" fill="#555" style="font-size:7.500px">D 386</text><text x="638.3" y="45.8" text-anchor="middle" fill="#b0324a" style="font-size:6.4px;font-style:italic;" stroke="#fff" stroke-width="1.600" stroke-opacity=".7" paint-order="stroke">Po</text><text x="637.2" y="201.7" text-anchor="middle" fill="#b0324a" style="font-size:6px;font-style:italic;" stroke="#fff" stroke-width="1.600" stroke-opacity=".7" paint-order="stroke">Zone</text><text x="637.2" y="209.3" text-anchor="middle" fill="#b0324a" style="font-size:6px;font-style:italic;" stroke="#fff" stroke-width="1.600" stroke-opacity=".7" paint-order="stroke">de la</text><text x="193.0" y="232.1" text-anchor="middle" fill="#3a3a3a" style="font-size:8.6px;" stroke="#fff" stroke-width="1.600" stroke-opacity=".7" paint-order="stroke">Moulin du</text><text x="193.0" y="242.1" text-anchor="middle" fill="#3a3a3a" style="font-size:8.6px;" stroke="#fff" stroke-width="1.600" stroke-opacity=".7" paint-order="stroke">Comte</text><text x="119.5" y="251.7" text-anchor="middle" fill="#3a3a3a" style="font-size:8.6px;" stroke="#fff" stroke-width="1.600" stroke-opacity=".7" paint-order="stroke">Zone d'Activité</text><text x="119.5" y="261.7" text-anchor="middle" fill="#3a3a3a" style="font-size:8.6px;" stroke="#fff" stroke-width="1.600" stroke-opacity=".7" paint-order="stroke">Ouest</text><text x="248.6" y="257.4" text-anchor="middle" fill="#3a3a3a" style="font-size:8.6px;" stroke="#fff" stroke-width="1.600" stroke-opacity=".7" paint-order="stroke">Arsenal - Redon</text><text x="200.6" y="278.3" text-anchor="middle" fill="#3a3a3a" style="font-size:8.6px;" stroke="#fff" stroke-width="1.600" stroke-opacity=".7" paint-order="stroke">Cleunay</text><text x="169.0" y="286.2" text-anchor="middle" fill="#b0324a" style="font-size:6.6px;font-style:italic;" stroke="#fff" stroke-width="1.600" stroke-opacity=".7" paint-order="stroke">Porte de Cleunay</text><text x="230.0" y="304.5" text-anchor="middle" fill="#3a3a3a" style="font-size:8.6px;" stroke="#fff" stroke-width="1.600" stroke-opacity=".7" paint-order="stroke">La Courrouze</text><text x="291.1" y="297.5" text-anchor="middle" fill="#3a3a3a" style="font-size:8.6px;" stroke="#fff" stroke-width="1.600" stroke-opacity=".7" paint-order="stroke">Villeneuve</text><text x="294.4" y="325.4" text-anchor="middle" fill="#3a3a3a" style="font-size:8.6px;" stroke="#fff" stroke-width="1.600" stroke-opacity=".7" paint-order="stroke">Les Champs</text><text x="294.4" y="335.4" text-anchor="middle" fill="#3a3a3a" style="font-size:8.6px;" stroke="#fff" stroke-width="1.600" stroke-opacity=".7" paint-order="stroke">Manceaux</text><text x="212.6" y="346.8" text-anchor="middle" fill="#b0324a" style="font-size:6.6px;font-style:italic;" stroke="#fff" stroke-width="1.600" stroke-opacity=".7" paint-order="stroke">Porte de Saint-Nazaire</text><text x="212.6" y="354.2" text-anchor="middle" fill="#b0324a" style="font-size:6.2px;font-style:italic;" stroke="#fff" stroke-width="1.600" stroke-opacity=".7" paint-order="stroke">5</text><text x="250.8" y="370.3" text-anchor="middle" fill="#3a3a3a" style="font-size:8.6px;" stroke="#fff" stroke-width="1.600" stroke-opacity=".7" paint-order="stroke">Bréquigny</text><text x="305.3" y="368.6" text-anchor="middle" fill="#3a3a3a" style="font-size:8.6px;" stroke="#fff" stroke-width="1.600" stroke-opacity=".7" paint-order="stroke">Les Chalais</text><text x="170.5" y="391.7" text-anchor="middle" fill="#3a3a3a" style="font-size:8.6px;" stroke="#fff" stroke-width="1.600" stroke-opacity=".7" paint-order="stroke">Saint-Jacques-</text><text x="170.5" y="402.2" text-anchor="middle" fill="#3a3a3a" style="font-size:8.6px;" stroke="#fff" stroke-width="1.600" stroke-opacity=".7" paint-order="stroke">de-la-Lande</text><text x="263.4" y="400.0" text-anchor="middle" fill="#b0324a" style="font-size:6.6px;font-style:italic;" stroke="#fff" stroke-width="1.600" stroke-opacity=".7" paint-order="stroke">Porte de Bréquigny</text><text x="263.4" y="407.4" text-anchor="middle" fill="#b0324a" style="font-size:6.2px;font-style:italic;" stroke="#fff" stroke-width="1.600" stroke-opacity=".7" paint-order="stroke">7</text><text x="94.2" y="395.6" text-anchor="middle" fill="#7a5a7a" style="font-size:6.5px;font-style:italic;" stroke="#fff" stroke-width="1.600" stroke-opacity=".7" paint-order="stroke">Zone industrielle</text><text x="94.2" y="403.5" text-anchor="middle" fill="#7a5a7a" style="font-size:6.5px;font-style:italic;" stroke="#fff" stroke-width="1.600" stroke-opacity=".7" paint-order="stroke">Haie des</text><text x="94.2" y="411.3" text-anchor="middle" fill="#7a5a7a" style="font-size:6.5px;font-style:italic;" stroke="#fff" stroke-width="1.600" stroke-opacity=".7" paint-order="stroke">Cognets</text><text x="181.0" y="310.6" text-anchor="middle" fill="#333" style="font-size:5px;" transform="rotate(62 181.0 310.6)" stroke="#fff" stroke-width="1.600" stroke-opacity=".7" paint-order="stroke">Rocade Ouest</text><rect x="-2.6" y="386.3" width="27.0" height="10" rx="1.500" fill="#f1f1e6" stroke="#c9c9b8" stroke-width="0.600"/><text x="10.9" y="394.1" text-anchor="middle" fill="#555" style="font-size:7.500px">D 129</text><rect x="163.1" y="429.4" width="27.0" height="10" rx="1.500" fill="#f8d4c8" stroke="#c9c9b8" stroke-width="0.600"/><text x="176.6" y="437.2" text-anchor="middle" fill="#555" style="font-size:7.500px">D 177</text><rect x="22.5" y="432.3" width="27.0" height="10" rx="1.500" fill="#f1f1e6" stroke="#c9c9b8" stroke-width="0.600"/><text x="36.0" y="440.1" text-anchor="middle" fill="#555" style="font-size:7.500px">D 434</text><rect x="-3.3" y="303.4" width="10.0" height="10" rx="1.500" fill="#f8d4c8" stroke="#c9c9b8" stroke-width="0.600"/><text x="1.7" y="311.2" text-anchor="middle" fill="#555" style="font-size:7.500px">4</text><text x="298.5" y="224.2" text-anchor="middle" fill="#333" style="font-size:10.5px;" stroke="#fff" stroke-width="1.600" stroke-opacity=".7" paint-order="stroke">Rennes</text><text x="314.9" y="252.1" text-anchor="middle" fill="#3a3a3a" style="font-size:8.6px;" stroke="#fff" stroke-width="1.600" stroke-opacity=".7" paint-order="stroke">Champ de</text><text x="314.7" y="262.2" text-anchor="middle" fill="#3a3a3a" style="font-size:8.6px;" stroke="#fff" stroke-width="1.600" stroke-opacity=".7" paint-order="stroke">Mars</text><text x="378.1" y="243.0" text-anchor="middle" fill="#3a3a3a" style="font-size:8.6px;" stroke="#fff" stroke-width="1.600" stroke-opacity=".7" paint-order="stroke">Alphonse Guérin</text><text x="412.6" y="259.6" text-anchor="middle" fill="#3a3a3a" style="font-size:8.6px;" stroke="#fff" stroke-width="1.600" stroke-opacity=".7" paint-order="stroke">Cimetière de</text><text x="412.6" y="269.6" text-anchor="middle" fill="#3a3a3a" style="font-size:8.6px;" stroke="#fff" stroke-width="1.600" stroke-opacity=".7" paint-order="stroke">l'Est</text><text x="382.5" y="302.3" text-anchor="middle" fill="#3a3a3a" style="font-size:8.6px;" stroke="#fff" stroke-width="1.600" stroke-opacity=".7" paint-order="stroke">Francisco Ferrer</text><text x="473.2" y="287.0" text-anchor="middle" fill="#3a3a3a" style="font-size:8.6px;" stroke="#fff" stroke-width="1.600" stroke-opacity=".7" paint-order="stroke">Zone d'activité</text><text x="473.2" y="297.5" text-anchor="middle" fill="#3a3a3a" style="font-size:8.6px;" stroke="#fff" stroke-width="1.600" stroke-opacity=".7" paint-order="stroke">Sud-Est</text><text x="510.7" y="260.9" text-anchor="middle" fill="#3a3a3a" style="font-size:8.6px;" stroke="#fff" stroke-width="1.600" stroke-opacity=".7" paint-order="stroke">Écopôle Sud-</text><text x="510.7" y="271.3" text-anchor="middle" fill="#3a3a3a" style="font-size:8.6px;" stroke="#fff" stroke-width="1.600" stroke-opacity=".7" paint-order="stroke">Est</text><text x="565.2" y="248.2" text-anchor="middle" fill="#3a3a3a" style="font-size:8.6px;" stroke="#fff" stroke-width="1.600" stroke-opacity=".7" paint-order="stroke">La Monniais</text><text x="572.9" y="265.2" text-anchor="middle" fill="#b0324a" style="font-size:6.4px;font-style:italic;" stroke="#fff" stroke-width="1.600" stroke-opacity=".7" paint-order="stroke">ZI Sud Est</text><text x="572.9" y="272.6" text-anchor="middle" fill="#b0324a" style="font-size:6.2px;font-style:italic;" stroke="#fff" stroke-width="1.600" stroke-opacity=".7" paint-order="stroke">3b</text><text x="543.0" y="290.5" text-anchor="middle" fill="#b0324a" style="font-size:6.4px;font-style:italic;" stroke="#fff" stroke-width="1.600" stroke-opacity=".7" paint-order="stroke">Porte de Beaulieu</text><text x="543.0" y="297.9" text-anchor="middle" fill="#b0324a" style="font-size:6.2px;font-style:italic;" stroke="#fff" stroke-width="1.600" stroke-opacity=".7" paint-order="stroke">3</text><text x="448.6" y="327.2" text-anchor="middle" fill="#3a3a3a" style="font-size:8.6px;" stroke="#fff" stroke-width="1.600" stroke-opacity=".7" paint-order="stroke">La Poterie</text><text x="490.0" y="335.0" text-anchor="middle" fill="#b0324a" style="font-size:6.4px;font-style:italic;" stroke="#fff" stroke-width="1.600" stroke-opacity=".7" paint-order="stroke">Porte des Loges</text><text x="490.0" y="342.4" text-anchor="middle" fill="#b0324a" style="font-size:6.2px;font-style:italic;" stroke="#fff" stroke-width="1.600" stroke-opacity=".7" paint-order="stroke">4</text><text x="399.5" y="346.3" text-anchor="middle" fill="#3a3a3a" style="font-size:8.6px;" stroke="#fff" stroke-width="1.600" stroke-opacity=".7" paint-order="stroke">Le Landrel</text><text x="534.7" y="354.2" text-anchor="middle" fill="#3a3a3a" style="font-size:9.2px;" stroke="#fff" stroke-width="1.600" stroke-opacity=".7" paint-order="stroke">Chantepie</text><text x="389.7" y="364.0" text-anchor="middle" fill="#3a3a3a" style="font-size:8.6px;" stroke="#fff" stroke-width="1.600" stroke-opacity=".7" paint-order="stroke">Torigné</text><text x="408.7" y="379.3" text-anchor="middle" fill="#3a3a3a" style="font-size:8.6px;" stroke="#fff" stroke-width="1.600" stroke-opacity=".7" paint-order="stroke">Sainte-Élisabeth</text><text x="338.4" y="389.1" text-anchor="middle" fill="#b0324a" style="font-size:6.4px;font-style:italic;" stroke="#fff" stroke-width="1.600" stroke-opacity=".7" paint-order="stroke">Porte d'Alma</text><text x="338.4" y="396.5" text-anchor="middle" fill="#b0324a" style="font-size:6.2px;font-style:italic;" stroke="#fff" stroke-width="1.600" stroke-opacity=".7" paint-order="stroke">6 b</text><text x="386.4" y="391.7" text-anchor="middle" fill="#333" style="font-size:5px;" transform="rotate(-2 386.4 391.7)" stroke="#fff" stroke-width="1.600" stroke-opacity=".7" paint-order="stroke">Rocade Sud</text><text x="464.9" y="358.6" text-anchor="middle" fill="#333" style="font-size:5px;" transform="rotate(-40 464.9 358.6)" stroke="#fff" stroke-width="1.600" stroke-opacity=".7" paint-order="stroke">Rocade Sud</text><rect x="584.0" y="353.6" width="27.0" height="10" rx="1.500" fill="#f4f4f4" stroke="#c9c9b8" stroke-width="0.600"/><text x="597.5" y="361.4" text-anchor="middle" fill="#555" style="font-size:7.500px">D 286</text><rect x="564.8" y="393.2" width="27.0" height="10" rx="1.500" fill="#eef0c8" stroke="#c9c9b8" stroke-width="0.600"/><text x="578.3" y="401.0" text-anchor="middle" fill="#555" style="font-size:7.500px">D 463</text><rect x="466.5" y="405.9" width="18.6" height="10" rx="1.500" fill="#f4f4f4" stroke="#c9c9b8" stroke-width="0.600"/><text x="475.8" y="413.7" text-anchor="middle" fill="#555" style="font-size:7.500px">C 5</text><text x="626.3" y="224.2" text-anchor="middle" fill="#b0324a" style="font-size:6.2px;font-style:italic;" stroke="#fff" stroke-width="1.600" stroke-opacity=".7" paint-order="stroke">Porte de la</text><text x="377.7" y="248.2" text-anchor="middle" fill="#5a7ab0" style="font-size:5px;font-style:italic;" transform="rotate(-12 377.7 248.2)" stroke="#fff" stroke-width="1.600" stroke-opacity=".7" paint-order="stroke">La Vilaine</text><text x="632.8" y="415.2" text-anchor="middle" fill="#333" style="font-size:5px;" transform="rotate(25 632.8 415.2)" stroke="#fff" stroke-width="1.600" stroke-opacity=".7" paint-order="stroke">Route</text></svg><svg style="position:absolute;left:290.9px;top:201.2px" width="17" height="25" viewBox="0 0 17 25"><path d="M8.500 25C7.300 20 0.200 14.500 0.200 8.400A8.300 8.300 0 0 1 16.800 8.400C16.800 14.500 9.700 20 8.500 25z" fill="#f0001a"/><circle cx="8.500" cy="8.300" r="6.200" fill="#fff"/><text x="8.500" y="12.300" text-anchor="middle" style="font-size:11px;font-weight:700;font-family:'Liberation Sans',sans-serif" fill="#000">3</text></svg><svg style="position:absolute;left:285.9px;top:225.2px" width="17" height="25" viewBox="0 0 17 25"><path d="M8.500 25C7.300 20 0.200 14.500 0.200 8.400A8.300 8.300 0 0 1 16.800 8.400C16.800 14.500 9.700 20 8.500 25z" fill="#f0001a"/><circle cx="8.500" cy="8.300" r="6.200" fill="#fff"/><text x="8.500" y="12.300" text-anchor="middle" style="font-size:11px;font-weight:700;font-family:'Liberation Sans',sans-serif" fill="#000">1</text></svg><svg style="position:absolute;left:524.7px;top:264.0px" width="17" height="25" viewBox="0 0 17 25"><path d="M8.500 25C7.300 20 0.200 14.500 0.200 8.400A8.300 8.300 0 0 1 16.800 8.400C16.800 14.500 9.700 20 8.500 25z" fill="#f0001a"/><circle cx="8.500" cy="8.300" r="6.200" fill="#fff"/><text x="8.500" y="12.300" text-anchor="middle" style="font-size:11px;font-weight:700;font-family:'Liberation Sans',sans-serif" fill="#000">2</text></svg><div style="position:absolute;left:7.500px;top:7.500px;width:19px;height:40px;background:#fff;border-radius:3px;box-shadow:0 0 0 1.500px rgba(0,0,0,.22)"></div><div style="position:absolute;left:7.500px;top:27px;width:19px;height:1px;background:#ccc"></div><span style="position:absolute;left:7.500px;top:7.500px;width:19px;height:20px;line-height:19px;text-align:center;font-size:15px;font-weight:700;color:#000">+</span><span style="position:absolute;left:7.500px;top:27.500px;width:19px;height:20px;line-height:17px;text-align:center;font-size:15px;font-weight:700;color:#000">−</span><div style="position:absolute;right:0;bottom:0;padding:0 4px;height:10.5px;background:rgba(255,255,255,.75);font-size:7.4px;line-height:11px;color:#333;white-space:nowrap"><span style="color:#0078a8">Leaflet</span> | © <span style="color:#0078a8">OpenStreetMap</span></div></div>
<div style="position:absolute;left:14px;top:687px;width:1260px;height:34.5px;background:#808080;"></div>
<svg style="position:absolute;left:23px;top:699px" width="10" height="10" viewBox="0 0 10 10"><rect x="0.5" y="0.5" width="9" height="9" fill="#fff" stroke="#333"/><path d="M2.500 5h5" stroke="#000" stroke-width="1.2"/></svg>
<span style="position:absolute;top:696.50px;font-size:13px;line-height:1;white-space:pre;color:#000;font-weight:700;letter-spacing:0.25px;left:44px;">30/04/2025</span>
<div style="position:absolute;left:14px;top:723px;width:594px;height:231px;overflow:hidden">
<div style="position:absolute;left:2px;top:-2px;width:590px;height:600px;border-left:1px solid #e4e4e4;"></div>
<svg style="position:absolute;left:15px;top:8px" width="13" height="16" viewBox="0 0 13 16"><path fill="#ff0000" d="M0.3 1.5h3.5l1-1.3h3.4l1 1.3h3.5v1.7H0.3z M1.3 4h10.4v10.4a1.4 1.4 0 0 1-1.4 1.4H2.7a1.4 1.4 0 0 1-1.4-1.4z"/></svg>
<span style="position:absolute;top:11.34px;font-size:12px;line-height:1;white-space:pre;color:#c2c2c2;font-weight:700;letter-spacing:-0.15px;left:42px;">Intitulé de tournée</span>
<svg style="position:absolute;left:12px;top:33px" width="18" height="18" viewBox="0 0 18 18"><rect x="3.6" y="0.8" width="10.8" height="7" rx="1.5" fill="#fff" stroke="#222" stroke-width="1.5"/><rect x="0.3" y="6.6" width="17.4" height="7.6" rx="2.2" fill="#222"/><rect x="3.6" y="10.4" width="10.8" height="6.8" rx="1.2" fill="#fff" stroke="#222" stroke-width="1.5"/><path d="M5.8 12.6h6.4M5.8 14.7h4.4" stroke="#222" stroke-width="1.1"/><rect x="14" y="7.6" width="1.8" height="1.8" fill="#fff"/></svg>
<div style="position:absolute;left:39px;top:50px;width:238px;height:1px;background:#b8b8b8;"></div>
<span style="position:absolute;top:68.77px;font-size:11.5px;line-height:1;white-space:pre;color:#111;font-weight:700;letter-spacing:-0.3px;left:15px;">Début</span>
<div style="position:absolute;left:73px;top:64px;width:89px;height:18px;background:#fff;border:1px solid #d0d0d0;border-bottom:2px solid #8a8a8a;border-radius:3px;"></div>
<span style="position:absolute;top:69.77px;font-size:11.5px;line-height:1;white-space:pre;color:#1a1a1a;letter-spacing:-0.35px;left:89.5px;">30/04/2025</span>
<svg style="position:absolute;left:147px;top:68px" width="14" height="13" viewBox="0 0 14 13"><rect x="0.5" y="0.5" width="13" height="12" fill="#fff" stroke="none"/><path d="M0.5 0v12.5M13.5 0v10" stroke="#4a90d9" stroke-width="1"/><path d="M1 2h12" stroke="#999" stroke-width="1"/><path d="M2.5 4.5h10M2.5 7h10M2.5 9.500h8" stroke="#8db4f0" stroke-width="1.6" stroke-dasharray="1.6 1"/><path d="M10.5 12.500l3-2.5v-0.500h-3z" fill="#4a90d9"/><path d="M0.5 12.500h10" stroke="#4a90d9" stroke-width="1"/></svg>
<span style="position:absolute;top:68.34px;font-size:12px;line-height:1;white-space:pre;color:#111;font-weight:700;left:188px;">à</span>
<div style="position:absolute;left:206px;top:64px;width:41px;height:18px;background:#fff;border:1px solid #d0d0d0;border-bottom:2px solid #8a8a8a;border-radius:3px;"></div>
<span style="position:absolute;top:69.77px;font-size:11.5px;line-height:1;white-space:pre;color:#1a1a1a;letter-spacing:-0.4px;left:219px;">00:00</span>
<span style="position:absolute;top:99.77px;font-size:11.5px;line-height:1;white-space:pre;color:#111;font-weight:700;letter-spacing:-0.3px;left:15px;">Fin</span>
<div style="position:absolute;left:73px;top:95px;width:89px;height:18px;background:#fff;border:1px solid #d0d0d0;border-bottom:2px solid #8a8a8a;border-radius:3px;"></div>
<span style="position:absolute;top:100.77px;font-size:11.5px;line-height:1;white-space:pre;color:#1a1a1a;letter-spacing:-0.35px;left:89.5px;">30/04/2025</span>
<svg style="position:absolute;left:147px;top:99px" width="14" height="13" viewBox="0 0 14 13"><rect x="0.5" y="0.5" width="13" height="12" fill="#fff" stroke="none"/><path d="M0.5 0v12.5M13.5 0v10" stroke="#4a90d9" stroke-width="1"/><path d="M1 2h12" stroke="#999" stroke-width="1"/><path d="M2.5 4.5h10M2.5 7h10M2.5 9.500h8" stroke="#8db4f0" stroke-width="1.6" stroke-dasharray="1.6 1"/><path d="M10.5 12.500l3-2.5v-0.500h-3z" fill="#4a90d9"/><path d="M0.5 12.500h10" stroke="#4a90d9" stroke-width="1"/></svg>
<span style="position:absolute;top:99.34px;font-size:12px;line-height:1;white-space:pre;color:#111;font-weight:700;left:188px;">à</span>
<div style="position:absolute;left:206px;top:95px;width:41px;height:18px;background:#fff;border:1px solid #d0d0d0;border-bottom:2px solid #8a8a8a;border-radius:3px;"></div>
<span style="position:absolute;top:100.77px;font-size:11.5px;line-height:1;white-space:pre;color:#1a1a1a;letter-spacing:-0.4px;left:219px;">00:00</span>
<span style="position:absolute;top:135.27px;font-size:11.5px;line-height:1;white-space:pre;color:#111;font-weight:700;letter-spacing:-0.4px;left:16px;">Départ Cuisine</span>
<div style="position:absolute;left:105px;top:130px;width:43px;height:18px;background:#fff;border:1px solid #d0d0d0;border-bottom:2px solid #8a8a8a;border-radius:3px;"></div>
<span style="position:absolute;top:135.77px;font-size:11.5px;line-height:1;white-space:pre;color:#1a1a1a;letter-spacing:-0.4px;left:119px;">00:00</span>
<span style="position:absolute;top:160.84px;font-size:12px;line-height:1;white-space:pre;color:#c6c6c6;left:17px;transform:scaleX(0.86);transform-origin:0 0;">Commentaire</span>
<div style="position:absolute;left:14px;top:222px;width:265px;height:1px;background:#b8b8b8;"></div>
<div style="position:absolute;left:10px;top:226px;width:269px;height:20px;background:#c8c8c8;"></div>
<span style="position:absolute;top:229.92px;font-size:12.5px;line-height:1;white-space:pre;color:#333;font-weight:700;letter-spacing:-0.4px;left:-55.5px;width:400px;text-align:center;">Véhicule(s)</span>
<div style="position:absolute;left:10px;top:403px;width:269px;height:20px;background:#c8c8c8;"></div>
<span style="position:absolute;top:406.92px;font-size:12.5px;line-height:1;white-space:pre;color:#333;font-weight:700;letter-spacing:-0.25px;left:-56px;width:400px;text-align:center;">Chauffeur/se(s)</span>
<div style="position:absolute;left:290px;top:7px;width:24px;height:24px;background:#339933;border-radius:3px"><svg width="24" height="24" viewBox="0 0 24 24"><path d="M12 5v14M5 12h14" stroke="#fff" stroke-width="2.6"/></svg></div>
<svg style="position:absolute;left:319.5px;top:1.5px" width="31" height="29" viewBox="0 0 31 29"><path d="M4.6 14.4h21.8l3.6 13.6H0.8z" fill="#fff" stroke="#000" stroke-width="1.3" stroke-linejoin="round"/><path d="M5.5 14.8L27.5 27.6M9.5 14.6L29 26M2.8 20.5l8 4.8M14 19.8l-4.6 8M13 24.5l4.4 2.6M23.5 14.8l-4 5.6M26.8 17.5l-3.6 5" stroke="#000" stroke-width="1.2" fill="none"/><path d="M20.8 1c3 0 5.2 2.3 5.2 5.2 0 3.4-3.4 7.6-5.2 12-1.8-4.4-5.2-8.6-5.2-12C15.600 3.3 17.8 1 20.8 1z" fill="#fff" stroke="#000" stroke-width="1.3"/><circle cx="20.8" cy="6.4" r="2.2" fill="#fff" stroke="#000" stroke-width="1.2"/></svg>
<div style="position:absolute;left:284px;top:36px;width:292px;height:424.5px;overflow:hidden">
<div style="position:absolute;left:3px;top:2px;width:276px;height:163.5px;border:4px solid #686868;border-bottom-width:4px;border-radius:7px 7px 0 0;background:#fff;"></div><svg style="position:absolute;left:16.5px;top:8px" width="13" height="16" viewBox="0 0 13 16"><path fill="#ff0000" d="M0.3 1.5h3.5l1-1.3h3.4l1 1.3h3.5v1.7H0.3z M1.3 4h10.4v10.4a1.4 1.4 0 0 1-1.4 1.4H2.7a1.4 1.4 0 0 1-1.4-1.4z"/></svg><span style="position:absolute;top:10.73px;font-size:14.5px;line-height:1;white-space:pre;color:#111;font-weight:700;letter-spacing:-0.1px;left:38px;text-decoration:underline;text-underline-offset:0.5px;text-decoration-thickness:1px;">C24053001</span><div style="position:absolute;left:258px;top:6.5px;width:21px;height:21.5px;border:1px solid #333;border-radius:3px;background:#fff;"></div><span style="position:absolute;top:11.92px;font-size:12.5px;line-height:1;white-space:pre;color:#334;font-weight:700;left:69.5px;width:400px;text-align:center;">1</span><span style="position:absolute;top:32.42px;font-size:12.5px;line-height:1;white-space:pre;color:#222;letter-spacing:-0.45px;left:15px;">Commande Semaine 28</span><span style="position:absolute;top:52.34px;font-size:12px;line-height:1;white-space:pre;color:#111;font-weight:700;letter-spacing:0px;left:15px;">3AXES INSTITUT</span><span style="position:absolute;top:75.34px;font-size:12px;line-height:1;white-space:pre;color:#111;font-weight:700;letter-spacing:0.1px;left:15px;">Nb convives :</span><span style="position:absolute;top:74.07px;font-size:13.5px;line-height:1;white-space:pre;color:#222;left:102.5px;transform:scaleX(0.9);transform-origin:0 0;">300</span><span style="position:absolute;top:92.84px;font-size:12px;line-height:1;white-space:pre;color:#222;left:15px;transform:scaleX(0.88);transform-origin:0 0;">Livraison :</span><span style="position:absolute;top:92.42px;font-size:12.5px;line-height:1;white-space:pre;color:#111;font-weight:700;letter-spacing:0.5px;left:65.5px;">31/05/2024</span><span style="position:absolute;top:92.42px;font-size:12.5px;line-height:1;white-space:pre;color:#111;font-weight:700;letter-spacing:0.1px;left:147px;">10:00 - 10:30</span><span style="position:absolute;top:114.84px;font-size:12px;line-height:1;white-space:pre;color:#222;left:15px;transform:scaleX(0.88);transform-origin:0 0;">Départ cuisine :</span><span style="position:absolute;top:114.42px;font-size:12.5px;line-height:1;white-space:pre;color:#111;font-weight:700;letter-spacing:0.1px;left:95px;">09:00</span><span style="position:absolute;top:133.84px;font-size:12px;line-height:1;white-space:pre;color:#222;left:14px;transform:scaleX(0.88);transform-origin:0 0;">Rennes Atalante Beaulieu 1 Avenue de Belle Fontaine</span><span style="position:absolute;top:146.84px;font-size:12px;line-height:1;white-space:pre;color:#222;left:14px;transform:scaleX(0.88);transform-origin:0 0;">35510 CESSON-SÉVIGNÉ</span>
</div>
<svg style="position:absolute;left:576px;top:42px" width="8" height="6" viewBox="0 0 8 6"><path d="M1 4.500h6L4 1.500z" fill="#333"/></svg>
<svg style="position:absolute;left:576px;top:451px" width="8" height="6" viewBox="0 0 8 6"><path d="M1 1.500h6L4 4.500z" fill="#333"/></svg>
<div style="position:absolute;left:578px;top:56px;width:3.5px;height:600px;background:#666;"></div>
</div>
<div style="position:absolute;left:608px;top:723px;width:594px;height:231px;overflow:hidden">
<div style="position:absolute;left:2px;top:-2px;width:590px;height:600px;border-left:1px solid #e4e4e4;"></div>
<svg style="position:absolute;left:15px;top:8px" width="13" height="16" viewBox="0 0 13 16"><path fill="#ff0000" d="M0.3 1.5h3.5l1-1.3h3.4l1 1.3h3.5v1.7H0.3z M1.3 4h10.4v10.4a1.4 1.4 0 0 1-1.4 1.4H2.7a1.4 1.4 0 0 1-1.4-1.4z"/></svg>
<span style="position:absolute;top:11.34px;font-size:12px;line-height:1;white-space:pre;color:#c2c2c2;font-weight:700;letter-spacing:-0.15px;left:42px;">Intitulé de tournée</span>
<svg style="position:absolute;left:12px;top:33px" width="18" height="18" viewBox="0 0 18 18"><rect x="3.6" y="0.8" width="10.8" height="7" rx="1.5" fill="#fff" stroke="#222" stroke-width="1.5"/><rect x="0.3" y="6.6" width="17.4" height="7.6" rx="2.2" fill="#222"/><rect x="3.6" y="10.4" width="10.8" height="6.8" rx="1.2" fill="#fff" stroke="#222" stroke-width="1.5"/><path d="M5.8 12.6h6.4M5.8 14.7h4.4" stroke="#222" stroke-width="1.1"/><rect x="14" y="7.6" width="1.8" height="1.8" fill="#fff"/></svg>
<div style="position:absolute;left:39px;top:50px;width:238px;height:1px;background:#b8b8b8;"></div>
<span style="position:absolute;top:68.77px;font-size:11.5px;line-height:1;white-space:pre;color:#111;font-weight:700;letter-spacing:-0.3px;left:15px;">Début</span>
<div style="position:absolute;left:73px;top:64px;width:89px;height:18px;background:#fff;border:1px solid #d0d0d0;border-bottom:2px solid #8a8a8a;border-radius:3px;"></div>
<span style="position:absolute;top:69.77px;font-size:11.5px;line-height:1;white-space:pre;color:#1a1a1a;letter-spacing:-0.35px;left:89.5px;">30/04/2025</span>
<svg style="position:absolute;left:147px;top:68px" width="14" height="13" viewBox="0 0 14 13"><rect x="0.5" y="0.5" width="13" height="12" fill="#fff" stroke="none"/><path d="M0.5 0v12.5M13.5 0v10" stroke="#4a90d9" stroke-width="1"/><path d="M1 2h12" stroke="#999" stroke-width="1"/><path d="M2.5 4.5h10M2.5 7h10M2.5 9.500h8" stroke="#8db4f0" stroke-width="1.6" stroke-dasharray="1.6 1"/><path d="M10.5 12.500l3-2.5v-0.500h-3z" fill="#4a90d9"/><path d="M0.5 12.500h10" stroke="#4a90d9" stroke-width="1"/></svg>
<span style="position:absolute;top:68.34px;font-size:12px;line-height:1;white-space:pre;color:#111;font-weight:700;left:188px;">à</span>
<div style="position:absolute;left:206px;top:64px;width:41px;height:18px;background:#fff;border:1px solid #d0d0d0;border-bottom:2px solid #8a8a8a;border-radius:3px;"></div>
<span style="position:absolute;top:69.77px;font-size:11.5px;line-height:1;white-space:pre;color:#1a1a1a;letter-spacing:-0.4px;left:219px;">00:00</span>
<span style="position:absolute;top:99.77px;font-size:11.5px;line-height:1;white-space:pre;color:#111;font-weight:700;letter-spacing:-0.3px;left:15px;">Fin</span>
<div style="position:absolute;left:73px;top:95px;width:89px;height:18px;background:#fff;border:1px solid #d0d0d0;border-bottom:2px solid #8a8a8a;border-radius:3px;"></div>
<span style="position:absolute;top:100.77px;font-size:11.5px;line-height:1;white-space:pre;color:#1a1a1a;letter-spacing:-0.35px;left:89.5px;">30/04/2025</span>
<svg style="position:absolute;left:147px;top:99px" width="14" height="13" viewBox="0 0 14 13"><rect x="0.5" y="0.5" width="13" height="12" fill="#fff" stroke="none"/><path d="M0.5 0v12.5M13.5 0v10" stroke="#4a90d9" stroke-width="1"/><path d="M1 2h12" stroke="#999" stroke-width="1"/><path d="M2.5 4.5h10M2.5 7h10M2.5 9.500h8" stroke="#8db4f0" stroke-width="1.6" stroke-dasharray="1.6 1"/><path d="M10.5 12.500l3-2.5v-0.500h-3z" fill="#4a90d9"/><path d="M0.5 12.500h10" stroke="#4a90d9" stroke-width="1"/></svg>
<span style="position:absolute;top:99.34px;font-size:12px;line-height:1;white-space:pre;color:#111;font-weight:700;left:188px;">à</span>
<div style="position:absolute;left:206px;top:95px;width:41px;height:18px;background:#fff;border:1px solid #d0d0d0;border-bottom:2px solid #8a8a8a;border-radius:3px;"></div>
<span style="position:absolute;top:100.77px;font-size:11.5px;line-height:1;white-space:pre;color:#1a1a1a;letter-spacing:-0.4px;left:219px;">00:00</span>
<span style="position:absolute;top:135.27px;font-size:11.5px;line-height:1;white-space:pre;color:#111;font-weight:700;letter-spacing:-0.4px;left:16px;">Départ Cuisine</span>
<div style="position:absolute;left:105px;top:130px;width:43px;height:18px;background:#fff;border:1px solid #d0d0d0;border-bottom:2px solid #8a8a8a;border-radius:3px;"></div>
<span style="position:absolute;top:135.77px;font-size:11.5px;line-height:1;white-space:pre;color:#1a1a1a;letter-spacing:-0.4px;left:119px;">00:00</span>
<span style="position:absolute;top:160.84px;font-size:12px;line-height:1;white-space:pre;color:#c6c6c6;left:17px;transform:scaleX(0.86);transform-origin:0 0;">Commentaire</span>
<div style="position:absolute;left:14px;top:222px;width:265px;height:1px;background:#b8b8b8;"></div>
<div style="position:absolute;left:10px;top:226px;width:269px;height:20px;background:#c8c8c8;"></div>
<span style="position:absolute;top:229.92px;font-size:12.5px;line-height:1;white-space:pre;color:#333;font-weight:700;letter-spacing:-0.4px;left:-55.5px;width:400px;text-align:center;">Véhicule(s)</span>
<div style="position:absolute;left:10px;top:403px;width:269px;height:20px;background:#c8c8c8;"></div>
<span style="position:absolute;top:406.92px;font-size:12.5px;line-height:1;white-space:pre;color:#333;font-weight:700;letter-spacing:-0.25px;left:-56px;width:400px;text-align:center;">Chauffeur/se(s)</span>
<div style="position:absolute;left:290px;top:7px;width:24px;height:24px;background:#339933;border-radius:3px"><svg width="24" height="24" viewBox="0 0 24 24"><path d="M12 5v14M5 12h14" stroke="#fff" stroke-width="2.6"/></svg></div>
<svg style="position:absolute;left:319.5px;top:1.5px" width="31" height="29" viewBox="0 0 31 29"><path d="M4.6 14.4h21.8l3.6 13.6H0.8z" fill="#fff" stroke="#000" stroke-width="1.3" stroke-linejoin="round"/><path d="M5.5 14.8L27.5 27.6M9.5 14.6L29 26M2.8 20.5l8 4.8M14 19.8l-4.6 8M13 24.5l4.4 2.6M23.5 14.8l-4 5.6M26.8 17.5l-3.6 5" stroke="#000" stroke-width="1.2" fill="none"/><path d="M20.8 1c3 0 5.2 2.3 5.2 5.2 0 3.4-3.4 7.6-5.2 12-1.8-4.4-5.2-8.6-5.2-12C15.600 3.3 17.8 1 20.8 1z" fill="#fff" stroke="#000" stroke-width="1.3"/><circle cx="20.8" cy="6.4" r="2.2" fill="#fff" stroke="#000" stroke-width="1.2"/></svg>
<div style="position:absolute;left:284px;top:36px;width:292px;height:424.5px;overflow:hidden">
<div style="position:absolute;left:3px;top:2px;width:276px;height:163.5px;border:4px solid #686868;border-bottom-width:4px;border-radius:7px 7px 0 0;background:#fff;"></div><svg style="position:absolute;left:16.5px;top:8px" width="13" height="16" viewBox="0 0 13 16"><path fill="#ff0000" d="M0.3 1.5h3.5l1-1.3h3.4l1 1.3h3.5v1.7H0.3z M1.3 4h10.4v10.4a1.4 1.4 0 0 1-1.4 1.4H2.7a1.4 1.4 0 0 1-1.4-1.4z"/></svg><span style="position:absolute;top:10.73px;font-size:14.5px;line-height:1;white-space:pre;color:#111;font-weight:700;letter-spacing:-0.1px;left:38px;text-decoration:underline;text-underline-offset:0.5px;text-decoration-thickness:1px;">C24053002</span><div style="position:absolute;left:258px;top:6.5px;width:21px;height:21.5px;border:1px solid #333;border-radius:3px;background:#fff;"></div><span style="position:absolute;top:11.92px;font-size:12.5px;line-height:1;white-space:pre;color:#334;font-weight:700;left:69.5px;width:400px;text-align:center;">1</span><span style="position:absolute;top:32.42px;font-size:12.5px;line-height:1;white-space:pre;color:#222;letter-spacing:-0.45px;left:15px;">Commande Semaine 28</span><span style="position:absolute;top:52.34px;font-size:12px;line-height:1;white-space:pre;color:#111;font-weight:700;letter-spacing:0px;left:15px;">1 HEALTHMEDIA</span><span style="position:absolute;top:75.34px;font-size:12px;line-height:1;white-space:pre;color:#111;font-weight:700;letter-spacing:0.1px;left:15px;">Nb convives :</span><span style="position:absolute;top:74.07px;font-size:13.5px;line-height:1;white-space:pre;color:#222;left:102.5px;transform:scaleX(0.9);transform-origin:0 0;">300</span><span style="position:absolute;top:92.84px;font-size:12px;line-height:1;white-space:pre;color:#222;left:15px;transform:scaleX(0.88);transform-origin:0 0;">Livraison :</span><span style="position:absolute;top:92.42px;font-size:12.5px;line-height:1;white-space:pre;color:#111;font-weight:700;letter-spacing:0.5px;left:65.5px;">30/05/2024</span><span style="position:absolute;top:92.42px;font-size:12.5px;line-height:1;white-space:pre;color:#111;font-weight:700;letter-spacing:0.1px;left:147px;">10:00 - 10:30</span><span style="position:absolute;top:114.84px;font-size:12px;line-height:1;white-space:pre;color:#222;left:15px;transform:scaleX(0.88);transform-origin:0 0;">Départ cuisine :</span><span style="position:absolute;top:114.42px;font-size:12.5px;line-height:1;white-space:pre;color:#111;font-weight:700;letter-spacing:0.1px;left:95px;">09:00</span><span style="position:absolute;top:133.84px;font-size:12px;line-height:1;white-space:pre;color:#222;left:14px;transform:scaleX(0.88);transform-origin:0 0;">11 Quai de Dion Bouton 92800 PUTEAUX</span>
</div>
<svg style="position:absolute;left:576px;top:42px" width="8" height="6" viewBox="0 0 8 6"><path d="M1 4.500h6L4 1.500z" fill="#333"/></svg>
<svg style="position:absolute;left:576px;top:451px" width="8" height="6" viewBox="0 0 8 6"><path d="M1 1.500h6L4 4.500z" fill="#333"/></svg>
<div style="position:absolute;left:578px;top:56px;width:3.5px;height:600px;background:#666;"></div>
</div>
<svg style="position:absolute;left:1278px;top:154px" width="8" height="6" viewBox="0 0 8 6"><path d="M1 4.500h6L4 1.500z" fill="#333"/></svg>
<svg style="position:absolute;left:1278px;top:943px" width="8" height="6" viewBox="0 0 8 6"><path d="M1 1.500h6L4 4.500z" fill="#333"/></svg>
<div style="position:absolute;left:1280.5px;top:169px;width:3.5px;height:571.5px;background:#666;"></div>
<div style="position:absolute;left:1311px;top:82px;width:190px;height:28px;background:#e0e0e0;border-radius:14px;"></div>
<div style="position:absolute;left:1313px;top:84px;width:91px;height:24px;background:#555;border-radius:12px;"></div>
<span style="position:absolute;top:90.77px;font-size:11.5px;line-height:1;white-space:pre;color:#fff;letter-spacing:-0.4px;left:1158px;width:400px;text-align:center;">Véhicule</span>
<span style="position:absolute;top:90.77px;font-size:11.5px;line-height:1;white-space:pre;color:#9a9a9a;letter-spacing:-0.45px;left:1253.5px;width:400px;text-align:center;">Personnel</span>
<span style="position:absolute;top:126.27px;font-size:11.5px;line-height:1;white-space:pre;color:#111;font-weight:700;letter-spacing:-0.6px;left:1321px;">Recherche</span>
<div style="position:absolute;left:1389px;top:121px;width:246px;height:19px;background:#fff;border:1px solid #d0d0d0;border-bottom:2px solid #8a8a8a;border-radius:3px;"></div>
<span style="position:absolute;top:127.27px;font-size:11.5px;line-height:1;white-space:pre;color:#777;letter-spacing:0.05px;left:1393px;">Nom, Marque, Modèle...</span>
<div style="position:absolute;left:1640px;top:120px;width:21px;height:22px;border:1px solid #d0d0d0;border-radius:4px;background:#fdfdfd;"></div>
<svg style="position:absolute;left:1645.5px;top:126.5px" width="11" height="11" viewBox="0 0 11 11"><path d="M1 1l9 9M10 1L1 10" stroke="#222" stroke-width="1.5"/></svg>
<div style="position:absolute;left:1397px;top:151px;width:11px;height:11px;border:1px solid #0a5fb8;border-radius:3px;background:#fff;"></div>
<span style="position:absolute;top:152.77px;font-size:11.5px;line-height:1;white-space:pre;color:#111;font-weight:700;letter-spacing:-0.35px;left:1416px;">Poids lourd</span>
<div style="position:absolute;left:1503px;top:151px;width:11px;height:11px;border:1px solid #0a5fb8;border-radius:3px;background:#fff;"></div>
<span style="position:absolute;top:152.77px;font-size:11.5px;line-height:1;white-space:pre;color:#111;font-weight:700;letter-spacing:-0.4px;left:1522px;">Réfrigéré</span>
<div style="position:absolute;left:1317px;top:186px;width:4px;height:60px;background:#00f000;"></div>
<span style="position:absolute;top:183.72px;font-size:12.5px;line-height:1;white-space:pre;color:#111;font-weight:700;letter-spacing:-0.3px;left:1328px;">FIAT DOBLO</span>
<span style="position:absolute;top:189.27px;font-size:11.5px;line-height:1;white-space:pre;color:#111;letter-spacing:0px;left:1502px;">Volume</span>
<div style="position:absolute;left:1562px;top:184px;width:82px;height:17px;background:#fff;border:1px solid #d0d0d0;border-bottom:2px solid #8a8a8a;border-radius:3px;"></div>
<span style="position:absolute;top:188.77px;font-size:11.5px;line-height:1;white-space:pre;color:#111;letter-spacing:-0.2px;right:30.5px;">5m<span style="font-size:7px;vertical-align:4px;letter-spacing:0">3</span></span>
<span style="position:absolute;top:211.27px;font-size:11.5px;line-height:1;white-space:pre;color:#111;letter-spacing:-0.3px;left:1502px;">Poids ac.</span>
<div style="position:absolute;left:1562px;top:206px;width:82px;height:17.5px;background:#fff;border:1px solid #d0d0d0;border-bottom:2px solid #8a8a8a;border-radius:3px;"></div>
<span style="position:absolute;top:211.77px;font-size:11.5px;line-height:1;white-space:pre;color:#111;letter-spacing:-0.2px;right:31px;">300kg</span>
<div style="position:absolute;left:1397px;top:241px;width:11px;height:11px;border:1px solid #0a5fb8;border-radius:3px;background:#fff;"></div>
<span style="position:absolute;top:242.77px;font-size:11.5px;line-height:1;white-space:pre;color:#111;font-weight:700;letter-spacing:-0.35px;left:1416px;">Poids lourd</span>
<div style="position:absolute;left:1498px;top:241px;width:11px;height:11px;border:1px solid #0a5fb8;border-radius:3px;background:#fff;"></div>
<span style="position:absolute;top:242.77px;font-size:11.5px;line-height:1;white-space:pre;color:#111;font-weight:700;letter-spacing:-0.4px;left:1517px;">Réfrigéré</span>
<div style="position:absolute;left:1316px;top:266px;width:350px;height:79.5px;background:#fff;box-shadow:0 1px 3px rgba(0,0,0,.25);"></div>
<div style="position:absolute;left:1317px;top:272px;width:4px;height:60px;background:#00f000;"></div>
<span style="position:absolute;top:269.72px;font-size:12.5px;line-height:1;white-space:pre;color:#111;font-weight:700;letter-spacing:-0.3px;left:1328px;">IVECO_1</span>
<span style="position:absolute;top:275.27px;font-size:11.5px;line-height:1;white-space:pre;color:#111;letter-spacing:0px;left:1502px;">Volume</span>
<div style="position:absolute;left:1562px;top:270px;width:82px;height:17px;background:#fff;border:1px solid #d0d0d0;border-bottom:2px solid #8a8a8a;border-radius:3px;"></div>
<span style="position:absolute;top:274.77px;font-size:11.5px;line-height:1;white-space:pre;color:#111;letter-spacing:-0.2px;right:30.5px;">15m<span style="font-size:7px;vertical-align:4px;letter-spacing:0">3</span></span>
<span style="position:absolute;top:297.27px;font-size:11.5px;line-height:1;white-space:pre;color:#111;letter-spacing:-0.3px;left:1502px;">Poids ac.</span>
<div style="position:absolute;left:1562px;top:292px;width:82px;height:17.5px;background:#fff;border:1px solid #d0d0d0;border-bottom:2px solid #8a8a8a;border-radius:3px;"></div>
<span style="position:absolute;top:297.77px;font-size:11.5px;line-height:1;white-space:pre;color:#111;letter-spacing:-0.2px;right:31px;">1 000kg</span>
<div style="position:absolute;left:1397px;top:327px;width:11px;height:11px;border:1px solid #0a5fb8;border-radius:3px;background:#fff;"></div>
<span style="position:absolute;top:328.77px;font-size:11.5px;line-height:1;white-space:pre;color:#111;font-weight:700;letter-spacing:-0.35px;left:1416px;">Poids lourd</span>
<div style="position:absolute;left:1498px;top:327px;width:11px;height:11px;border:1px solid #0a5fb8;border-radius:3px;background:#fff;"></div>
<span style="position:absolute;top:328.77px;font-size:11.5px;line-height:1;white-space:pre;color:#111;font-weight:700;letter-spacing:-0.4px;left:1517px;">Réfrigéré</span>
<div style="position:absolute;left:1316px;top:352px;width:350px;height:79.5px;background:#fff;box-shadow:0 1px 3px rgba(0,0,0,.25);"></div>
<div style="position:absolute;left:1317px;top:358px;width:4px;height:60px;background:#00f000;"></div>
<span style="position:absolute;top:355.72px;font-size:12.5px;line-height:1;white-space:pre;color:#111;font-weight:700;letter-spacing:-0.3px;left:1328px;">IVECO_2</span>
<span style="position:absolute;top:376.27px;font-size:11.5px;line-height:1;white-space:pre;color:#666;font-weight:700;letter-spacing:-0.2px;left:1328px;">Iveco</span>
<span style="position:absolute;top:395.27px;font-size:11.5px;line-height:1;white-space:pre;color:#aaa;font-weight:700;letter-spacing:-0.2px;left:1328px;">Daily</span>
<span style="position:absolute;top:361.27px;font-size:11.5px;line-height:1;white-space:pre;color:#111;letter-spacing:0px;left:1502px;">Volume</span>
<div style="position:absolute;left:1562px;top:356px;width:82px;height:17px;background:#fff;border:1px solid #d0d0d0;border-bottom:2px solid #8a8a8a;border-radius:3px;"></div>
<span style="position:absolute;top:360.77px;font-size:11.5px;line-height:1;white-space:pre;color:#111;letter-spacing:-0.2px;right:30.5px;">12m<span style="font-size:7px;vertical-align:4px;letter-spacing:0">3</span></span>
<span style="position:absolute;top:383.27px;font-size:11.5px;line-height:1;white-space:pre;color:#111;letter-spacing:-0.3px;left:1502px;">Poids ac.</span>
<div style="position:absolute;left:1562px;top:378px;width:82px;height:17.5px;background:#fff;border:1px solid #d0d0d0;border-bottom:2px solid #8a8a8a;border-radius:3px;"></div>
<span style="position:absolute;top:383.77px;font-size:11.5px;line-height:1;white-space:pre;color:#111;letter-spacing:-0.2px;right:31px;">2 000kg</span>
<div style="position:absolute;left:1397px;top:413px;width:11px;height:11px;border:1px solid #0a5fb8;border-radius:3px;background:#fff;"></div>
<span style="position:absolute;top:414.77px;font-size:11.5px;line-height:1;white-space:pre;color:#111;font-weight:700;letter-spacing:-0.35px;left:1416px;">Poids lourd</span>
<div style="position:absolute;left:1498px;top:413px;width:13px;height:13px;background:#0f3f8c;border-radius:3px"><svg width="13" height="13" viewBox="0 0 13 13"><path d="M3 6.700l2.500 2.500L10 4" stroke="#fff" stroke-width="1.3" fill="none"/></svg></div>
<span style="position:absolute;top:414.77px;font-size:11.5px;line-height:1;white-space:pre;color:#111;font-weight:700;letter-spacing:-0.4px;left:1517px;">Réfrigéré</span>
<div style="position:absolute;left:1316px;top:438px;width:350px;height:79.5px;background:#fff;box-shadow:0 1px 3px rgba(0,0,0,.25);"></div>
<div style="position:absolute;left:1317px;top:444px;width:4px;height:60px;background:#00f000;"></div>
<span style="position:absolute;top:441.72px;font-size:12.5px;line-height:1;white-space:pre;color:#111;font-weight:700;letter-spacing:-0.3px;left:1328px;">TEST</span>
<span style="position:absolute;top:462.27px;font-size:11.5px;line-height:1;white-space:pre;color:#666;font-weight:700;letter-spacing:-0.2px;left:1328px;">df</span>
<span style="position:absolute;top:481.27px;font-size:11.5px;line-height:1;white-space:pre;color:#aaa;font-weight:700;letter-spacing:-0.2px;left:1328px;">ff</span>
<span style="position:absolute;top:447.27px;font-size:11.5px;line-height:1;white-space:pre;color:#111;letter-spacing:0px;left:1502px;">Volume</span>
<div style="position:absolute;left:1562px;top:442px;width:82px;height:17px;background:#fff;border:1px solid #d0d0d0;border-bottom:2px solid #8a8a8a;border-radius:3px;"></div>
<span style="position:absolute;top:446.77px;font-size:11.5px;line-height:1;white-space:pre;color:#111;letter-spacing:-0.2px;right:30.5px;">5m<span style="font-size:7px;vertical-align:4px;letter-spacing:0">3</span></span>
<span style="position:absolute;top:469.27px;font-size:11.5px;line-height:1;white-space:pre;color:#111;letter-spacing:-0.3px;left:1502px;">Poids ac.</span>
<div style="position:absolute;left:1562px;top:464px;width:82px;height:17.5px;background:#fff;border:1px solid #d0d0d0;border-bottom:2px solid #8a8a8a;border-radius:3px;"></div>
<span style="position:absolute;top:469.77px;font-size:11.5px;line-height:1;white-space:pre;color:#111;letter-spacing:-0.2px;right:31px;">10kg</span>
<div style="position:absolute;left:1397px;top:499px;width:11px;height:11px;border:1px solid #0a5fb8;border-radius:3px;background:#fff;"></div>
<span style="position:absolute;top:500.77px;font-size:11.5px;line-height:1;white-space:pre;color:#111;font-weight:700;letter-spacing:-0.35px;left:1416px;">Poids lourd</span>
<div style="position:absolute;left:1498px;top:499px;width:13px;height:13px;background:#0f3f8c;border-radius:3px"><svg width="13" height="13" viewBox="0 0 13 13"><path d="M3 6.700l2.500 2.500L10 4" stroke="#fff" stroke-width="1.3" fill="none"/></svg></div>
<span style="position:absolute;top:500.77px;font-size:11.5px;line-height:1;white-space:pre;color:#111;font-weight:700;letter-spacing:-0.4px;left:1517px;">Réfrigéré</span>
<div style="position:absolute;left:1316px;top:524px;width:350px;height:79.5px;background:#fff;box-shadow:0 1px 3px rgba(0,0,0,.25);"></div>
<div style="position:absolute;left:1317px;top:530px;width:4px;height:60px;background:#00f000;"></div>
<span style="position:absolute;top:527.72px;font-size:12.5px;line-height:1;white-space:pre;color:#111;font-weight:700;letter-spacing:-0.3px;left:1328px;">TRAFIC</span>
<span style="position:absolute;top:533.27px;font-size:11.5px;line-height:1;white-space:pre;color:#111;letter-spacing:0px;left:1502px;">Volume</span>
<div style="position:absolute;left:1562px;top:528px;width:82px;height:17px;background:#fff;border:1px solid #d0d0d0;border-bottom:2px solid #8a8a8a;border-radius:3px;"></div>
<span style="position:absolute;top:532.77px;font-size:11.5px;line-height:1;white-space:pre;color:#111;letter-spacing:-0.2px;right:30.5px;">10m<span style="font-size:7px;vertical-align:4px;letter-spacing:0">3</span></span>
<span style="position:absolute;top:555.27px;font-size:11.5px;line-height:1;white-space:pre;color:#111;letter-spacing:-0.3px;left:1502px;">Poids ac.</span>
<div style="position:absolute;left:1562px;top:550px;width:82px;height:17.5px;background:#fff;border:1px solid #d0d0d0;border-bottom:2px solid #8a8a8a;border-radius:3px;"></div>
<span style="position:absolute;top:555.77px;font-size:11.5px;line-height:1;white-space:pre;color:#111;letter-spacing:-0.2px;right:31px;">0kg</span>
<div style="position:absolute;left:1397px;top:585px;width:11px;height:11px;border:1px solid #0a5fb8;border-radius:3px;background:#fff;"></div>
<span style="position:absolute;top:586.77px;font-size:11.5px;line-height:1;white-space:pre;color:#111;font-weight:700;letter-spacing:-0.35px;left:1416px;">Poids lourd</span>
<div style="position:absolute;left:1498px;top:585px;width:11px;height:11px;border:1px solid #0a5fb8;border-radius:3px;background:#fff;"></div>
<span style="position:absolute;top:586.77px;font-size:11.5px;line-height:1;white-space:pre;color:#111;font-weight:700;letter-spacing:-0.4px;left:1517px;">Réfrigéré</span>
<span style="position:absolute;top:543.23px;font-size:8px;line-height:1;white-space:pre;color:#444;left:1301px;">=</span>
</body></html>
